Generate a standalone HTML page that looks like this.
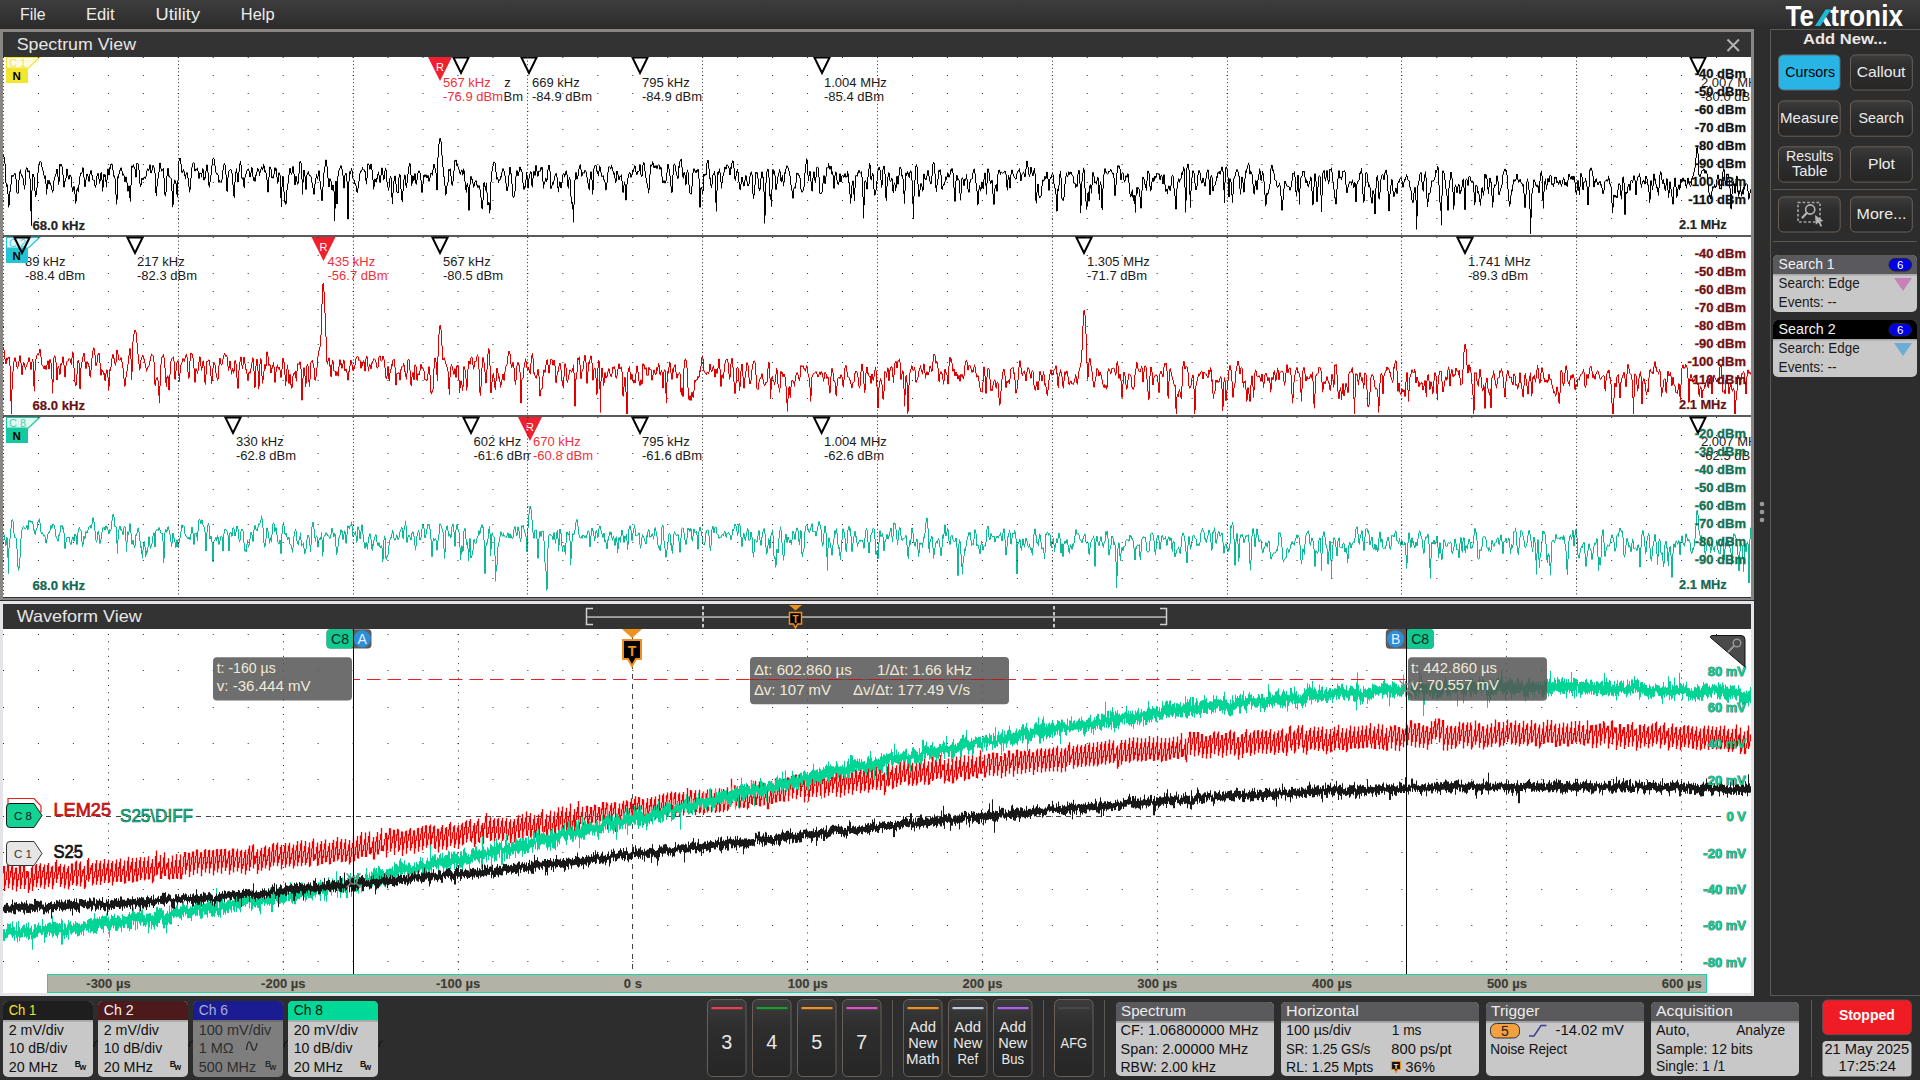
<!DOCTYPE html>
<html><head><meta charset="utf-8"><title>Tektronix</title>
<style>html,body{margin:0;padding:0;background:#2d2d2d;overflow:hidden;width:1920px;height:1080px}
svg{display:block;font-family:"Liberation Sans", sans-serif}</style></head>
<body><svg width="1920" height="1080" viewBox="0 0 1920 1080" font-family='"Liberation Sans", sans-serif'>
<rect x="0" y="0" width="1920" height="1080" fill="#2d2d2d"/>
<defs><linearGradient id="mg" x1="0" y1="0" x2="0" y2="1"><stop offset="0" stop-color="#3d3d3d"/><stop offset="1" stop-color="#2b2b2b"/></linearGradient></defs>
<rect x="0" y="0" width="1920" height="29" fill="url(#mg)"/>
<text x="20.0" y="19.5" font-size="16" fill="#ececec" textLength="25.5" lengthAdjust="spacingAndGlyphs">File</text>
<text x="86.0" y="19.5" font-size="16" fill="#ececec" textLength="28.5" lengthAdjust="spacingAndGlyphs">Edit</text>
<text x="155.5" y="19.5" font-size="16" fill="#ececec" textLength="44.5" lengthAdjust="spacingAndGlyphs">Utility</text>
<text x="240.8" y="19.5" font-size="16" fill="#ececec" textLength="33.7" lengthAdjust="spacingAndGlyphs">Help</text>
<text x="1785.5" y="25.8" font-size="30" fill="#ffffff" font-weight="bold" textLength="28.4" lengthAdjust="spacingAndGlyphs">Te</text>
<text x="1830.2" y="25.8" font-size="30" fill="#ffffff" font-weight="bold" textLength="72.8" lengthAdjust="spacingAndGlyphs">tronix</text>
<path d="M1821.5 18.2L1824.5 14.2L1831.4 25.9H1826Z" fill="#ffffff"/>
<path d="M1814.9 25.9H1820.4L1831 9.4H1825.6Z" fill="#20b8d8"/>
<rect x="0" y="29" width="1754" height="571" fill="#8a8684"/>
<rect x="3" y="32" width="1748" height="25" fill="#333333"/>
<text x="16.7" y="50.0" font-size="16.5" fill="#e6e6e6" textLength="119.3" lengthAdjust="spacingAndGlyphs">Spectrum View</text>
<path d="M1727.5 39.5L1739 51M1739 39.5L1727.5 51" stroke="#b4b4b4" stroke-width="2" fill="none"/>
<rect x="3" y="57" width="1748" height="540" fill="#ffffff"/>
<rect x="3" y="597" width="1748" height="1" fill="#333"/>
<clipPath id="cp1"><rect x="3" y="57" width="1748" height="178"/></clipPath>
<clipPath id="cp2"><rect x="3" y="237" width="1748" height="178"/></clipPath>
<clipPath id="cp3"><rect x="3" y="417" width="1748" height="180"/></clipPath>
<g clip-path="url(#cp1)">
<path d="M3.5 154.6V157.1M4.5 157.1V163.7M5.5 163.7V182.8M6.5 182.8V186.9M7.5 184.5V194.0M8.5 194.0V207.4M9.5 191.2V205.2M10.5 184.4V191.8M11.5 175.2V184.4M12.5 175.2V176.8M13.5 174.8V176.5M14.5 173.2V174.8M15.5 173.4V179.1M16.5 179.1V192.6M17.5 192.6V193.7M18.5 180.2V193.3M19.5 171.5V180.2M20.5 169.6V173.7M21.5 173.7V176.3M22.5 175.5V178.3M23.5 178.3V185.3M24.5 185.1V189.5M25.5 169.7V185.1M26.5 167.4V169.7M27.5 168.0V172.2M28.5 170.5V172.2M29.5 170.5V178.8M30.5 178.8V211.1M31.5 190.4V225.8M32.5 174.0V190.4M33.5 174.0V177.1M34.5 177.1V190.9M35.5 190.9V197.1M36.5 187.6V195.1M37.5 172.8V187.6M38.5 165.3V172.8M39.5 161.6V165.3M40.5 161.2V162.2M41.5 162.2V167.1M42.5 167.1V170.7M43.5 170.7V175.4M44.5 175.4V178.8M45.5 175.5V183.8M46.5 183.8V194.5M47.5 180.2V189.1M48.5 180.2V184.2M49.5 180.3V184.2M50.5 182.6V185.5M51.5 185.5V189.9M52.5 189.9V192.6M53.5 180.6V190.9M54.5 176.7V180.6M55.5 173.9V176.7M56.5 169.0V173.9M57.5 169.0V176.7M58.5 176.7V184.8M59.5 164.1V181.6M60.5 164.1V166.3M61.5 164.1V166.5M62.5 166.5V174.8M63.5 174.8V187.2M64.5 180.9V187.2M65.5 178.0V181.5M66.5 168.9V178.0M67.5 168.9V175.7M68.5 175.7V179.4M69.5 174.9V179.2M70.5 174.9V176.7M71.5 176.7V187.4M72.5 187.4V191.9M73.5 186.2V190.4M74.5 186.5V194.2M75.5 194.2V203.7M76.5 189.6V201.3M77.5 187.7V190.8M78.5 184.7V192.2M79.5 176.3V184.7M80.5 172.8V176.3M81.5 172.4V173.9M82.5 167.4V172.4M83.5 167.8V177.5M84.5 177.5V186.8M85.5 179.7V186.8M86.5 173.9V179.7M87.5 173.9V176.3M88.5 176.3V181.5M89.5 174.1V181.5M90.5 170.4V174.1M91.5 170.4V175.4M92.5 175.0V180.0M93.5 179.6V180.6M94.5 180.0V185.8M95.5 185.0V187.7M96.5 176.0V185.0M97.5 173.2V176.0M98.5 173.3V179.1M99.5 179.1V183.7M100.5 173.1V181.2M101.5 172.1V179.9M102.5 179.9V191.5M103.5 174.2V187.4M104.5 174.2V177.0M105.5 174.7V181.7M106.5 179.8V187.2M107.5 168.8V179.8M108.5 168.8V175.2M109.5 167.3V175.2M110.5 164.2V168.9M111.5 163.6V165.1M112.5 164.3V170.3M113.5 170.3V176.6M114.5 175.5V178.5M115.5 178.5V194.5M116.5 194.5V204.5M117.5 176.4V199.5M118.5 174.1V178.4M119.5 170.2V174.1M120.5 167.8V170.7M121.5 167.6V171.2M122.5 171.2V175.6M123.5 173.6V175.6M124.5 175.6V181.9M125.5 176.8V181.9M126.5 176.8V182.7M127.5 182.7V191.3M128.5 185.8V191.3M129.5 185.8V198.0M130.5 185.2V201.7M131.5 165.7V185.2M132.5 165.7V167.7M133.5 164.4V167.2M134.5 166.9V169.1M135.5 169.1V177.3M136.5 163.2V177.2M137.5 163.1V164.1M138.5 163.9V170.0M139.5 170.0V183.6M140.5 183.6V186.9M141.5 178.1V185.0M142.5 178.1V179.9M143.5 177.5V179.9M144.5 176.8V178.2M145.5 176.4V178.8M146.5 170.6V176.4M147.5 168.5V170.6M148.5 169.1V171.1M149.5 164.6V169.5M150.5 164.7V173.0M151.5 170.3V173.2M152.5 165.4V170.3M153.5 165.4V167.5M154.5 167.5V173.2M155.5 173.2V193.0M156.5 186.3V196.1M157.5 178.4V186.3M158.5 172.0V178.4M159.5 162.9V172.0M160.5 162.9V168.6M161.5 168.6V171.5M162.5 169.1V170.7M163.5 168.1V178.1M164.5 178.1V194.7M165.5 191.9V196.3M166.5 175.9V191.9M167.5 168.2V175.9M168.5 168.2V176.6M169.5 175.5V177.5M170.5 177.4V178.4M171.5 178.4V191.0M172.5 191.0V207.2M173.5 183.8V204.7M174.5 179.7V183.8M175.5 180.5V183.7M176.5 183.4V194.4M177.5 180.3V197.2M178.5 160.9V180.3M179.5 158.0V160.9M180.5 158.0V164.1M181.5 164.1V172.6M182.5 170.8V172.8M183.5 169.1V171.6M184.5 171.2V176.2M185.5 174.7V179.2M186.5 172.5V174.7M187.5 172.5V178.1M188.5 177.9V186.7M189.5 186.7V192.4M190.5 178.2V189.7M191.5 167.4V178.2M192.5 163.4V167.4M193.5 162.3V163.4M194.5 163.1V171.2M195.5 168.8V171.2M196.5 168.7V170.2M197.5 167.7V171.1M198.5 171.1V178.6M199.5 172.8V178.6M200.5 172.8V174.0M201.5 173.0V177.3M202.5 168.3V173.0M203.5 169.3V180.2M204.5 177.0V180.2M205.5 171.1V178.5M206.5 164.7V171.1M207.5 164.8V172.5M208.5 172.5V185.5M209.5 181.9V187.5M210.5 175.2V181.9M211.5 165.5V175.2M212.5 158.8V165.5M213.5 157.7V159.0M214.5 159.0V165.7M215.5 165.7V172.5M216.5 172.5V174.4M217.5 173.4V175.0M218.5 175.0V182.5M219.5 179.9V182.5M220.5 181.4V182.4M221.5 179.5V182.7M222.5 170.2V179.5M223.5 164.6V170.2M224.5 163.2V165.0M225.5 165.0V174.6M226.5 174.6V191.0M227.5 177.5V191.8M228.5 171.1V177.5M229.5 169.9V171.1M230.5 169.1V170.1M231.5 169.7V173.3M232.5 173.3V184.8M233.5 184.8V196.2M234.5 181.9V197.8M235.5 171.8V181.9M236.5 168.4V173.1M237.5 173.1V182.3M238.5 171.8V182.0M239.5 163.6V171.8M240.5 160.9V165.0M241.5 165.0V178.3M242.5 177.5V179.5M243.5 177.5V186.5M244.5 177.5V188.1M245.5 173.9V177.5M246.5 170.6V174.1M247.5 169.1V170.7M248.5 168.6V170.8M249.5 170.8V177.1M250.5 172.7V177.1M251.5 167.1V172.7M252.5 167.9V176.7M253.5 176.7V180.7M254.5 177.4V181.4M255.5 174.7V181.4M256.5 171.8V175.7M257.5 167.9V171.8M258.5 168.9V171.4M259.5 171.4V176.1M260.5 169.2V172.6M261.5 166.6V169.2M262.5 167.6V170.3M263.5 163.9V168.4M264.5 165.9V172.1M265.5 170.3V173.0M266.5 173.0V179.8M267.5 179.8V192.2M268.5 177.1V192.2M269.5 166.8V177.1M270.5 166.8V169.3M271.5 169.3V178.0M272.5 176.5V178.3M273.5 174.3V178.3M274.5 167.6V174.3M275.5 167.6V171.0M276.5 168.5V177.3M277.5 177.3V183.7M278.5 172.7V181.9M279.5 172.7V175.3M280.5 175.3V198.0M281.5 186.9V206.9M282.5 176.1V186.9M283.5 176.4V191.7M284.5 191.7V202.6M285.5 200.8V204.6M286.5 190.0V203.7M287.5 183.5V190.0M288.5 174.8V183.5M289.5 168.2V174.8M290.5 168.2V173.0M291.5 172.7V174.7M292.5 166.4V172.7M293.5 166.4V173.9M294.5 173.9V184.9M295.5 176.2V184.9M296.5 176.2V181.7M297.5 181.7V184.6M298.5 173.5V183.4M299.5 161.8V173.5M300.5 161.1V163.1M301.5 163.1V179.3M302.5 179.3V194.5M303.5 170.0V182.4M304.5 170.0V176.4M305.5 176.4V189.6M306.5 174.8V189.6M307.5 172.6V174.8M308.5 171.2V174.4M309.5 174.4V176.1M310.5 175.3V176.7M311.5 176.7V182.6M312.5 182.6V187.9M313.5 187.9V194.4M314.5 184.2V194.4M315.5 178.1V184.2M316.5 174.1V178.1M317.5 176.4V179.4M318.5 170.6V176.4M319.5 170.6V181.2M320.5 181.2V189.5M321.5 189.5V200.8M322.5 186.8V200.8M323.5 172.7V186.8M324.5 166.5V172.7M325.5 159.8V166.5M326.5 159.8V166.5M327.5 166.5V177.9M328.5 177.9V187.1M329.5 178.7V187.1M330.5 178.7V181.3M331.5 181.3V190.0M332.5 184.9V190.3M333.5 184.9V191.4M334.5 191.4V221.1M335.5 181.1V208.5M336.5 181.1V204.0M337.5 176.3V204.0M338.5 170.4V176.3M339.5 168.1V170.4M340.5 165.6V168.1M341.5 165.6V169.3M342.5 169.3V175.6M343.5 175.6V188.2M344.5 175.3V188.2M345.5 173.1V175.3M346.5 173.3V181.5M347.5 181.5V219.2M348.5 181.3V219.2M349.5 171.4V181.3M350.5 170.9V174.1M351.5 168.0V170.9M352.5 170.5V178.5M353.5 178.5V180.2M354.5 179.9V184.2M355.5 183.3V185.7M356.5 185.7V192.0M357.5 188.3V192.8M358.5 181.2V188.3M359.5 173.4V181.2M360.5 170.8V173.4M361.5 169.8V171.6M362.5 167.0V169.8M363.5 169.3V170.3M364.5 169.6V172.1M365.5 171.2V180.6M366.5 178.0V184.3M367.5 163.8V178.0M368.5 163.6V165.1M369.5 165.1V169.5M370.5 163.9V169.1M371.5 163.9V170.0M372.5 170.0V180.0M373.5 180.0V189.5M374.5 178.9V186.8M375.5 178.9V182.0M376.5 178.0V182.4M377.5 174.1V179.2M378.5 171.7V175.3M379.5 175.3V182.4M380.5 175.3V182.8M381.5 167.8V175.3M382.5 167.8V174.9M383.5 174.9V180.1M384.5 170.9V179.0M385.5 167.8V170.9M386.5 169.8V181.8M387.5 181.8V187.4M388.5 187.4V190.7M389.5 178.3V187.5M390.5 176.0V178.3M391.5 177.8V197.4M392.5 192.8V204.1M393.5 181.2V192.8M394.5 175.9V181.2M395.5 175.8V184.1M396.5 184.1V192.1M397.5 191.7V193.1M398.5 177.6V193.1M399.5 174.0V177.6M400.5 174.9V189.0M401.5 189.0V200.2M402.5 191.0V202.1M403.5 179.5V191.0M404.5 174.6V179.5M405.5 175.4V185.5M406.5 182.9V187.9M407.5 174.0V182.9M408.5 166.4V174.0M409.5 163.0V166.4M410.5 163.7V175.0M411.5 175.0V185.9M412.5 175.7V183.5M413.5 175.9V181.1M414.5 173.4V180.1M415.5 173.6V183.5M416.5 179.8V184.6M417.5 173.0V179.8M418.5 170.7V173.0M419.5 170.7V172.9M420.5 172.9V180.3M421.5 180.3V192.6M422.5 183.8V192.6M423.5 175.1V183.8M424.5 174.6V177.3M425.5 174.6V176.7M426.5 174.7V178.0M427.5 175.4V178.0M428.5 175.4V181.4M429.5 177.7V181.4M430.5 173.2V177.7M431.5 172.8V174.2M432.5 169.8V175.5M433.5 164.1V169.8M434.5 164.2V168.2M435.5 168.2V173.0M436.5 173.0V190.1M437.5 157.5V190.1M438.5 144.1V157.5M439.5 138.4V144.1M440.5 138.0V141.6M441.5 141.6V155.4M442.5 155.4V167.1M443.5 167.1V177.1M444.5 176.5V185.6M445.5 185.6V195.4M446.5 185.8V194.0M447.5 182.3V185.8M448.5 169.2V182.3M449.5 169.2V171.1M450.5 168.6V176.1M451.5 176.1V184.6M452.5 181.3V185.7M453.5 170.7V181.3M454.5 160.4V170.7M455.5 159.9V161.6M456.5 159.9V165.8M457.5 163.5V166.6M458.5 166.6V169.5M459.5 169.5V173.3M460.5 171.9V174.7M461.5 169.8V171.9M462.5 170.3V175.4M463.5 168.6V174.1M464.5 170.6V181.5M465.5 181.5V189.9M466.5 184.7V192.6M467.5 183.1V187.0M468.5 187.0V210.4M469.5 184.6V210.4M470.5 176.3V184.6M471.5 176.3V179.8M472.5 178.9V183.5M473.5 183.5V187.6M474.5 182.0V186.2M475.5 180.6V182.1M476.5 180.6V185.4M477.5 184.7V187.6M478.5 185.4V187.6M479.5 185.5V189.5M480.5 189.5V197.5M481.5 197.5V208.3M482.5 200.2V209.2M483.5 182.9V200.2M484.5 182.1V186.8M485.5 185.9V190.5M486.5 182.8V192.6M487.5 192.6V205.1M488.5 202.1V205.1M489.5 202.7V213.4M490.5 181.8V210.1M491.5 171.3V181.8M492.5 165.9V171.3M493.5 161.9V165.9M494.5 161.9V163.0M495.5 163.0V172.1M496.5 172.1V179.5M497.5 177.2V179.5M498.5 179.4V183.0M499.5 179.3V180.8M500.5 176.1V179.7M501.5 172.3V177.5M502.5 168.5V172.3M503.5 168.5V171.1M504.5 171.1V175.7M505.5 175.7V183.3M506.5 183.3V190.8M507.5 186.7V190.9M508.5 175.4V186.7M509.5 167.1V175.4M510.5 167.1V174.1M511.5 173.4V183.8M512.5 183.8V196.5M513.5 196.2V197.9M514.5 191.2V196.6M515.5 176.5V191.2M516.5 170.5V176.5M517.5 170.5V175.8M518.5 171.9V175.8M519.5 166.9V171.9M520.5 166.9V170.3M521.5 169.2V172.1M522.5 172.1V182.8M523.5 182.8V189.5M524.5 186.1V189.5M525.5 179.7V187.5M526.5 172.1V179.7M527.5 175.3V188.2M528.5 178.6V188.2M529.5 173.8V178.6M530.5 171.3V173.8M531.5 172.1V185.6M532.5 178.3V187.4M533.5 171.2V178.3M534.5 171.2V175.5M535.5 165.3V175.5M536.5 165.3V171.3M537.5 171.3V176.7M538.5 170.9V175.9M539.5 170.7V171.7M540.5 167.5V171.4M541.5 166.9V169.7M542.5 167.2V181.5M543.5 181.5V188.5M544.5 181.5V184.5M545.5 177.8V181.5M546.5 178.7V182.0M547.5 169.7V180.0M548.5 165.0V169.7M549.5 165.0V171.4M550.5 171.4V188.7M551.5 185.6V188.7M552.5 182.1V185.6M553.5 180.6V184.5M554.5 175.7V180.6M555.5 173.5V175.7M556.5 173.2V177.4M557.5 177.4V188.1M558.5 186.6V192.2M559.5 181.5V186.6M560.5 182.1V188.0M561.5 182.1V188.1M562.5 174.6V182.1M563.5 173.2V174.6M564.5 173.8V177.3M565.5 171.4V175.4M566.5 170.5V174.7M567.5 174.7V186.5M568.5 179.7V188.5M569.5 177.2V179.7M570.5 179.3V196.5M571.5 196.5V203.7M572.5 201.9V209.4M573.5 204.6V222.4M574.5 180.1V204.6M575.5 172.4V180.1M576.5 172.4V179.2M577.5 175.7V179.2M578.5 168.9V175.9M579.5 165.3V168.9M580.5 164.3V169.6M581.5 169.6V176.6M582.5 172.3V175.7M583.5 172.4V173.4M584.5 170.2V173.3M585.5 170.2V171.7M586.5 171.7V177.3M587.5 177.3V183.3M588.5 183.3V188.6M589.5 179.2V190.2M590.5 171.6V179.2M591.5 171.6V180.1M592.5 180.1V194.5M593.5 168.5V190.0M594.5 165.6V168.5M595.5 165.1V166.1M596.5 165.5V171.6M597.5 170.6V174.0M598.5 171.2V176.2M599.5 165.6V171.2M600.5 167.0V172.5M601.5 172.5V176.7M602.5 175.8V176.8M603.5 175.4V180.2M604.5 179.6V182.3M605.5 182.3V190.3M606.5 182.7V189.8M607.5 172.3V182.7M608.5 166.7V172.3M609.5 166.4V167.4M610.5 167.3V169.3M611.5 164.8V168.4M612.5 167.2V171.2M613.5 171.2V174.5M614.5 172.7V178.2M615.5 178.2V183.1M616.5 171.0V181.4M617.5 171.0V174.7M618.5 174.7V179.8M619.5 176.4V179.8M620.5 175.8V176.9M621.5 174.5V180.9M622.5 180.9V192.4M623.5 185.3V192.7M624.5 181.7V185.3M625.5 184.4V200.3M626.5 184.3V200.1M627.5 178.1V184.3M628.5 173.8V178.1M629.5 172.1V173.8M630.5 173.0V177.4M631.5 174.4V177.4M632.5 170.0V174.8M633.5 168.6V171.8M634.5 165.3V168.6M635.5 166.0V172.0M636.5 172.0V174.8M637.5 171.0V174.5M638.5 171.0V172.1M639.5 164.4V171.0M640.5 164.5V174.7M641.5 174.7V176.9M642.5 165.1V176.0M643.5 162.2V165.1M644.5 162.9V171.2M645.5 171.2V177.9M646.5 177.9V183.4M647.5 183.4V188.2M648.5 188.2V193.3M649.5 174.4V189.7M650.5 164.6V174.4M651.5 164.6V166.4M652.5 161.3V165.0M653.5 162.9V167.7M654.5 165.6V168.0M655.5 165.6V167.8M656.5 165.4V168.7M657.5 165.5V168.7M658.5 164.5V165.5M659.5 165.1V169.4M660.5 166.7V169.4M661.5 167.5V176.6M662.5 176.6V182.9M663.5 180.5V182.9M664.5 180.5V183.2M665.5 180.7V183.3M666.5 172.6V180.7M667.5 164.1V172.6M668.5 164.1V168.9M669.5 168.9V175.8M670.5 175.8V186.3M671.5 186.3V192.9M672.5 175.0V192.2M673.5 164.7V175.0M674.5 163.6V165.3M675.5 165.3V171.5M676.5 171.5V175.6M677.5 175.6V178.9M678.5 166.1V178.3M679.5 161.3V167.8M680.5 159.4V161.3M681.5 158.9V167.3M682.5 167.3V176.9M683.5 172.7V178.5M684.5 172.1V175.2M685.5 175.2V185.3M686.5 172.3V184.1M687.5 169.7V172.4M688.5 172.4V184.8M689.5 184.8V193.2M690.5 193.1V194.1M691.5 186.3V194.4M692.5 172.9V186.3M693.5 168.6V172.9M694.5 168.6V171.3M695.5 170.6V172.8M696.5 170.0V172.8M697.5 169.2V171.8M698.5 169.2V178.6M699.5 178.6V207.4M700.5 187.8V207.4M701.5 187.0V189.4M702.5 189.4V194.0M703.5 174.0V190.9M704.5 174.0V176.3M705.5 173.7V175.3M706.5 163.1V175.1M707.5 160.1V163.1M708.5 160.1V168.8M709.5 168.8V178.9M710.5 177.7V185.6M711.5 184.4V188.1M712.5 175.0V184.4M713.5 173.3V175.0M714.5 170.9V175.4M715.5 175.4V202.7M716.5 190.6V211.5M717.5 172.1V190.6M718.5 171.2V174.7M719.5 168.6V172.8M720.5 172.6V182.0M721.5 182.0V188.5M722.5 176.0V183.1M723.5 172.4V176.0M724.5 166.9V172.4M725.5 166.9V169.3M726.5 164.7V169.0M727.5 164.7V165.9M728.5 165.9V168.2M729.5 168.2V175.0M730.5 166.9V175.0M731.5 163.1V168.9M732.5 160.5V163.1M733.5 161.0V168.2M734.5 168.2V179.1M735.5 176.1V180.7M736.5 170.9V176.1M737.5 169.0V172.7M738.5 172.0V181.9M739.5 181.9V189.2M740.5 184.2V190.1M741.5 177.0V184.2M742.5 177.0V182.2M743.5 182.2V186.2M744.5 180.3V186.0M745.5 175.3V180.3M746.5 175.7V181.6M747.5 181.5V185.9M748.5 183.9V186.1M749.5 176.4V183.9M750.5 172.6V176.4M751.5 171.6V174.7M752.5 174.7V193.8M753.5 193.8V198.8M754.5 184.8V195.3M755.5 172.1V184.8M756.5 172.1V173.8M757.5 172.4V178.5M758.5 178.5V188.6M759.5 187.8V191.2M760.5 178.4V189.4M761.5 171.7V178.4M762.5 171.7V177.9M763.5 176.9V191.6M764.5 191.6V223.5M765.5 182.8V215.4M766.5 171.6V182.8M767.5 168.9V171.6M768.5 169.2V177.5M769.5 177.5V196.3M770.5 194.1V199.7M771.5 189.4V206.7M772.5 169.4V189.4M773.5 169.4V174.2M774.5 170.8V175.6M775.5 175.6V189.7M776.5 183.8V189.7M777.5 176.6V183.8M778.5 172.7V176.6M779.5 169.1V172.7M780.5 171.5V180.9M781.5 177.4V182.2M782.5 175.1V181.3M783.5 181.3V186.2M784.5 172.3V182.3M785.5 168.8V173.7M786.5 165.6V168.8M787.5 165.8V167.7M788.5 167.7V171.0M789.5 171.0V175.8M790.5 175.8V184.9M791.5 184.9V190.7M792.5 190.7V198.4M793.5 188.5V198.4M794.5 186.8V188.5M795.5 182.7V188.5M796.5 172.9V182.7M797.5 172.9V174.6M798.5 173.4V175.8M799.5 175.2V178.1M800.5 178.1V189.3M801.5 189.2V192.3M802.5 190.6V192.3M803.5 186.7V190.7M804.5 172.9V186.7M805.5 164.0V172.9M806.5 158.5V164.0M807.5 159.8V175.3M808.5 175.3V181.0M809.5 171.1V176.0M810.5 171.3V181.5M811.5 181.5V190.8M812.5 178.0V191.4M813.5 171.6V178.0M814.5 171.9V180.6M815.5 177.2V182.8M816.5 167.3V177.2M817.5 166.7V167.7M818.5 167.6V177.2M819.5 177.2V193.4M820.5 193.0V194.0M821.5 192.1V193.7M822.5 183.3V192.1M823.5 175.5V183.3M824.5 175.5V183.6M825.5 176.5V183.9M826.5 167.4V176.5M827.5 167.3V168.3M828.5 163.0V167.8M829.5 165.7V169.4M830.5 166.1V169.4M831.5 166.1V174.1M832.5 171.4V175.2M833.5 175.2V188.4M834.5 175.6V188.5M835.5 171.7V175.6M836.5 172.4V180.3M837.5 180.3V184.1M838.5 182.1V184.9M839.5 173.6V182.1M840.5 173.6V181.9M841.5 176.0V181.9M842.5 175.1V176.1M843.5 175.5V177.6M844.5 173.5V177.0M845.5 173.5V177.4M846.5 175.8V177.4M847.5 171.0V176.8M848.5 173.6V183.1M849.5 182.4V194.2M850.5 194.2V203.7M851.5 185.5V198.2M852.5 180.8V185.5M853.5 180.8V194.4M854.5 187.8V201.0M855.5 175.4V187.8M856.5 175.2V176.2M857.5 172.4V176.5M858.5 170.3V173.4M859.5 170.2V172.8M860.5 172.5V173.5M861.5 171.3V177.1M862.5 177.1V196.9M863.5 196.9V218.4M864.5 181.3V205.1M865.5 180.4V182.3M866.5 182.3V189.2M867.5 176.9V189.2M868.5 168.8V176.9M869.5 163.0V168.8M870.5 164.9V179.3M871.5 176.1V180.3M872.5 172.9V176.1M873.5 174.4V189.2M874.5 189.2V195.5M875.5 190.2V194.7M876.5 181.0V190.2M877.5 170.5V181.0M878.5 167.4V170.5M879.5 167.0V170.1M880.5 170.1V180.0M881.5 180.0V187.8M882.5 169.5V184.9M883.5 165.9V169.5M884.5 166.1V174.0M885.5 174.0V197.8M886.5 186.3V200.8M887.5 176.8V186.3M888.5 172.4V176.8M889.5 173.0V180.4M890.5 180.4V181.8M891.5 177.8V180.7M892.5 178.7V191.2M893.5 184.7V193.0M894.5 182.6V184.7M895.5 184.7V191.1M896.5 176.3V187.8M897.5 176.1V184.3M898.5 175.4V184.3M899.5 167.3V175.4M900.5 166.9V168.8M901.5 168.8V176.3M902.5 174.9V178.9M903.5 178.9V193.8M904.5 190.7V203.7M905.5 172.8V190.7M906.5 172.8V176.0M907.5 171.2V174.2M908.5 172.9V176.8M909.5 172.2V178.0M910.5 170.4V172.8M911.5 171.5V180.4M912.5 180.4V203.8M913.5 196.3V218.9M914.5 180.1V196.3M915.5 165.9V180.1M916.5 164.3V166.9M917.5 166.9V184.1M918.5 184.1V196.6M919.5 189.8V196.6M920.5 183.4V189.8M921.5 183.4V186.7M922.5 186.7V191.4M923.5 173.9V190.0M924.5 173.9V178.8M925.5 178.2V180.0M926.5 175.6V179.8M927.5 170.3V175.6M928.5 170.3V176.3M929.5 176.3V181.4M930.5 181.4V184.2M931.5 175.9V183.8M932.5 164.0V175.9M933.5 162.0V164.0M934.5 163.1V173.8M935.5 173.8V187.9M936.5 185.2V191.9M937.5 179.1V185.2M938.5 170.3V179.1M939.5 169.8V171.9M940.5 169.5V175.2M941.5 175.2V189.0M942.5 185.9V189.7M943.5 183.8V185.9M944.5 181.7V184.9M945.5 176.6V181.7M946.5 176.6V179.8M947.5 172.5V177.1M948.5 173.4V177.3M949.5 174.6V177.3M950.5 169.5V174.6M951.5 168.4V171.3M952.5 168.4V173.0M953.5 173.0V187.6M954.5 187.6V201.5M955.5 181.0V201.5M956.5 175.1V181.0M957.5 175.4V180.3M958.5 178.6V180.3M959.5 180.3V193.3M960.5 193.3V200.4M961.5 178.5V193.4M962.5 177.5V179.3M963.5 179.3V185.7M964.5 179.0V185.7M965.5 178.4V180.7M966.5 174.1V179.3M967.5 179.3V189.1M968.5 189.1V192.4M969.5 181.8V192.4M970.5 179.1V182.5M971.5 178.6V179.6M972.5 172.8V178.9M973.5 169.4V172.8M974.5 168.7V173.5M975.5 173.5V183.1M976.5 183.1V191.2M977.5 191.2V205.2M978.5 189.5V204.0M979.5 185.2V189.5M980.5 187.3V191.3M981.5 181.7V189.2M982.5 182.1V188.3M983.5 179.4V189.1M984.5 172.8V179.4M985.5 172.8V185.5M986.5 183.3V194.5M987.5 168.7V183.3M988.5 168.7V172.6M989.5 172.6V180.9M990.5 180.9V183.9M991.5 180.1V183.1M992.5 180.3V193.8M993.5 193.8V204.7M994.5 188.6V204.4M995.5 185.1V188.6M996.5 184.2V191.4M997.5 174.3V191.4M998.5 170.1V174.3M999.5 169.8V172.5M1000.5 171.8V174.9M1001.5 171.7V172.7M1002.5 172.6V173.6M1003.5 172.2V173.2M1004.5 170.8V172.4M1005.5 171.0V174.5M1006.5 174.5V187.3M1007.5 179.7V190.3M1008.5 175.1V179.7M1009.5 177.3V188.2M1010.5 174.5V188.2M1011.5 169.8V174.5M1012.5 169.8V173.8M1013.5 173.8V176.5M1014.5 176.5V178.1M1015.5 178.1V179.4M1016.5 173.6V179.0M1017.5 171.3V173.6M1018.5 169.9V171.5M1019.5 168.3V172.4M1020.5 172.4V181.0M1021.5 174.6V180.7M1022.5 173.4V174.6M1023.5 171.7V173.5M1024.5 173.4V177.1M1025.5 168.9V176.7M1026.5 160.9V168.9M1027.5 160.9V167.1M1028.5 167.1V174.7M1029.5 174.3V176.9M1030.5 167.1V174.3M1031.5 167.1V172.6M1032.5 172.6V176.0M1033.5 170.3V175.7M1034.5 168.0V173.5M1035.5 173.5V200.7M1036.5 192.4V203.4M1037.5 183.9V192.4M1038.5 184.0V195.7M1039.5 195.7V198.1M1040.5 195.8V197.5M1041.5 186.1V195.9M1042.5 179.7V186.1M1043.5 179.7V181.5M1044.5 176.2V180.5M1045.5 176.3V179.2M1046.5 171.9V178.3M1047.5 171.9V179.0M1048.5 179.0V190.5M1049.5 179.0V190.5M1050.5 177.0V179.0M1051.5 174.6V177.9M1052.5 173.0V174.7M1053.5 174.7V183.7M1054.5 183.7V188.4M1055.5 188.1V194.3M1056.5 194.3V211.5M1057.5 189.0V211.0M1058.5 185.4V191.2M1059.5 174.0V185.4M1060.5 170.8V177.8M1061.5 177.8V198.6M1062.5 198.4V200.4M1063.5 197.0V200.8M1064.5 184.0V197.0M1065.5 176.3V184.0M1066.5 172.7V176.3M1067.5 175.3V177.1M1068.5 171.5V175.3M1069.5 172.1V174.8M1070.5 171.8V173.9M1071.5 172.0V174.8M1072.5 174.8V176.3M1073.5 176.3V183.3M1074.5 182.5V183.8M1075.5 183.4V187.8M1076.5 184.2V186.9M1077.5 174.2V186.5M1078.5 170.1V174.2M1079.5 170.3V183.6M1080.5 183.6V213.1M1081.5 181.4V205.6M1082.5 172.8V181.4M1083.5 167.8V172.8M1084.5 169.8V188.3M1085.5 188.3V201.4M1086.5 201.4V209.7M1087.5 193.1V206.5M1088.5 191.7V201.3M1089.5 185.5V201.3M1090.5 184.3V188.5M1091.5 185.1V193.4M1092.5 172.3V185.1M1093.5 172.3V176.6M1094.5 176.4V183.2M1095.5 181.7V183.2M1096.5 180.8V184.4M1097.5 176.9V180.8M1098.5 177.7V193.8M1099.5 185.0V200.1M1100.5 181.5V185.0M1101.5 184.6V208.1M1102.5 188.5V210.0M1103.5 174.4V188.5M1104.5 168.5V174.4M1105.5 168.5V172.6M1106.5 171.6V173.5M1107.5 173.5V174.5M1108.5 171.0V173.6M1109.5 171.0V172.1M1110.5 169.1V171.1M1111.5 169.8V172.4M1112.5 172.4V174.3M1113.5 172.9V178.0M1114.5 178.0V195.7M1115.5 184.8V195.7M1116.5 173.0V184.8M1117.5 165.4V173.0M1118.5 165.4V167.5M1119.5 165.8V169.1M1120.5 169.1V179.9M1121.5 173.5V179.9M1122.5 172.3V173.5M1123.5 173.2V180.0M1124.5 180.0V182.4M1125.5 175.6V180.8M1126.5 175.6V177.4M1127.5 173.5V177.4M1128.5 174.1V182.8M1129.5 182.8V193.9M1130.5 193.9V197.2M1131.5 191.5V196.1M1132.5 189.5V197.4M1133.5 195.1V200.9M1134.5 195.1V204.1M1135.5 195.5V212.6M1136.5 187.3V195.5M1137.5 187.3V193.5M1138.5 187.3V189.1M1139.5 189.1V196.9M1140.5 196.9V208.3M1141.5 190.5V208.3M1142.5 177.1V190.5M1143.5 176.9V179.3M1144.5 179.2V184.5M1145.5 184.0V188.1M1146.5 180.7V190.7M1147.5 170.9V180.7M1148.5 170.9V173.4M1149.5 173.4V186.5M1150.5 186.1V191.3M1151.5 181.8V189.8M1152.5 177.8V181.8M1153.5 177.8V181.8M1154.5 176.0V180.7M1155.5 176.0V178.5M1156.5 173.1V177.4M1157.5 173.2V174.2M1158.5 173.4V174.9M1159.5 173.7V179.5M1160.5 175.8V180.1M1161.5 174.9V176.5M1162.5 176.5V184.1M1163.5 174.6V183.9M1164.5 174.6V184.7M1165.5 184.7V191.7M1166.5 189.0V191.3M1167.5 188.8V194.1M1168.5 185.7V188.8M1169.5 186.0V190.3M1170.5 185.6V190.8M1171.5 176.4V185.6M1172.5 174.9V176.4M1173.5 176.3V188.3M1174.5 188.3V195.8M1175.5 195.8V209.3M1176.5 188.6V209.3M1177.5 181.7V188.6M1178.5 178.4V181.7M1179.5 179.4V182.6M1180.5 178.5V180.3M1181.5 172.6V178.5M1182.5 171.2V174.9M1183.5 166.7V171.2M1184.5 168.6V187.4M1185.5 187.4V212.5M1186.5 167.8V200.5M1187.5 163.9V167.8M1188.5 163.9V169.8M1189.5 169.8V194.8M1190.5 190.8V207.7M1191.5 177.6V190.8M1192.5 170.6V177.6M1193.5 170.6V173.2M1194.5 173.2V183.3M1195.5 183.3V189.9M1196.5 186.1V189.9M1197.5 174.9V186.1M1198.5 170.4V174.9M1199.5 170.4V172.8M1200.5 172.8V180.5M1201.5 180.5V183.4M1202.5 177.9V183.0M1203.5 177.9V182.3M1204.5 182.3V186.3M1205.5 178.4V186.3M1206.5 172.3V178.4M1207.5 169.6V172.3M1208.5 169.9V179.4M1209.5 179.4V194.9M1210.5 176.5V194.9M1211.5 175.1V177.4M1212.5 177.4V191.1M1213.5 186.2V191.1M1214.5 185.1V186.2M1215.5 181.3V185.1M1216.5 176.2V181.3M1217.5 172.6V178.0M1218.5 171.7V173.5M1219.5 171.2V174.0M1220.5 170.7V174.5M1221.5 166.9V170.7M1222.5 166.9V171.8M1223.5 171.4V190.0M1224.5 182.5V203.0M1225.5 167.4V182.5M1226.5 166.6V168.8M1227.5 168.8V177.4M1228.5 177.4V197.0M1229.5 178.6V197.0M1230.5 178.6V182.1M1231.5 182.1V195.2M1232.5 194.1V202.8M1233.5 178.4V194.1M1234.5 176.2V178.6M1235.5 172.0V176.2M1236.5 169.3V172.0M1237.5 169.5V171.8M1238.5 171.8V176.4M1239.5 175.9V188.8M1240.5 188.7V194.5M1241.5 176.9V188.7M1242.5 176.9V182.6M1243.5 182.6V192.4M1244.5 178.5V192.1M1245.5 170.6V178.5M1246.5 168.7V172.9M1247.5 165.2V168.7M1248.5 162.8V165.2M1249.5 164.9V174.2M1250.5 170.7V174.2M1251.5 171.9V174.4M1252.5 174.4V184.2M1253.5 184.2V193.4M1254.5 186.1V194.4M1255.5 180.2V186.1M1256.5 180.9V189.8M1257.5 179.8V189.8M1258.5 174.2V180.0M1259.5 168.5V174.2M1260.5 170.7V180.2M1261.5 175.1V180.9M1262.5 171.0V175.1M1263.5 173.3V181.5M1264.5 181.5V194.8M1265.5 194.8V206.2M1266.5 192.9V204.4M1267.5 192.9V195.3M1268.5 189.4V193.7M1269.5 184.1V189.4M1270.5 168.6V184.1M1271.5 164.9V168.6M1272.5 165.2V171.0M1273.5 169.5V173.5M1274.5 173.5V180.0M1275.5 179.9V180.9M1276.5 180.7V186.2M1277.5 186.2V187.7M1278.5 185.1V186.9M1279.5 182.7V185.6M1280.5 185.6V195.9M1281.5 195.9V210.4M1282.5 199.8V210.4M1283.5 188.6V199.8M1284.5 181.0V188.6M1285.5 181.0V183.8M1286.5 183.6V186.2M1287.5 185.7V186.7M1288.5 185.9V187.0M1289.5 186.9V190.3M1290.5 187.2V190.3M1291.5 180.7V187.2M1292.5 173.1V180.7M1293.5 173.1V174.3M1294.5 171.4V176.9M1295.5 176.9V192.0M1296.5 190.5V196.4M1297.5 175.1V190.5M1298.5 175.1V192.4M1299.5 188.5V204.5M1300.5 177.6V188.5M1301.5 176.0V177.6M1302.5 171.0V176.0M1303.5 171.0V172.4M1304.5 171.1V177.4M1305.5 177.4V182.9M1306.5 179.5V182.9M1307.5 181.0V185.9M1308.5 184.2V187.3M1309.5 180.9V184.2M1310.5 176.6V180.9M1311.5 177.6V191.1M1312.5 191.1V205.3M1313.5 186.8V204.3M1314.5 173.6V186.8M1315.5 173.6V181.5M1316.5 181.5V201.8M1317.5 186.8V201.8M1318.5 176.5V186.8M1319.5 175.4V176.6M1320.5 176.6V195.2M1321.5 195.2V212.1M1322.5 172.8V195.4M1323.5 170.6V172.8M1324.5 170.2V178.6M1325.5 177.5V181.4M1326.5 170.4V177.5M1327.5 170.4V180.2M1328.5 180.2V184.2M1329.5 169.2V181.7M1330.5 169.0V170.3M1331.5 167.7V172.3M1332.5 172.3V181.7M1333.5 181.7V189.5M1334.5 189.5V198.2M1335.5 197.4V204.2M1336.5 189.1V204.2M1337.5 178.6V189.2M1338.5 170.5V178.6M1339.5 170.5V178.3M1340.5 176.8V178.3M1341.5 176.8V180.1M1342.5 171.1V177.3M1343.5 171.1V172.1M1344.5 170.3V172.0M1345.5 172.0V184.7M1346.5 184.7V192.8M1347.5 187.3V192.9M1348.5 183.7V187.3M1349.5 181.4V183.7M1350.5 181.5V182.7M1351.5 181.6V185.3M1352.5 179.6V183.1M1353.5 183.1V188.0M1354.5 181.9V187.0M1355.5 183.1V201.9M1356.5 184.2V201.9M1357.5 181.2V184.2M1358.5 180.0V181.5M1359.5 173.0V180.0M1360.5 171.2V174.2M1361.5 168.0V173.5M1362.5 173.5V194.1M1363.5 194.1V202.8M1364.5 186.6V201.1M1365.5 172.8V186.6M1366.5 172.1V173.6M1367.5 173.6V182.1M1368.5 182.1V187.2M1369.5 184.5V187.5M1370.5 187.5V197.4M1371.5 197.3V203.3M1372.5 190.5V203.3M1373.5 190.5V194.1M1374.5 194.1V214.0M1375.5 188.2V214.0M1376.5 176.9V188.2M1377.5 175.3V180.8M1378.5 180.8V198.3M1379.5 192.3V199.4M1380.5 179.3V192.3M1381.5 175.3V179.3M1382.5 174.2V175.3M1383.5 175.3V179.8M1384.5 172.7V179.8M1385.5 170.1V173.1M1386.5 169.8V174.8M1387.5 174.8V191.1M1388.5 191.1V211.1M1389.5 194.0V211.1M1390.5 185.3V194.0M1391.5 179.2V185.3M1392.5 179.8V191.1M1393.5 191.1V196.9M1394.5 192.2V196.5M1395.5 187.8V192.2M1396.5 188.2V193.7M1397.5 183.0V193.7M1398.5 180.9V183.0M1399.5 178.8V182.4M1400.5 177.4V178.8M1401.5 177.4V181.2M1402.5 181.2V187.3M1403.5 182.3V187.3M1404.5 179.0V182.3M1405.5 177.0V180.2M1406.5 174.2V177.0M1407.5 176.1V179.8M1408.5 179.8V180.9M1409.5 180.8V187.3M1410.5 186.9V190.6M1411.5 190.6V200.0M1412.5 200.0V202.9M1413.5 193.0V202.5M1414.5 187.3V193.0M1415.5 187.3V200.2M1416.5 200.2V229.5M1417.5 185.4V216.3M1418.5 180.9V185.4M1419.5 174.2V180.9M1420.5 172.4V174.2M1421.5 172.5V182.2M1422.5 182.2V190.1M1423.5 181.2V191.5M1424.5 174.4V181.2M1425.5 171.5V177.7M1426.5 177.7V198.6M1427.5 198.6V207.0M1428.5 193.1V201.9M1429.5 192.8V194.5M1430.5 187.2V192.8M1431.5 180.6V187.2M1432.5 180.5V181.5M1433.5 180.0V181.5M1434.5 177.2V180.0M1435.5 170.1V177.2M1436.5 170.1V172.9M1437.5 166.0V170.2M1438.5 167.4V185.2M1439.5 185.2V202.4M1440.5 202.4V210.8M1441.5 195.6V225.3M1442.5 170.7V195.6M1443.5 170.7V173.0M1444.5 173.0V179.9M1445.5 179.9V188.9M1446.5 188.9V195.7M1447.5 195.7V210.4M1448.5 188.1V210.4M1449.5 180.2V188.1M1450.5 172.1V180.2M1451.5 172.1V178.4M1452.5 178.4V192.0M1453.5 192.0V209.6M1454.5 187.0V205.6M1455.5 184.6V187.0M1456.5 186.6V192.8M1457.5 186.4V192.8M1458.5 183.9V186.4M1459.5 184.8V193.8M1460.5 190.2V193.8M1461.5 186.7V191.3M1462.5 179.9V186.7M1463.5 178.7V187.7M1464.5 187.7V209.8M1465.5 179.9V209.8M1466.5 178.6V179.9M1467.5 179.9V185.6M1468.5 176.8V185.6M1469.5 176.1V177.1M1470.5 176.8V181.1M1471.5 180.7V182.0M1472.5 180.7V182.6M1473.5 181.8V192.4M1474.5 192.4V205.2M1475.5 185.3V202.4M1476.5 184.9V186.4M1477.5 186.4V193.1M1478.5 191.1V194.4M1479.5 194.4V202.0M1480.5 198.8V205.7M1481.5 188.1V198.8M1482.5 187.2V192.5M1483.5 190.8V195.6M1484.5 174.1V190.8M1485.5 174.1V178.3M1486.5 174.7V178.9M1487.5 178.9V189.4M1488.5 187.2V193.9M1489.5 177.9V187.2M1490.5 177.9V182.7M1491.5 181.8V195.7M1492.5 195.7V207.5M1493.5 187.9V202.2M1494.5 184.5V187.9M1495.5 184.5V186.1M1496.5 175.7V184.5M1497.5 175.7V181.4M1498.5 181.4V194.7M1499.5 191.4V195.1M1500.5 188.2V191.4M1501.5 184.7V188.2M1502.5 174.7V184.7M1503.5 171.3V174.7M1504.5 168.9V171.3M1505.5 168.9V171.6M1506.5 170.0V175.1M1507.5 175.1V189.2M1508.5 189.2V201.2M1509.5 201.2V206.6M1510.5 195.5V204.2M1511.5 189.6V195.5M1512.5 184.5V191.3M1513.5 179.5V184.5M1514.5 179.6V181.6M1515.5 179.2V181.1M1516.5 174.0V179.4M1517.5 174.0V179.9M1518.5 179.6V182.7M1519.5 179.5V181.8M1520.5 179.1V182.3M1521.5 182.3V183.9M1522.5 183.5V186.3M1523.5 184.3V193.3M1524.5 193.3V207.6M1525.5 194.5V207.8M1526.5 181.5V194.5M1527.5 178.5V181.6M1528.5 181.6V189.8M1529.5 189.8V209.1M1530.5 209.1V234.0M1531.5 193.4V217.7M1532.5 187.9V193.4M1533.5 179.7V187.9M1534.5 179.7V182.0M1535.5 182.0V185.5M1536.5 184.7V186.8M1537.5 184.7V187.4M1538.5 185.8V192.8M1539.5 180.9V192.8M1540.5 172.7V180.9M1541.5 170.8V175.8M1542.5 175.8V200.5M1543.5 191.6V208.5M1544.5 181.3V191.6M1545.5 178.6V184.6M1546.5 184.6V189.6M1547.5 178.3V185.3M1548.5 178.3V182.1M1549.5 175.7V182.1M1550.5 175.0V176.0M1551.5 175.9V184.7M1552.5 183.4V185.2M1553.5 183.4V187.0M1554.5 176.9V183.9M1555.5 176.9V178.7M1556.5 177.0V182.9M1557.5 180.9V182.9M1558.5 182.2V184.8M1559.5 180.2V183.3M1560.5 180.4V184.5M1561.5 183.9V186.7M1562.5 179.9V183.9M1563.5 177.4V179.9M1564.5 179.0V185.2M1565.5 182.0V185.2M1566.5 182.2V185.9M1567.5 180.3V186.8M1568.5 174.1V180.3M1569.5 174.1V176.9M1570.5 176.9V179.3M1571.5 176.1V179.3M1572.5 176.1V179.9M1573.5 175.9V179.9M1574.5 176.3V182.5M1575.5 182.5V192.4M1576.5 190.4V195.1M1577.5 180.4V190.4M1578.5 180.4V190.8M1579.5 186.8V195.0M1580.5 173.3V186.8M1581.5 173.3V177.0M1582.5 177.0V189.7M1583.5 182.2V190.1M1584.5 181.3V182.7M1585.5 177.9V181.6M1586.5 180.7V186.5M1587.5 186.5V205.0M1588.5 186.8V205.0M1589.5 169.7V186.8M1590.5 167.8V170.6M1591.5 167.8V170.6M1592.5 170.6V176.2M1593.5 176.2V187.1M1594.5 180.9V187.1M1595.5 179.2V182.6M1596.5 178.4V182.0M1597.5 182.0V184.9M1598.5 182.5V184.8M1599.5 181.3V183.0M1600.5 181.3V185.5M1601.5 184.3V188.0M1602.5 188.0V193.7M1603.5 190.2V193.9M1604.5 181.4V190.2M1605.5 180.4V181.4M1606.5 179.4V181.2M1607.5 179.4V181.5M1608.5 175.8V180.2M1609.5 178.5V184.2M1610.5 183.6V186.7M1611.5 186.7V203.0M1612.5 203.0V213.1M1613.5 194.9V207.3M1614.5 194.9V197.3M1615.5 195.2V197.4M1616.5 195.8V197.9M1617.5 189.8V197.9M1618.5 183.7V189.8M1619.5 183.4V185.0M1620.5 185.0V195.6M1621.5 190.6V199.3M1622.5 177.4V190.6M1623.5 176.6V182.9M1624.5 182.9V214.7M1625.5 191.9V214.7M1626.5 191.9V194.1M1627.5 186.7V193.0M1628.5 184.1V186.7M1629.5 184.2V190.4M1630.5 180.8V190.4M1631.5 180.0V181.0M1632.5 180.5V183.0M1633.5 175.6V180.5M1634.5 175.6V180.3M1635.5 180.3V194.9M1636.5 180.7V194.9M1637.5 176.8V180.7M1638.5 175.6V177.1M1639.5 173.3V177.0M1640.5 177.0V184.4M1641.5 183.8V187.8M1642.5 181.2V183.8M1643.5 179.8V182.0M1644.5 180.8V184.2M1645.5 176.0V184.0M1646.5 176.0V178.9M1647.5 178.9V185.2M1648.5 184.6V192.1M1649.5 192.1V202.9M1650.5 180.5V199.4M1651.5 180.5V185.7M1652.5 185.7V189.9M1653.5 173.8V185.9M1654.5 173.8V180.6M1655.5 178.7V184.3M1656.5 184.3V188.2M1657.5 186.9V192.2M1658.5 187.8V195.6M1659.5 174.9V187.8M1660.5 171.3V174.9M1661.5 172.5V179.9M1662.5 179.9V183.8M1663.5 179.2V183.8M1664.5 183.0V189.4M1665.5 185.4V191.1M1666.5 178.4V185.4M1667.5 178.8V190.2M1668.5 190.2V197.9M1669.5 181.7V193.2M1670.5 181.7V189.1M1671.5 189.1V196.7M1672.5 196.7V204.3M1673.5 186.9V204.3M1674.5 178.0V186.9M1675.5 177.7V187.0M1676.5 187.0V197.8M1677.5 188.8V196.2M1678.5 184.7V188.8M1679.5 184.7V190.1M1680.5 179.1V188.1M1681.5 179.1V182.9M1682.5 177.8V181.7M1683.5 177.8V181.3M1684.5 179.6V181.7M1685.5 179.9V186.1M1686.5 184.4V188.4M1687.5 177.9V184.4M1688.5 177.9V183.3M1689.5 183.0V185.3M1690.5 185.3V186.8M1691.5 178.3V185.3M1692.5 176.1V179.3M1693.5 172.2V176.1M1694.5 167.6V172.2M1695.5 157.9V167.6M1696.5 147.7V157.9M1697.5 147.0V153.6M1698.5 153.6V175.2M1699.5 174.6V176.8M1700.5 173.7V176.8M1701.5 170.7V173.7M1702.5 170.1V171.1M1703.5 168.7V170.7M1704.5 169.2V173.3M1705.5 170.2V173.3M1706.5 170.6V173.7M1707.5 173.7V184.1M1708.5 184.1V192.6M1709.5 192.6V196.9M1710.5 195.3V199.1M1711.5 191.3V199.1M1712.5 186.4V191.3M1713.5 186.4V188.4M1714.5 184.3V187.5M1715.5 185.8V188.0M1716.5 179.4V186.9M1717.5 174.8V179.4M1718.5 174.8V179.1M1719.5 179.1V189.1M1720.5 187.7V189.1M1721.5 180.1V189.4M1722.5 171.7V180.1M1723.5 168.3V171.7M1724.5 169.3V180.6M1725.5 180.6V185.5M1726.5 173.8V185.5M1727.5 173.8V175.5M1728.5 173.9V179.5M1729.5 179.5V188.4M1730.5 188.4V208.5M1731.5 194.0V209.2M1732.5 185.6V194.0M1733.5 181.1V185.6M1734.5 183.7V193.2M1735.5 183.1V193.5M1736.5 175.8V183.1M1737.5 176.3V192.2M1738.5 190.5V196.6M1739.5 190.5V194.3M1740.5 186.2V191.8M1741.5 191.4V196.4M1742.5 189.3V194.4M1743.5 186.8V194.4M1744.5 186.1V189.5M1745.5 183.6V186.1M1746.5 183.4V184.4M1747.5 184.3V191.1M1748.5 191.1V199.6M1749.5 193.1V198.4M1750.5 189.3V193.1" fill="none" stroke="#000000" stroke-width="1"/>
</g><g clip-path="url(#cp2)">
<path d="M3.5 347.1V350.0M4.5 350.0V359.1M5.5 359.0V363.9M6.5 357.8V363.9M7.5 357.8V360.4M8.5 356.9V358.7M9.5 356.9V365.8M10.5 365.8V401.1M11.5 389.5V414.0M12.5 371.5V389.5M13.5 361.5V371.5M14.5 357.6V361.5M15.5 357.6V361.9M16.5 361.6V367.0M17.5 366.5V368.8M18.5 361.3V366.6M19.5 355.5V361.3M20.5 355.5V363.2M21.5 363.2V374.8M22.5 365.5V374.8M23.5 362.0V365.5M24.5 363.1V367.3M25.5 367.0V369.8M26.5 364.5V367.0M27.5 362.1V364.5M28.5 357.6V362.1M29.5 357.6V361.8M30.5 361.8V369.7M31.5 361.8V369.7M32.5 359.0V361.8M33.5 361.5V386.2M34.5 370.7V391.3M35.5 359.1V370.7M36.5 355.2V359.1M37.5 353.5V355.2M38.5 353.1V355.4M39.5 348.9V353.1M40.5 349.2V356.9M41.5 356.9V364.9M42.5 364.9V366.3M43.5 366.3V368.8M44.5 365.6V369.1M45.5 365.6V369.6M46.5 365.0V369.6M47.5 360.7V365.0M48.5 360.7V369.1M49.5 359.4V369.1M50.5 359.4V362.9M51.5 362.9V379.2M52.5 379.2V393.4M53.5 357.7V382.3M54.5 355.4V357.7M55.5 356.5V362.4M56.5 362.4V380.0M57.5 367.5V380.0M58.5 366.1V368.4M59.5 368.4V374.8M60.5 363.5V374.0M61.5 363.0V365.5M62.5 356.7V363.0M63.5 356.7V365.2M64.5 365.2V376.9M65.5 365.7V377.4M66.5 361.5V365.7M67.5 360.7V361.7M68.5 358.6V361.1M69.5 358.5V359.5M70.5 359.2V363.1M71.5 357.8V364.9M72.5 351.6V357.8M73.5 352.8V367.9M74.5 367.9V382.3M75.5 382.3V386.1M76.5 374.2V385.3M77.5 360.8V374.2M78.5 360.0V363.0M79.5 363.0V388.7M80.5 367.9V389.2M81.5 362.0V367.9M82.5 356.7V362.0M83.5 353.1V356.7M84.5 353.2V361.5M85.5 361.5V368.7M86.5 361.5V368.7M87.5 361.5V364.0M88.5 363.0V366.8M89.5 366.0V376.0M90.5 370.1V377.5M91.5 358.1V370.1M92.5 350.6V358.1M93.5 347.5V350.6M94.5 348.3V355.2M95.5 355.2V365.7M96.5 362.3V365.7M97.5 354.6V362.3M98.5 353.1V355.1M99.5 353.1V363.1M100.5 363.1V375.4M101.5 369.2V375.4M102.5 370.1V372.0M103.5 371.3V374.7M104.5 373.0V380.4M105.5 373.7V381.0M106.5 369.6V373.7M107.5 370.0V377.4M108.5 377.4V390.8M109.5 369.4V386.5M110.5 366.8V371.0M111.5 358.3V366.8M112.5 354.2V358.3M113.5 354.4V358.9M114.5 358.2V363.6M115.5 362.3V365.7M116.5 349.9V362.3M117.5 349.9V354.4M118.5 354.4V359.9M119.5 359.5V360.5M120.5 357.5V360.1M121.5 357.5V362.1M122.5 362.0V368.2M123.5 368.2V378.7M124.5 378.7V386.6M125.5 377.1V385.7M126.5 371.2V377.1M127.5 364.3V371.2M128.5 355.5V364.3M129.5 348.4V355.5M130.5 348.4V359.1M131.5 359.1V379.9M132.5 341.6V371.7M133.5 334.1V341.6M134.5 330.2V334.1M135.5 330.0V332.3M136.5 332.3V342.8M137.5 342.8V354.2M138.5 354.2V363.9M139.5 363.9V370.3M140.5 360.0V368.6M141.5 357.1V360.0M142.5 354.8V357.1M143.5 355.6V359.4M144.5 358.6V363.2M145.5 363.2V368.1M146.5 368.1V371.7M147.5 366.8V369.7M148.5 365.5V367.4M149.5 360.7V365.5M150.5 356.2V361.2M151.5 353.7V356.2M152.5 354.8V355.8M153.5 355.7V362.1M154.5 362.1V384.6M155.5 379.8V386.0M156.5 377.6V379.8M157.5 377.2V380.6M158.5 380.6V395.6M159.5 385.9V403.1M160.5 364.4V385.9M161.5 357.1V364.4M162.5 355.5V357.5M163.5 354.0V357.6M164.5 357.6V368.1M165.5 368.1V382.8M166.5 377.1V386.8M167.5 375.5V378.6M168.5 376.6V390.1M169.5 374.4V390.4M170.5 361.2V374.4M171.5 358.4V361.2M172.5 357.6V358.6M173.5 356.5V361.3M174.5 361.3V379.2M175.5 370.8V379.6M176.5 362.5V370.8M177.5 360.5V362.5M178.5 361.1V376.0M179.5 373.3V381.7M180.5 364.9V373.3M181.5 362.5V364.9M182.5 358.4V362.5M183.5 358.4V360.8M184.5 358.4V361.8M185.5 355.2V358.4M186.5 353.8V357.2M187.5 357.2V371.9M188.5 371.9V378.8M189.5 361.1V377.4M190.5 352.9V361.1M191.5 352.9V354.6M192.5 353.8V358.1M193.5 358.1V368.3M194.5 368.3V382.4M195.5 368.6V382.4M196.5 368.6V371.4M197.5 370.7V373.8M198.5 362.0V370.7M199.5 356.5V362.0M200.5 357.0V366.2M201.5 366.2V370.7M202.5 361.5V368.2M203.5 360.7V366.0M204.5 366.0V382.4M205.5 374.6V384.7M206.5 361.2V374.6M207.5 361.0V362.0M208.5 359.6V361.1M209.5 360.0V365.7M210.5 365.7V376.0M211.5 376.0V383.8M212.5 368.3V381.1M213.5 362.6V368.3M214.5 362.6V365.0M215.5 365.0V373.1M216.5 373.1V377.7M217.5 377.7V380.6M218.5 365.6V379.0M219.5 358.1V365.6M220.5 358.2V363.9M221.5 363.9V365.4M222.5 359.2V364.4M223.5 355.2V359.2M224.5 353.0V355.2M225.5 354.3V356.7M226.5 355.1V356.8M227.5 356.8V366.3M228.5 366.3V370.8M229.5 361.0V368.0M230.5 361.0V369.6M231.5 369.6V374.5M232.5 368.0V371.4M233.5 369.6V373.4M234.5 360.7V371.3M235.5 360.3V363.8M236.5 363.8V377.7M237.5 377.7V388.5M238.5 370.3V388.5M239.5 361.7V370.3M240.5 356.8V361.7M241.5 356.9V365.6M242.5 365.1V368.9M243.5 357.1V365.1M244.5 357.1V363.6M245.5 363.6V369.8M246.5 368.9V373.7M247.5 373.7V380.5M248.5 372.4V379.8M249.5 371.5V373.4M250.5 368.5V373.4M251.5 362.5V368.5M252.5 357.5V362.5M253.5 358.4V371.1M254.5 371.1V387.9M255.5 365.9V387.0M256.5 359.1V365.9M257.5 359.2V370.8M258.5 370.8V389.3M259.5 364.1V386.3M260.5 358.2V364.1M261.5 359.5V375.9M262.5 375.9V383.6M263.5 371.3V379.9M264.5 364.3V371.3M265.5 364.3V369.0M266.5 351.7V366.0M267.5 351.7V356.4M268.5 356.4V365.6M269.5 363.9V365.6M270.5 364.8V373.0M271.5 367.8V373.0M272.5 364.9V368.6M273.5 362.2V366.8M274.5 366.8V382.5M275.5 371.9V382.5M276.5 366.6V371.9M277.5 364.5V367.9M278.5 367.0V369.3M279.5 367.0V370.3M280.5 370.3V377.5M281.5 369.1V377.6M282.5 358.2V369.1M283.5 358.2V362.2M284.5 362.2V374.8M285.5 374.8V386.0M286.5 369.3V381.7M287.5 364.7V369.6M288.5 369.6V383.6M289.5 374.3V383.6M290.5 374.3V385.2M291.5 384.1V388.6M292.5 376.2V387.5M293.5 373.3V376.3M294.5 372.1V374.5M295.5 370.8V378.2M296.5 371.1V381.4M297.5 363.5V371.1M298.5 363.5V364.6M299.5 361.7V364.9M300.5 361.7V369.0M301.5 369.0V400.3M302.5 378.1V400.3M303.5 367.6V378.1M304.5 367.6V375.9M305.5 375.9V387.1M306.5 365.6V383.5M307.5 363.9V366.0M308.5 366.0V382.0M309.5 379.4V386.7M310.5 362.3V379.4M311.5 360.8V362.3M312.5 360.0V363.4M313.5 363.4V367.9M314.5 367.9V379.9M315.5 376.7V380.6M316.5 367.5V376.7M317.5 356.4V367.5M318.5 350.6V356.4M319.5 346.8V350.8M320.5 334.9V346.8M321.5 304.2V334.9M322.5 284.1V304.2M323.5 283.0V291.7M324.5 291.7V312.9M325.5 312.9V336.8M326.5 336.8V362.2M327.5 361.0V364.4M328.5 357.8V361.0M329.5 357.8V366.5M330.5 365.1V376.5M331.5 364.3V377.0M332.5 359.9V364.3M333.5 361.4V370.9M334.5 370.5V371.5M335.5 371.0V375.8M336.5 371.5V375.8M337.5 371.5V375.6M338.5 366.6V376.4M339.5 359.6V366.6M340.5 359.6V365.1M341.5 363.2V368.4M342.5 363.8V368.4M343.5 359.7V363.8M344.5 360.5V370.9M345.5 369.0V370.9M346.5 368.8V372.6M347.5 372.6V380.3M348.5 371.2V380.3M349.5 365.8V372.2M350.5 359.9V365.8M351.5 360.3V364.5M352.5 364.5V370.4M353.5 367.3V370.4M354.5 365.2V369.0M355.5 358.5V365.2M356.5 356.7V358.6M357.5 356.1V357.1M358.5 356.8V360.7M359.5 359.5V360.7M360.5 360.4V368.3M361.5 361.8V368.3M362.5 361.8V366.3M363.5 360.3V363.4M364.5 361.9V371.2M365.5 358.8V371.2M366.5 355.8V358.8M367.5 356.7V366.7M368.5 366.7V371.3M369.5 364.1V366.8M370.5 364.9V368.9M371.5 362.5V368.9M372.5 361.0V363.6M373.5 358.6V361.0M374.5 358.6V359.6M375.5 359.6V362.3M376.5 362.3V367.6M377.5 367.0V368.5M378.5 357.3V367.0M379.5 355.8V357.3M380.5 355.9V360.7M381.5 360.4V361.5M382.5 356.0V360.4M383.5 356.0V359.5M384.5 359.5V367.7M385.5 367.7V377.8M386.5 376.3V379.1M387.5 366.4V376.3M388.5 366.4V379.2M389.5 373.0V381.1M390.5 369.0V373.0M391.5 363.9V369.3M392.5 360.3V366.2M393.5 359.4V360.5M394.5 359.1V367.3M395.5 367.3V385.2M396.5 373.4V385.2M397.5 373.0V374.0M398.5 372.3V373.7M399.5 372.8V380.2M400.5 369.3V380.2M401.5 366.5V370.3M402.5 366.3V367.3M403.5 363.0V366.5M404.5 364.8V372.0M405.5 371.4V376.8M406.5 373.4V379.5M407.5 360.2V373.4M408.5 359.0V360.2M409.5 359.8V370.4M410.5 370.4V384.8M411.5 376.9V386.1M412.5 372.3V376.9M413.5 372.3V379.8M414.5 365.2V379.8M415.5 364.6V366.5M416.5 366.5V379.8M417.5 373.6V380.8M418.5 373.4V375.2M419.5 370.7V375.2M420.5 364.2V370.7M421.5 364.2V368.7M422.5 366.9V368.7M423.5 368.3V371.1M424.5 371.1V379.8M425.5 379.2V380.2M426.5 379.4V381.0M427.5 373.8V380.4M428.5 366.6V373.8M429.5 366.6V375.1M430.5 375.1V392.7M431.5 391.4V394.3M432.5 389.4V392.5M433.5 368.5V389.4M434.5 357.9V368.5M435.5 357.9V361.9M436.5 361.9V374.9M437.5 356.5V381.0M438.5 334.4V356.5M439.5 325.5V334.4M440.5 325.0V329.8M441.5 329.8V345.7M442.5 345.7V360.0M443.5 358.2V360.0M444.5 357.5V360.5M445.5 360.5V364.2M446.5 364.2V367.0M447.5 367.0V371.4M448.5 371.4V389.0M449.5 377.1V394.8M450.5 366.4V377.1M451.5 364.1V366.4M452.5 366.2V370.7M453.5 370.7V374.5M454.5 368.4V374.2M455.5 368.7V377.5M456.5 365.7V377.5M457.5 365.0V367.4M458.5 365.5V380.1M459.5 380.1V393.0M460.5 380.7V388.1M461.5 380.7V385.1M462.5 385.1V390.9M463.5 366.5V386.7M464.5 366.5V369.8M465.5 369.8V378.5M466.5 378.5V390.7M467.5 369.3V387.4M468.5 360.9V369.3M469.5 360.9V364.3M470.5 357.9V364.3M471.5 356.6V357.9M472.5 357.5V365.0M473.5 365.0V369.5M474.5 361.2V367.3M475.5 361.0V362.0M476.5 356.4V361.3M477.5 354.5V356.5M478.5 356.5V369.2M479.5 369.2V392.7M480.5 386.5V395.8M481.5 367.7V386.5M482.5 357.4V367.7M483.5 357.4V362.5M484.5 362.5V371.9M485.5 371.9V383.2M486.5 369.5V383.2M487.5 353.8V369.5M488.5 348.2V353.8M489.5 349.5V365.6M490.5 365.6V392.9M491.5 382.0V392.9M492.5 374.6V382.0M493.5 373.0V378.0M494.5 378.0V387.7M495.5 381.0V389.9M496.5 368.1V381.0M497.5 368.1V373.2M498.5 373.2V378.6M499.5 376.4V381.9M500.5 381.9V387.6M501.5 379.6V384.9M502.5 374.0V379.6M503.5 374.0V380.3M504.5 371.7V380.7M505.5 366.3V371.7M506.5 364.4V366.3M507.5 355.9V364.4M508.5 351.1V355.9M509.5 351.1V354.0M510.5 354.0V364.1M511.5 364.1V367.9M512.5 362.3V366.6M513.5 362.3V368.0M514.5 368.0V381.4M515.5 380.0V384.9M516.5 365.7V380.0M517.5 362.3V365.7M518.5 362.3V365.5M519.5 364.7V372.3M520.5 372.3V403.2M521.5 379.4V403.2M522.5 378.0V379.4M523.5 367.5V378.0M524.5 362.2V367.5M525.5 358.6V362.3M526.5 361.1V367.8M527.5 367.8V370.2M528.5 367.0V370.2M529.5 369.4V373.1M530.5 363.4V374.3M531.5 355.2V363.4M532.5 353.1V358.4M533.5 358.4V373.7M534.5 372.2V375.6M535.5 375.6V377.9M536.5 375.1V378.6M537.5 369.3V375.1M538.5 369.3V376.4M539.5 376.4V396.2M540.5 389.8V396.2M541.5 388.2V389.8M542.5 376.3V388.7M543.5 369.7V376.3M544.5 369.7V372.5M545.5 364.9V372.5M546.5 360.0V364.9M547.5 359.3V364.9M548.5 364.9V373.2M549.5 364.5V373.2M550.5 359.2V364.5M551.5 358.9V359.9M552.5 359.8V365.3M553.5 360.3V365.3M554.5 360.0V365.8M555.5 365.8V382.5M556.5 375.4V383.1M557.5 371.2V375.4M558.5 366.3V371.9M559.5 363.0V366.3M560.5 363.3V369.7M561.5 369.7V381.2M562.5 381.0V386.2M563.5 376.6V388.4M564.5 363.6V376.6M565.5 363.5V367.6M566.5 367.6V380.8M567.5 379.8V382.7M568.5 374.6V379.8M569.5 369.8V374.6M570.5 369.8V371.3M571.5 370.8V372.6M572.5 368.1V371.3M573.5 364.7V373.0M574.5 373.0V406.3M575.5 378.7V406.3M576.5 372.2V379.5M577.5 357.8V372.2M578.5 357.8V360.2M579.5 356.5V364.8M580.5 364.8V378.7M581.5 371.4V378.8M582.5 369.2V371.4M583.5 360.9V369.2M584.5 355.2V360.9M585.5 355.2V362.6M586.5 362.6V383.3M587.5 371.6V383.6M588.5 361.9V371.6M589.5 359.6V364.2M590.5 355.7V359.6M591.5 355.9V363.0M592.5 363.0V380.3M593.5 369.3V380.3M594.5 367.8V369.3M595.5 368.4V378.1M596.5 378.1V395.0M597.5 367.8V393.5M598.5 360.0V367.8M599.5 361.2V389.1M600.5 381.2V412.7M601.5 367.9V381.2M602.5 367.9V377.5M603.5 377.5V385.9M604.5 372.5V382.9M605.5 372.5V378.2M606.5 375.6V378.2M607.5 371.6V376.7M608.5 368.4V371.6M609.5 368.8V373.7M610.5 373.7V376.4M611.5 373.6V377.0M612.5 366.9V373.6M613.5 366.9V368.8M614.5 366.3V369.3M615.5 369.3V377.5M616.5 375.6V378.6M617.5 369.1V375.6M618.5 363.7V369.1M619.5 363.7V369.0M620.5 367.3V369.0M621.5 366.7V371.8M622.5 371.8V395.6M623.5 386.7V396.5M624.5 377.1V386.7M625.5 377.4V391.9M626.5 391.9V414.0M627.5 372.1V414.0M628.5 367.9V372.1M629.5 366.2V371.8M630.5 371.8V379.7M631.5 373.9V379.6M632.5 374.3V381.4M633.5 379.9V383.3M634.5 379.9V383.1M635.5 373.5V383.1M636.5 365.8V373.5M637.5 365.8V372.0M638.5 372.0V381.2M639.5 381.2V385.6M640.5 379.7V385.6M641.5 379.7V384.5M642.5 363.6V383.8M643.5 363.6V366.2M644.5 364.7V369.4M645.5 367.5V369.4M646.5 367.5V375.4M647.5 374.6V375.7M648.5 367.3V375.5M649.5 367.3V370.0M650.5 369.1V370.1M651.5 369.9V380.3M652.5 375.1V380.3M653.5 369.8V375.1M654.5 369.8V373.2M655.5 372.9V375.0M656.5 367.3V374.2M657.5 367.1V370.8M658.5 363.1V367.1M659.5 365.1V374.3M660.5 371.7V375.4M661.5 369.9V372.2M662.5 372.2V388.2M663.5 371.6V388.2M664.5 369.4V371.6M665.5 370.5V393.5M666.5 382.3V403.2M667.5 371.1V382.3M668.5 367.4V373.6M669.5 361.7V367.4M670.5 362.8V372.7M671.5 372.7V379.5M672.5 368.6V379.5M673.5 367.3V372.6M674.5 364.8V367.3M675.5 364.4V372.2M676.5 372.2V378.2M677.5 374.0V378.2M678.5 373.6V375.3M679.5 372.2V373.8M680.5 373.8V392.3M681.5 387.7V395.1M682.5 387.7V396.6M683.5 368.4V396.6M684.5 359.7V368.4M685.5 358.6V360.9M686.5 360.2V367.7M687.5 367.7V387.7M688.5 387.7V399.5M689.5 395.6V400.3M690.5 395.6V400.5M691.5 392.2V400.5M692.5 392.2V397.0M693.5 390.6V397.8M694.5 380.0V390.6M695.5 380.0V382.4M696.5 379.2V380.6M697.5 376.3V379.9M698.5 376.3V378.3M699.5 370.4V377.0M700.5 366.1V372.0M701.5 357.2V366.1M702.5 355.6V358.8M703.5 358.8V371.2M704.5 370.6V372.5M705.5 372.5V373.9M706.5 372.6V375.0M707.5 371.8V373.0M708.5 371.8V374.0M709.5 363.9V371.8M710.5 363.9V369.9M711.5 369.9V372.0M712.5 367.2V371.1M713.5 365.6V368.7M714.5 368.7V377.3M715.5 369.2V377.1M716.5 369.2V373.5M717.5 368.0V373.5M718.5 358.8V368.0M719.5 358.8V369.3M720.5 369.3V386.6M721.5 375.1V386.6M722.5 374.5V377.8M723.5 372.2V378.7M724.5 363.5V372.2M725.5 360.2V363.5M726.5 359.0V360.2M727.5 359.0V362.3M728.5 362.3V373.8M729.5 373.8V379.6M730.5 363.9V377.3M731.5 358.2V363.9M732.5 358.2V367.5M733.5 367.3V381.7M734.5 381.7V393.7M735.5 383.2V393.6M736.5 368.0V383.2M737.5 366.8V368.3M738.5 368.3V381.6M739.5 381.6V390.9M740.5 371.1V386.8M741.5 364.0V371.1M742.5 364.0V376.5M743.5 376.5V388.3M744.5 377.7V388.3M745.5 371.2V377.7M746.5 362.5V371.2M747.5 362.5V365.3M748.5 365.3V377.5M749.5 377.5V384.0M750.5 380.3V384.0M751.5 369.7V380.3M752.5 363.9V369.7M753.5 360.9V363.9M754.5 360.7V362.5M755.5 362.5V374.9M756.5 374.9V388.5M757.5 388.5V389.6M758.5 382.3V389.6M759.5 378.7V382.3M760.5 377.2V379.1M761.5 373.6V377.5M762.5 373.6V379.5M763.5 379.3V384.2M764.5 384.2V386.0M765.5 382.1V385.1M766.5 381.9V383.3M767.5 368.5V381.9M768.5 361.9V368.5M769.5 362.5V378.4M770.5 378.4V398.8M771.5 377.3V389.7M772.5 375.8V379.6M773.5 379.6V381.9M774.5 381.9V385.1M775.5 374.2V382.3M776.5 367.9V374.2M777.5 369.9V384.2M778.5 384.2V388.1M779.5 388.1V392.5M780.5 371.3V388.2M781.5 371.3V374.0M782.5 372.2V376.8M783.5 374.0V376.8M784.5 374.0V377.0M785.5 377.0V386.4M786.5 386.4V403.2M787.5 398.7V411.5M788.5 387.6V398.7M789.5 386.1V395.3M790.5 387.1V397.8M791.5 380.4V387.1M792.5 379.9V381.5M793.5 381.0V383.5M794.5 381.4V386.6M795.5 375.3V381.4M796.5 372.7V375.3M797.5 372.3V374.8M798.5 374.8V379.3M799.5 377.3V381.1M800.5 365.4V377.3M801.5 365.4V366.9M802.5 365.6V366.9M803.5 365.6V368.8M804.5 368.2V370.3M805.5 368.4V371.5M806.5 365.3V368.4M807.5 366.4V373.6M808.5 373.6V377.5M809.5 377.5V387.5M810.5 387.5V401.6M811.5 377.0V395.8M812.5 374.6V377.0M813.5 373.2V374.6M814.5 372.7V373.7M815.5 371.5V372.7M816.5 371.5V374.1M817.5 374.1V377.0M818.5 374.5V377.0M819.5 371.8V374.5M820.5 371.8V375.0M821.5 371.3V373.6M822.5 372.8V377.5M823.5 377.5V381.6M824.5 372.3V378.9M825.5 372.3V374.0M826.5 374.0V378.7M827.5 376.3V378.6M828.5 377.1V385.3M829.5 385.3V393.3M830.5 376.5V392.6M831.5 368.3V376.5M832.5 368.3V372.7M833.5 372.7V381.0M834.5 380.3V382.4M835.5 382.4V394.7M836.5 385.9V396.2M837.5 378.3V385.9M838.5 377.1V378.3M839.5 377.0V378.7M840.5 374.6V378.7M841.5 374.6V377.0M842.5 377.0V385.7M843.5 379.7V387.4M844.5 367.9V379.7M845.5 365.4V367.9M846.5 365.5V371.7M847.5 371.7V377.1M848.5 376.6V377.6M849.5 377.6V380.5M850.5 380.0V384.0M851.5 384.0V388.2M852.5 382.6V387.7M853.5 381.8V382.9M854.5 373.1V381.8M855.5 371.0V373.7M856.5 371.0V372.4M857.5 372.4V377.2M858.5 377.2V386.4M859.5 385.9V388.3M860.5 371.7V385.9M861.5 363.9V371.7M862.5 363.9V371.0M863.5 371.0V383.7M864.5 383.7V392.9M865.5 373.1V390.0M866.5 366.9V373.1M867.5 367.0V374.1M868.5 372.8V375.8M869.5 375.8V377.2M870.5 376.0V383.5M871.5 373.9V383.5M872.5 373.9V379.6M873.5 376.6V380.7M874.5 370.1V376.6M875.5 366.8V370.5M876.5 370.5V386.6M877.5 386.6V408.1M878.5 387.4V408.1M879.5 380.9V387.7M880.5 378.2V381.4M881.5 380.1V384.6M882.5 384.6V398.8M883.5 391.2V399.7M884.5 371.4V391.2M885.5 371.4V372.9M886.5 372.4V377.6M887.5 367.6V372.4M888.5 368.4V380.8M889.5 370.1V380.8M890.5 367.1V370.7M891.5 366.3V367.9M892.5 367.4V377.2M893.5 375.0V383.0M894.5 363.1V375.0M895.5 361.2V363.1M896.5 361.4V368.1M897.5 361.3V368.1M898.5 360.1V361.6M899.5 358.7V362.4M900.5 362.4V379.6M901.5 374.1V379.6M902.5 370.6V374.1M903.5 371.3V388.8M904.5 388.8V406.4M905.5 376.3V395.2M906.5 375.0V382.5M907.5 382.5V413.8M908.5 385.1V411.5M909.5 372.7V385.1M910.5 369.1V372.7M911.5 365.3V369.1M912.5 366.2V370.2M913.5 369.4V370.8M914.5 367.0V370.3M915.5 370.3V382.1M916.5 380.0V382.7M917.5 377.3V380.0M918.5 370.9V377.3M919.5 367.8V370.9M920.5 365.2V368.7M921.5 368.7V372.4M922.5 370.2V374.4M923.5 363.6V370.2M924.5 364.2V373.1M925.5 373.1V378.5M926.5 371.6V375.2M927.5 371.6V375.1M928.5 372.1V375.1M929.5 366.3V372.1M930.5 365.8V368.4M931.5 368.4V371.8M932.5 361.6V371.2M933.5 354.2V361.6M934.5 354.0V355.5M935.5 355.5V363.4M936.5 360.9V363.4M937.5 362.2V368.2M938.5 368.2V381.0M939.5 374.0V382.1M940.5 371.5V374.0M941.5 371.6V374.4M942.5 373.6V379.7M943.5 379.7V384.5M944.5 369.2V380.8M945.5 369.2V373.0M946.5 372.4V374.9M947.5 374.9V384.2M948.5 366.2V384.2M949.5 357.2V366.2M950.5 357.2V361.7M951.5 358.6V363.3M952.5 363.3V371.4M953.5 368.6V371.4M954.5 369.1V375.9M955.5 372.0V375.9M956.5 372.0V376.0M957.5 374.1V379.1M958.5 375.3V379.2M959.5 375.3V381.4M960.5 374.3V381.4M961.5 374.3V376.7M962.5 374.3V377.7M963.5 375.7V379.2M964.5 365.4V375.7M965.5 361.1V365.4M966.5 359.8V362.0M967.5 362.0V370.2M968.5 365.5V370.2M969.5 365.1V366.1M970.5 365.6V368.5M971.5 368.5V372.4M972.5 370.1V372.5M973.5 367.2V372.1M974.5 364.5V367.2M975.5 366.7V373.3M976.5 373.3V377.4M977.5 375.3V377.1M978.5 375.7V381.3M979.5 381.3V387.8M980.5 387.8V391.8M981.5 391.1V392.1M982.5 382.2V392.4M983.5 366.8V382.2M984.5 366.8V376.0M985.5 376.0V393.5M986.5 377.1V393.5M987.5 368.5V377.1M988.5 368.0V369.3M989.5 369.3V379.3M990.5 379.3V390.8M991.5 388.8V390.8M992.5 385.3V390.9M993.5 381.3V385.3M994.5 379.6V381.3M995.5 380.5V387.3M996.5 383.0V388.5M997.5 381.7V383.4M998.5 383.4V397.8M999.5 397.8V405.5M1000.5 391.1V403.9M1001.5 379.3V391.1M1002.5 371.8V379.3M1003.5 368.9V371.8M1004.5 369.3V375.5M1005.5 375.5V387.7M1006.5 381.1V387.7M1007.5 381.1V383.0M1008.5 380.1V382.5M1009.5 378.8V384.1M1010.5 369.0V378.8M1011.5 368.0V369.0M1012.5 367.3V368.3M1013.5 367.4V373.9M1014.5 372.4V380.2M1015.5 380.2V393.3M1016.5 389.2V393.3M1017.5 379.8V389.2M1018.5 367.3V379.8M1019.5 360.5V367.3M1020.5 360.7V367.6M1021.5 367.6V374.2M1022.5 372.9V376.0M1023.5 371.4V372.9M1024.5 370.6V374.1M1025.5 374.1V381.0M1026.5 371.9V381.0M1027.5 367.5V371.9M1028.5 367.5V369.3M1029.5 369.3V373.6M1030.5 373.6V378.3M1031.5 371.5V378.3M1032.5 370.3V371.7M1033.5 371.7V385.2M1034.5 385.2V389.6M1035.5 386.4V390.6M1036.5 381.5V386.4M1037.5 381.6V390.0M1038.5 381.1V390.0M1039.5 371.3V381.1M1040.5 371.3V375.1M1041.5 375.1V381.1M1042.5 375.1V381.1M1043.5 371.3V375.1M1044.5 374.5V385.3M1045.5 383.2V387.0M1046.5 386.9V394.1M1047.5 389.9V395.9M1048.5 380.1V389.9M1049.5 374.0V380.1M1050.5 369.7V374.0M1051.5 369.7V375.3M1052.5 373.1V375.3M1053.5 370.3V375.0M1054.5 368.8V370.3M1055.5 365.7V368.8M1056.5 365.7V374.4M1057.5 373.2V385.8M1058.5 376.4V388.0M1059.5 372.5V376.4M1060.5 369.3V373.0M1061.5 371.7V376.7M1062.5 376.7V386.5M1063.5 380.7V388.5M1064.5 371.7V380.7M1065.5 371.7V375.2M1066.5 370.8V373.5M1067.5 371.3V376.6M1068.5 376.6V384.2M1069.5 382.1V385.1M1070.5 380.7V382.7M1071.5 381.0V384.1M1072.5 383.3V384.3M1073.5 382.4V384.8M1074.5 378.5V382.4M1075.5 374.2V378.5M1076.5 376.4V383.1M1077.5 378.7V384.6M1078.5 371.2V378.7M1079.5 367.5V371.2M1080.5 362.7V367.5M1081.5 350.0V362.7M1082.5 325.9V350.0M1083.5 310.6V325.9M1084.5 310.0V315.2M1085.5 315.2V333.9M1086.5 333.9V363.5M1087.5 363.5V379.6M1088.5 362.6V377.1M1089.5 358.0V362.6M1090.5 358.6V365.7M1091.5 365.7V371.6M1092.5 371.6V381.1M1093.5 381.1V387.1M1094.5 381.5V387.5M1095.5 376.6V381.5M1096.5 368.4V376.6M1097.5 368.4V370.0M1098.5 370.0V376.1M1099.5 371.9V376.1M1100.5 371.9V375.2M1101.5 374.6V379.5M1102.5 379.5V384.5M1103.5 384.5V387.4M1104.5 384.3V387.8M1105.5 385.3V387.8M1106.5 385.3V389.4M1107.5 371.1V387.4M1108.5 368.3V371.1M1109.5 369.3V371.4M1110.5 371.4V374.2M1111.5 368.4V373.1M1112.5 368.0V369.0M1113.5 367.7V368.7M1114.5 368.4V372.3M1115.5 372.3V375.6M1116.5 362.9V373.6M1117.5 361.2V365.7M1118.5 365.7V378.5M1119.5 374.0V378.5M1120.5 374.1V380.8M1121.5 380.8V397.6M1122.5 383.7V397.6M1123.5 372.1V383.7M1124.5 372.1V375.7M1125.5 375.7V384.7M1126.5 384.7V389.7M1127.5 379.9V388.3M1128.5 373.7V379.9M1129.5 373.7V374.7M1130.5 374.6V376.6M1131.5 376.6V387.4M1132.5 386.8V389.3M1133.5 387.3V389.7M1134.5 374.9V387.3M1135.5 368.6V374.9M1136.5 361.8V368.6M1137.5 362.8V368.5M1138.5 368.5V371.2M1139.5 371.1V372.1M1140.5 368.6V372.1M1141.5 365.8V368.6M1142.5 367.8V382.2M1143.5 371.7V382.2M1144.5 365.9V371.7M1145.5 365.6V367.3M1146.5 367.3V379.3M1147.5 379.3V391.6M1148.5 391.4V400.1M1149.5 375.8V398.7M1150.5 366.9V375.8M1151.5 366.9V372.1M1152.5 372.1V385.0M1153.5 377.7V385.0M1154.5 375.6V377.7M1155.5 374.6V375.8M1156.5 374.6V376.2M1157.5 375.7V382.4M1158.5 382.4V392.7M1159.5 373.7V392.7M1160.5 371.2V373.8M1161.5 371.0V373.9M1162.5 373.9V377.1M1163.5 367.2V376.7M1164.5 363.2V367.2M1165.5 363.2V365.1M1166.5 362.9V371.0M1167.5 371.0V396.1M1168.5 381.3V398.7M1169.5 369.4V381.3M1170.5 368.2V371.8M1171.5 371.8V376.5M1172.5 376.5V380.0M1173.5 380.0V384.4M1174.5 384.4V386.5M1175.5 385.1V408.6M1176.5 396.8V414.0M1177.5 394.0V396.8M1178.5 391.3V397.1M1179.5 389.2V391.8M1180.5 391.8V397.5M1181.5 386.2V399.1M1182.5 366.1V386.2M1183.5 361.1V366.1M1184.5 361.4V369.1M1185.5 366.2V369.1M1186.5 366.2V367.3M1187.5 366.9V372.3M1188.5 372.3V386.0M1189.5 386.0V388.5M1190.5 385.5V387.8M1191.5 378.1V385.5M1192.5 374.7V378.1M1193.5 375.2V389.0M1194.5 389.0V414.0M1195.5 385.7V410.0M1196.5 381.3V385.7M1197.5 376.9V381.3M1198.5 373.6V376.9M1199.5 373.6V376.0M1200.5 371.9V374.3M1201.5 370.8V371.9M1202.5 371.6V379.0M1203.5 372.0V379.0M1204.5 372.0V373.4M1205.5 373.4V374.5M1206.5 373.8V376.1M1207.5 376.1V377.9M1208.5 369.9V377.7M1209.5 369.9V374.4M1210.5 367.3V372.0M1211.5 369.5V381.6M1212.5 379.4V393.5M1213.5 393.5V398.8M1214.5 391.2V394.0M1215.5 380.0V391.2M1216.5 380.0V382.6M1217.5 379.9V382.4M1218.5 381.1V382.6M1219.5 378.4V381.8M1220.5 376.3V378.4M1221.5 377.5V388.9M1222.5 388.9V411.0M1223.5 381.8V406.6M1224.5 377.3V381.8M1225.5 380.7V400.7M1226.5 390.2V400.7M1227.5 380.4V390.2M1228.5 370.3V380.6M1229.5 365.4V370.3M1230.5 365.4V370.4M1231.5 369.9V381.4M1232.5 381.4V397.4M1233.5 387.8V397.4M1234.5 383.3V387.8M1235.5 371.1V383.3M1236.5 366.0V371.1M1237.5 361.0V366.0M1238.5 361.0V365.6M1239.5 365.6V374.1M1240.5 368.1V374.1M1241.5 367.2V368.4M1242.5 368.4V383.1M1243.5 381.7V387.6M1244.5 381.1V383.0M1245.5 380.6V389.4M1246.5 389.4V401.7M1247.5 387.5V399.8M1248.5 387.5V393.9M1249.5 393.9V401.6M1250.5 385.1V401.6M1251.5 375.7V385.1M1252.5 375.7V386.6M1253.5 386.6V397.6M1254.5 372.6V390.2M1255.5 369.7V372.6M1256.5 370.9V376.2M1257.5 376.2V377.3M1258.5 375.6V377.0M1259.5 375.6V377.6M1260.5 377.6V381.5M1261.5 374.0V381.3M1262.5 374.0V382.0M1263.5 382.0V387.8M1264.5 374.8V383.6M1265.5 373.0V374.8M1266.5 373.2V376.6M1267.5 376.6V380.9M1268.5 377.5V380.9M1269.5 377.5V383.1M1270.5 383.1V392.4M1271.5 377.3V389.5M1272.5 377.3V379.9M1273.5 371.9V379.7M1274.5 370.3V375.1M1275.5 375.1V381.4M1276.5 372.6V379.9M1277.5 367.7V372.6M1278.5 370.1V379.8M1279.5 372.5V379.8M1280.5 371.6V372.7M1281.5 370.7V371.7M1282.5 370.9V372.5M1283.5 372.5V381.5M1284.5 381.5V385.5M1285.5 372.8V382.6M1286.5 364.6V372.8M1287.5 364.6V372.7M1288.5 368.9V372.7M1289.5 367.7V368.9M1290.5 367.8V375.1M1291.5 375.1V394.3M1292.5 394.3V403.3M1293.5 382.3V398.0M1294.5 374.7V382.3M1295.5 370.2V374.7M1296.5 367.3V370.2M1297.5 367.4V373.2M1298.5 371.5V373.2M1299.5 373.2V377.1M1300.5 377.1V392.6M1301.5 388.7V401.5M1302.5 370.6V388.7M1303.5 367.3V370.6M1304.5 367.4V373.6M1305.5 373.6V381.1M1306.5 376.4V381.1M1307.5 376.4V379.4M1308.5 378.2V379.2M1309.5 376.5V378.8M1310.5 374.2V377.3M1311.5 374.2V378.3M1312.5 371.8V381.2M1313.5 381.2V403.8M1314.5 393.8V408.4M1315.5 375.5V393.8M1316.5 373.8V375.9M1317.5 373.3V374.3M1318.5 367.3V373.4M1319.5 367.2V368.2M1320.5 367.6V370.7M1321.5 370.7V382.3M1322.5 382.3V392.3M1323.5 381.7V389.6M1324.5 381.7V383.8M1325.5 380.9V383.8M1326.5 376.5V380.9M1327.5 376.5V380.6M1328.5 380.6V383.5M1329.5 382.7V389.6M1330.5 385.0V390.7M1331.5 374.2V385.0M1332.5 374.2V379.4M1333.5 379.4V387.4M1334.5 364.7V384.7M1335.5 364.5V366.2M1336.5 364.2V374.6M1337.5 374.6V391.6M1338.5 391.6V398.8M1339.5 390.0V398.8M1340.5 387.4V391.2M1341.5 391.2V400.1M1342.5 383.4V393.9M1343.5 383.4V395.8M1344.5 389.8V395.9M1345.5 383.3V389.8M1346.5 383.3V387.0M1347.5 387.0V392.8M1348.5 373.6V392.6M1349.5 371.6V373.6M1350.5 371.4V372.5M1351.5 368.6V372.1M1352.5 367.2V373.4M1353.5 373.4V399.1M1354.5 397.5V414.0M1355.5 373.5V397.5M1356.5 373.5V375.4M1357.5 374.3V381.5M1358.5 379.8V385.1M1359.5 372.5V379.8M1360.5 372.5V376.9M1361.5 376.9V381.2M1362.5 377.5V382.8M1363.5 382.8V388.8M1364.5 372.9V385.2M1365.5 372.9V374.7M1366.5 374.7V389.6M1367.5 389.6V406.5M1368.5 404.8V407.2M1369.5 392.2V404.8M1370.5 377.5V392.2M1371.5 374.7V377.5M1372.5 374.2V375.9M1373.5 375.9V380.1M1374.5 380.1V387.2M1375.5 387.2V389.3M1376.5 387.8V389.3M1377.5 389.2V396.9M1378.5 396.9V412.7M1379.5 383.2V406.0M1380.5 374.2V383.2M1381.5 373.0V375.1M1382.5 375.1V393.9M1383.5 375.9V393.9M1384.5 372.7V375.9M1385.5 370.5V372.8M1386.5 367.0V371.0M1387.5 367.0V369.7M1388.5 367.7V369.7M1389.5 369.4V373.0M1390.5 371.9V377.3M1391.5 377.3V380.2M1392.5 380.2V382.8M1393.5 366.8V380.4M1394.5 363.3V368.6M1395.5 360.4V363.3M1396.5 360.9V370.8M1397.5 370.8V391.4M1398.5 382.9V391.4M1399.5 382.9V392.5M1400.5 392.5V394.7M1401.5 388.8V394.4M1402.5 388.8V392.2M1403.5 389.7V392.2M1404.5 389.9V396.6M1405.5 381.8V396.6M1406.5 372.4V381.8M1407.5 372.4V390.0M1408.5 390.0V401.7M1409.5 377.1V391.0M1410.5 373.9V377.1M1411.5 369.7V373.9M1412.5 369.7V372.4M1413.5 372.0V373.0M1414.5 368.9V372.7M1415.5 370.8V383.0M1416.5 377.0V383.0M1417.5 377.0V380.8M1418.5 380.8V386.9M1419.5 382.3V386.6M1420.5 383.2V384.7M1421.5 381.9V383.9M1422.5 382.9V390.2M1423.5 386.0V390.2M1424.5 380.5V386.0M1425.5 380.5V393.0M1426.5 380.7V397.0M1427.5 375.0V380.7M1428.5 374.2V380.6M1429.5 380.6V389.9M1430.5 381.7V389.2M1431.5 381.7V386.3M1432.5 386.3V394.2M1433.5 380.7V392.7M1434.5 372.5V380.7M1435.5 372.5V376.0M1436.5 376.0V393.7M1437.5 384.3V400.3M1438.5 375.1V384.3M1439.5 370.9V375.1M1440.5 370.9V371.9M1441.5 371.2V381.5M1442.5 381.5V392.0M1443.5 386.5V392.0M1444.5 380.3V386.5M1445.5 376.6V380.3M1446.5 377.2V380.5M1447.5 369.8V379.5M1448.5 366.7V369.8M1449.5 369.3V386.1M1450.5 373.7V386.1M1451.5 369.2V373.7M1452.5 369.7V376.5M1453.5 374.3V377.0M1454.5 374.3V376.2M1455.5 368.1V375.1M1456.5 368.1V371.3M1457.5 370.6V371.7M1458.5 370.6V375.3M1459.5 369.9V378.1M1460.5 378.1V385.4M1461.5 383.8V384.8M1462.5 369.4V383.9M1463.5 352.2V369.4M1464.5 344.4V352.2M1465.5 344.0V349.0M1466.5 349.0V365.2M1467.5 365.2V373.3M1468.5 364.6V372.9M1469.5 364.6V370.5M1470.5 367.0V372.5M1471.5 372.5V383.8M1472.5 383.8V395.1M1473.5 395.1V414.0M1474.5 372.4V410.3M1475.5 372.4V373.8M1476.5 372.5V381.1M1477.5 381.1V384.8M1478.5 378.7V386.5M1479.5 369.2V378.7M1480.5 369.2V376.9M1481.5 376.9V388.1M1482.5 388.1V391.3M1483.5 384.6V390.0M1484.5 386.6V408.5M1485.5 382.6V408.5M1486.5 377.8V382.6M1487.5 378.1V388.6M1488.5 388.6V392.9M1489.5 392.3V395.4M1490.5 388.8V407.9M1491.5 377.7V407.9M1492.5 375.3V378.0M1493.5 370.4V375.6M1494.5 373.6V380.3M1495.5 380.3V385.7M1496.5 384.2V388.4M1497.5 377.9V384.2M1498.5 377.3V378.3M1499.5 370.5V377.7M1500.5 370.5V372.8M1501.5 368.3V371.2M1502.5 370.9V376.6M1503.5 376.6V388.1M1504.5 388.1V397.3M1505.5 381.6V397.3M1506.5 374.1V381.6M1507.5 369.9V374.1M1508.5 370.8V375.9M1509.5 375.9V378.2M1510.5 376.8V377.8M1511.5 376.9V382.5M1512.5 381.8V384.9M1513.5 373.9V384.9M1514.5 373.7V375.9M1515.5 375.9V385.7M1516.5 384.0V385.7M1517.5 385.3V389.5M1518.5 382.9V387.6M1519.5 372.6V382.9M1520.5 372.6V383.2M1521.5 382.5V388.8M1522.5 388.8V396.6M1523.5 385.6V397.3M1524.5 374.9V385.6M1525.5 373.1V378.9M1526.5 378.9V386.0M1527.5 386.0V394.2M1528.5 381.4V394.2M1529.5 375.7V381.4M1530.5 372.5V381.5M1531.5 381.5V396.3M1532.5 377.2V393.7M1533.5 376.0V378.9M1534.5 374.8V379.7M1535.5 378.5V382.4M1536.5 369.7V378.5M1537.5 364.9V369.7M1538.5 368.1V378.9M1539.5 378.9V383.5M1540.5 373.0V382.7M1541.5 367.5V373.0M1542.5 367.5V372.3M1543.5 372.3V378.7M1544.5 377.9V382.2M1545.5 379.8V382.2M1546.5 379.8V382.4M1547.5 379.7V382.8M1548.5 374.2V381.5M1549.5 374.2V379.4M1550.5 378.6V380.1M1551.5 379.4V384.8M1552.5 384.8V388.8M1553.5 388.7V393.2M1554.5 391.3V393.7M1555.5 393.7V396.5M1556.5 386.8V394.7M1557.5 386.8V391.6M1558.5 391.6V402.6M1559.5 392.8V403.9M1560.5 370.7V392.8M1561.5 370.0V372.2M1562.5 372.2V383.6M1563.5 382.6V386.1M1564.5 373.0V383.7M1565.5 366.1V373.0M1566.5 365.4V370.2M1567.5 370.2V381.7M1568.5 381.7V384.0M1569.5 380.1V386.3M1570.5 375.5V380.1M1571.5 375.1V378.3M1572.5 374.3V378.3M1573.5 374.3V377.8M1574.5 377.8V389.3M1575.5 384.3V390.2M1576.5 384.3V386.8M1577.5 378.9V386.8M1578.5 378.6V379.6M1579.5 376.6V380.4M1580.5 374.3V376.6M1581.5 373.6V374.6M1582.5 371.5V373.8M1583.5 368.9V372.4M1584.5 372.4V386.3M1585.5 385.5V387.9M1586.5 374.4V385.5M1587.5 374.4V378.6M1588.5 374.0V378.5M1589.5 367.7V374.0M1590.5 366.0V367.7M1591.5 366.4V371.3M1592.5 371.3V377.8M1593.5 374.1V377.8M1594.5 375.7V379.3M1595.5 374.0V379.3M1596.5 371.8V374.0M1597.5 370.4V371.8M1598.5 371.3V374.6M1599.5 374.6V378.5M1600.5 378.4V379.9M1601.5 376.9V378.9M1602.5 375.9V376.9M1603.5 375.1V376.1M1604.5 376.0V389.0M1605.5 380.5V391.3M1606.5 373.5V380.5M1607.5 370.8V373.5M1608.5 369.8V373.2M1609.5 370.2V378.4M1610.5 377.2V384.2M1611.5 384.2V403.3M1612.5 403.3V414.0M1613.5 398.2V414.0M1614.5 383.1V398.2M1615.5 383.1V387.0M1616.5 376.7V387.0M1617.5 375.0V376.7M1618.5 374.2V383.2M1619.5 383.2V398.0M1620.5 382.1V398.0M1621.5 378.1V382.5M1622.5 375.1V378.1M1623.5 372.2V375.6M1624.5 372.2V378.6M1625.5 378.6V386.8M1626.5 374.1V386.8M1627.5 364.3V374.1M1628.5 364.3V368.7M1629.5 368.7V373.5M1630.5 373.5V374.5M1631.5 374.4V379.7M1632.5 379.7V398.0M1633.5 396.8V414.0M1634.5 373.8V396.8M1635.5 373.8V375.6M1636.5 375.6V384.7M1637.5 384.7V391.4M1638.5 378.5V388.7M1639.5 373.5V378.5M1640.5 371.3V376.4M1641.5 376.4V404.1M1642.5 381.3V404.1M1643.5 378.4V381.3M1644.5 378.9V383.8M1645.5 382.5V391.5M1646.5 391.5V395.3M1647.5 388.6V392.1M1648.5 377.7V392.1M1649.5 370.0V377.7M1650.5 368.9V371.8M1651.5 371.6V372.9M1652.5 371.6V374.0M1653.5 366.5V373.9M1654.5 361.6V366.5M1655.5 361.6V368.1M1656.5 366.7V371.7M1657.5 370.8V372.0M1658.5 371.9V374.4M1659.5 369.1V372.0M1660.5 371.4V387.1M1661.5 387.1V396.7M1662.5 387.5V392.9M1663.5 379.7V387.5M1664.5 378.6V379.7M1665.5 378.8V391.7M1666.5 381.9V393.3M1667.5 371.1V381.9M1668.5 371.1V375.9M1669.5 373.8V375.9M1670.5 372.1V376.3M1671.5 376.3V386.0M1672.5 377.2V385.4M1673.5 377.2V384.5M1674.5 384.5V386.3M1675.5 386.3V392.6M1676.5 392.1V393.1M1677.5 389.8V393.9M1678.5 383.3V389.8M1679.5 384.0V396.6M1680.5 384.8V400.2M1681.5 368.1V384.8M1682.5 364.8V368.1M1683.5 364.8V368.6M1684.5 367.0V368.6M1685.5 364.0V367.5M1686.5 365.0V367.5M1687.5 367.5V378.2M1688.5 378.2V402.7M1689.5 378.6V402.1M1690.5 374.3V378.6M1691.5 374.3V378.1M1692.5 378.1V382.2M1693.5 379.8V382.2M1694.5 378.6V381.5M1695.5 376.1V378.6M1696.5 376.5V383.3M1697.5 383.1V384.9M1698.5 383.1V394.6M1699.5 388.8V396.8M1700.5 386.3V388.8M1701.5 387.7V398.0M1702.5 390.0V398.0M1703.5 388.9V390.7M1704.5 384.7V388.9M1705.5 382.7V386.9M1706.5 380.0V382.7M1707.5 382.4V386.8M1708.5 383.5V388.0M1709.5 378.0V383.5M1710.5 376.8V381.6M1711.5 381.6V394.0M1712.5 382.2V394.0M1713.5 375.1V382.2M1714.5 375.1V377.8M1715.5 377.8V379.8M1716.5 379.8V381.9M1717.5 378.5V381.9M1718.5 380.3V384.1M1719.5 367.1V380.3M1720.5 365.2V367.1M1721.5 365.8V378.1M1722.5 378.1V392.3M1723.5 391.4V392.4M1724.5 389.8V393.8M1725.5 379.9V393.8M1726.5 377.6V380.1M1727.5 375.4V382.8M1728.5 382.8V393.8M1729.5 386.9V393.8M1730.5 383.8V386.9M1731.5 384.4V389.8M1732.5 389.1V391.5M1733.5 387.8V390.2M1734.5 390.2V414.0M1735.5 400.0V414.0M1736.5 390.7V400.3M1737.5 375.1V390.7M1738.5 375.1V378.9M1739.5 378.9V385.2M1740.5 379.6V385.2M1741.5 373.4V379.6M1742.5 372.8V374.5M1743.5 371.2V372.8M1744.5 372.7V381.7M1745.5 381.7V394.0M1746.5 376.5V394.0M1747.5 369.8V376.5M1748.5 369.8V373.6M1749.5 371.7V373.6M1750.5 372.3V374.5" fill="none" stroke="#e00000" stroke-width="1"/>
</g><g clip-path="url(#cp3)">
<path d="M3.5 532.9V534.8M4.5 534.8V540.2M5.5 540.2V546.0M6.5 537.2V544.9M7.5 537.6V557.7M8.5 547.9V573.8M9.5 538.6V547.9M10.5 528.4V538.6M11.5 520.1V528.4M12.5 519.3V521.3M13.5 521.3V533.3M14.5 533.3V537.8M15.5 536.8V538.1M16.5 538.1V548.9M17.5 548.9V567.2M18.5 566.4V570.6M19.5 557.6V568.3M20.5 538.7V557.6M21.5 529.9V538.7M22.5 527.2V529.9M23.5 526.1V527.3M24.5 527.3V528.8M25.5 528.1V529.3M26.5 525.3V528.1M27.5 525.3V530.0M28.5 520.3V529.3M29.5 520.3V522.0M30.5 520.7V522.5M31.5 520.9V522.5M32.5 521.1V524.3M33.5 524.3V530.6M34.5 529.6V533.8M35.5 530.5V534.9M36.5 527.9V530.5M37.5 521.7V527.9M38.5 519.7V521.9M39.5 518.5V523.1M40.5 523.1V532.1M41.5 532.1V534.3M42.5 532.4V534.3M43.5 534.3V536.4M44.5 534.8V536.6M45.5 536.6V543.2M46.5 539.1V543.4M47.5 533.9V539.1M48.5 531.9V533.9M49.5 530.4V532.8M50.5 525.4V530.4M51.5 525.4V528.8M52.5 523.8V527.5M53.5 523.8V525.2M54.5 525.2V529.1M55.5 529.1V536.7M56.5 536.4V538.7M57.5 538.7V541.3M58.5 534.7V541.3M59.5 532.5V535.8M60.5 525.4V532.5M61.5 525.4V527.0M62.5 525.4V529.4M63.5 527.3V533.0M64.5 533.0V548.6M65.5 542.1V548.6M66.5 537.6V542.1M67.5 536.9V537.9M68.5 536.9V538.1M69.5 536.9V542.4M70.5 542.4V544.7M71.5 539.6V544.5M72.5 536.8V539.6M73.5 537.0V541.2M74.5 534.0V541.2M75.5 534.0V536.3M76.5 535.6V544.6M77.5 532.4V544.6M78.5 528.4V532.4M79.5 527.0V529.3M80.5 529.2V530.7M81.5 530.7V541.8M82.5 541.8V546.9M83.5 536.1V544.5M84.5 536.3V539.3M85.5 531.4V538.3M86.5 531.4V533.3M87.5 530.0V533.1M88.5 526.8V530.0M89.5 525.7V527.1M90.5 525.4V528.3M91.5 524.2V528.3M92.5 517.6V524.2M93.5 517.6V522.0M94.5 522.0V530.8M95.5 530.8V540.4M96.5 540.3V542.5M97.5 531.9V540.3M98.5 530.7V534.8M99.5 534.8V543.6M100.5 539.2V543.6M101.5 532.3V539.2M102.5 527.5V532.3M103.5 527.5V528.7M104.5 527.1V530.3M105.5 525.7V530.3M106.5 525.7V528.4M107.5 526.7V530.2M108.5 530.2V534.2M109.5 529.4V533.8M110.5 529.4V531.4M111.5 520.6V529.4M112.5 514.4V520.6M113.5 513.9V517.2M114.5 517.2V526.7M115.5 526.0V527.0M116.5 526.7V543.5M117.5 539.6V553.7M118.5 529.3V539.6M119.5 526.1V529.3M120.5 526.2V530.3M121.5 529.0V531.0M122.5 531.0V534.6M123.5 527.4V534.6M124.5 526.0V527.4M125.5 526.9V541.4M126.5 541.4V551.6M127.5 531.6V542.2M128.5 531.6V535.1M129.5 523.5V531.8M130.5 523.5V533.3M131.5 533.3V544.3M132.5 540.2V544.3M133.5 540.2V545.2M134.5 545.2V548.0M135.5 534.7V545.8M136.5 533.1V535.8M137.5 528.4V533.1M138.5 527.6V531.8M139.5 531.8V541.0M140.5 541.0V547.9M141.5 546.3V554.2M142.5 550.2V558.6M143.5 542.0V550.2M144.5 541.2V547.0M145.5 547.0V557.2M146.5 550.6V555.1M147.5 547.3V552.6M148.5 536.7V547.3M149.5 536.7V545.4M150.5 545.4V548.7M151.5 543.5V546.6M152.5 536.2V543.5M153.5 532.5V536.2M154.5 533.0V547.0M155.5 530.7V547.0M156.5 529.6V531.0M157.5 529.1V530.4M158.5 527.5V530.7M159.5 527.5V530.4M160.5 530.0V533.2M161.5 533.1V534.1M162.5 532.9V541.4M163.5 541.4V562.9M164.5 532.5V558.4M165.5 529.2V532.5M166.5 529.7V532.6M167.5 527.1V531.3M168.5 526.3V529.9M169.5 529.9V534.6M170.5 534.6V541.9M171.5 541.9V546.9M172.5 533.1V543.3M173.5 533.1V538.4M174.5 537.6V542.3M175.5 542.3V547.9M176.5 539.7V547.1M177.5 539.7V547.1M178.5 542.2V547.1M179.5 538.0V542.6M180.5 531.5V538.0M181.5 524.8V531.5M182.5 524.8V528.1M183.5 525.3V526.4M184.5 526.4V533.8M185.5 533.8V536.2M186.5 535.6V537.4M187.5 537.4V539.1M188.5 537.0V539.1M189.5 537.0V539.8M190.5 533.9V539.8M191.5 527.1V533.9M192.5 527.1V533.4M193.5 533.4V544.6M194.5 533.4V544.6M195.5 533.1V534.1M196.5 532.7V536.9M197.5 531.3V541.1M198.5 520.0V531.3M199.5 518.8V520.3M200.5 520.3V523.9M201.5 519.5V523.5M202.5 520.1V525.0M203.5 525.0V526.8M204.5 526.8V531.9M205.5 531.9V551.1M206.5 532.5V551.1M207.5 524.8V532.5M208.5 523.1V525.7M209.5 525.7V539.1M210.5 536.1V539.1M211.5 536.1V542.1M212.5 542.1V561.8M213.5 541.5V561.8M214.5 539.8V541.5M215.5 537.3V539.8M216.5 537.3V541.1M217.5 535.2V539.1M218.5 537.3V544.5M219.5 540.6V544.5M220.5 536.3V540.6M221.5 535.8V536.8M222.5 536.8V551.2M223.5 533.6V551.2M224.5 529.1V533.6M225.5 528.9V529.9M226.5 529.7V531.4M227.5 531.4V535.3M228.5 535.3V551.0M229.5 532.9V551.0M230.5 532.0V533.7M231.5 532.6V536.7M232.5 527.9V536.0M233.5 527.3V528.9M234.5 528.9V536.0M235.5 531.9V536.0M236.5 526.0V531.9M237.5 526.0V529.1M238.5 529.1V539.4M239.5 539.4V542.1M240.5 531.4V540.4M241.5 529.0V531.4M242.5 529.0V530.9M243.5 530.9V542.8M244.5 542.8V551.4M245.5 549.3V551.6M246.5 544.3V552.1M247.5 539.7V544.7M248.5 544.5V547.3M249.5 538.8V545.2M250.5 532.3V538.8M251.5 532.0V534.9M252.5 534.9V541.6M253.5 529.8V541.6M254.5 525.3V530.0M255.5 525.3V529.4M256.5 528.9V530.8M257.5 527.3V531.2M258.5 523.6V527.3M259.5 523.1V524.9M260.5 519.7V523.1M261.5 515.6V519.7M262.5 518.5V527.8M263.5 527.8V543.0M264.5 543.0V547.5M265.5 538.6V546.1M266.5 527.8V538.6M267.5 527.8V531.7M268.5 531.4V538.3M269.5 538.3V543.6M270.5 537.3V540.8M271.5 534.6V542.3M272.5 523.9V534.6M273.5 522.4V523.9M274.5 523.8V531.8M275.5 527.4V531.4M276.5 527.6V534.9M277.5 534.9V542.4M278.5 542.4V544.4M279.5 539.8V543.8M280.5 540.1V553.7M281.5 533.7V553.7M282.5 525.3V533.7M283.5 522.0V525.7M284.5 525.7V534.1M285.5 533.1V535.3M286.5 533.1V537.1M287.5 537.1V540.1M288.5 537.0V539.3M289.5 537.5V543.9M290.5 543.9V545.4M291.5 545.3V549.3M292.5 547.7V552.7M293.5 536.4V547.7M294.5 531.1V536.4M295.5 528.8V531.1M296.5 530.9V541.0M297.5 541.0V544.0M298.5 540.3V545.5M299.5 536.4V540.3M300.5 532.5V539.9M301.5 539.9V546.5M302.5 543.9V545.1M303.5 542.5V548.1M304.5 548.1V554.3M305.5 548.9V553.0M306.5 539.5V548.9M307.5 535.1V539.5M308.5 535.1V537.5M309.5 537.5V545.7M310.5 544.8V552.0M311.5 526.9V544.8M312.5 522.1V526.9M313.5 522.1V528.8M314.5 528.8V538.2M315.5 537.2V541.6M316.5 535.6V537.2M317.5 536.8V547.2M318.5 540.1V547.2M319.5 538.1V540.1M320.5 536.8V539.8M321.5 532.4V539.7M322.5 539.7V556.5M323.5 536.6V551.9M324.5 535.1V536.6M325.5 532.6V535.7M326.5 532.6V534.6M327.5 533.9V536.0M328.5 535.5V536.7M329.5 536.7V538.5M330.5 534.5V538.5M331.5 528.2V534.5M332.5 528.2V532.6M333.5 532.6V537.1M334.5 533.1V536.5M335.5 534.1V546.6M336.5 546.6V554.9M337.5 546.5V552.8M338.5 537.8V546.5M339.5 535.3V538.3M340.5 529.6V535.3M341.5 529.6V532.6M342.5 531.0V539.4M343.5 534.3V539.8M344.5 530.5V534.3M345.5 531.7V543.1M346.5 534.6V543.7M347.5 525.7V534.6M348.5 525.7V528.2M349.5 526.2V529.3M350.5 524.8V526.4M351.5 521.6V526.0M352.5 526.0V536.5M353.5 534.8V536.5M354.5 532.9V534.8M355.5 531.1V535.6M356.5 535.6V542.7M357.5 526.7V540.9M358.5 526.7V529.9M359.5 529.9V538.5M360.5 531.4V539.0M361.5 524.5V531.4M362.5 524.8V534.3M363.5 534.3V542.2M364.5 542.2V548.4M365.5 542.8V548.4M366.5 542.1V546.8M367.5 543.3V549.5M368.5 536.7V543.3M369.5 533.5V536.7M370.5 533.7V539.2M371.5 539.2V549.1M372.5 543.9V550.7M373.5 540.3V546.0M374.5 536.6V540.3M375.5 534.4V536.6M376.5 534.9V542.0M377.5 542.0V545.5M378.5 542.6V546.1M379.5 542.6V546.9M380.5 546.0V548.2M381.5 545.4V548.1M382.5 548.1V562.1M383.5 539.9V559.4M384.5 535.7V539.9M385.5 538.0V558.2M386.5 556.2V559.7M387.5 554.6V557.0M388.5 545.4V554.6M389.5 539.7V545.4M390.5 537.1V539.7M391.5 533.6V538.2M392.5 529.9V533.6M393.5 531.7V538.2M394.5 538.2V540.5M395.5 537.8V540.0M396.5 534.5V537.8M397.5 535.5V539.7M398.5 537.5V539.7M399.5 531.8V537.5M400.5 529.5V531.8M401.5 526.9V529.5M402.5 528.0V537.9M403.5 530.2V539.2M404.5 525.5V530.2M405.5 520.6V525.6M406.5 525.6V542.6M407.5 537.3V542.6M408.5 535.0V537.3M409.5 535.2V537.1M410.5 537.1V540.2M411.5 533.0V539.9M412.5 531.7V533.7M413.5 531.7V536.6M414.5 536.4V545.4M415.5 545.4V550.2M416.5 536.2V546.2M417.5 532.3V536.2M418.5 529.8V532.3M419.5 532.2V540.2M420.5 537.4V540.2M421.5 528.9V537.4M422.5 524.0V528.9M423.5 524.0V528.4M424.5 528.4V537.9M425.5 534.5V537.9M426.5 528.9V534.5M427.5 524.1V528.9M428.5 524.1V525.8M429.5 524.3V529.4M430.5 529.1V539.3M431.5 539.3V556.7M432.5 541.4V556.7M433.5 537.8V541.4M434.5 539.0V540.8M435.5 538.4V540.2M436.5 540.2V550.3M437.5 540.7V550.3M438.5 534.3V540.7M439.5 523.7V534.3M440.5 523.7V525.5M441.5 525.5V528.6M442.5 528.6V532.3M443.5 532.3V548.6M444.5 548.6V558.7M445.5 530.0V552.0M446.5 526.1V530.0M447.5 525.5V530.6M448.5 530.6V536.5M449.5 533.6V535.7M450.5 534.4V538.1M451.5 526.7V537.1M452.5 523.8V526.7M453.5 524.1V532.0M454.5 532.0V546.4M455.5 529.8V546.4M456.5 524.5V529.8M457.5 524.5V529.4M458.5 529.1V532.3M459.5 532.3V547.6M460.5 547.6V560.2M461.5 545.5V554.7M462.5 546.1V552.2M463.5 531.0V550.8M464.5 528.3V531.1M465.5 528.4V539.0M466.5 539.0V545.0M467.5 541.9V548.7M468.5 548.7V561.3M469.5 538.3V552.1M470.5 538.6V558.0M471.5 555.4V558.0M472.5 550.1V555.4M473.5 539.4V550.1M474.5 539.4V542.6M475.5 542.6V543.8M476.5 538.2V543.3M477.5 535.8V538.2M478.5 530.6V535.8M479.5 530.6V534.7M480.5 527.4V533.4M481.5 524.6V527.8M482.5 524.6V527.9M483.5 526.8V540.1M484.5 540.1V573.7M485.5 546.0V573.7M486.5 542.6V546.0M487.5 538.7V543.6M488.5 528.9V538.7M489.5 526.3V533.5M490.5 533.5V556.1M491.5 533.8V549.3M492.5 532.5V535.5M493.5 535.5V536.8M494.5 536.8V555.6M495.5 555.6V581.4M496.5 564.7V571.5M497.5 546.9V564.9M498.5 542.3V546.9M499.5 536.6V542.3M500.5 531.6V536.6M501.5 531.6V535.2M502.5 534.7V536.4M503.5 532.7V536.4M504.5 535.2V536.7M505.5 536.6V537.6M506.5 535.6V537.7M507.5 532.7V535.6M508.5 532.9V538.0M509.5 533.8V538.0M510.5 533.8V538.3M511.5 535.4V538.3M512.5 537.4V539.0M513.5 529.5V537.4M514.5 526.5V529.5M515.5 526.5V532.6M516.5 532.6V536.0M517.5 526.9V535.1M518.5 526.9V531.0M519.5 531.0V538.4M520.5 538.4V542.1M521.5 525.5V538.9M522.5 525.5V527.3M523.5 525.1V529.3M524.5 529.3V532.8M525.5 532.8V536.7M526.5 536.7V551.9M527.5 527.7V551.9M528.5 514.2V527.7M529.5 506.5V514.2M530.5 506.0V509.4M531.5 509.4V519.8M532.5 519.8V532.4M533.5 532.4V538.4M534.5 530.4V538.4M535.5 529.8V530.9M536.5 529.7V538.9M537.5 538.9V558.4M538.5 538.4V558.4M539.5 531.3V538.4M540.5 531.3V536.5M541.5 531.3V536.5M542.5 530.7V531.8M543.5 530.9V541.0M544.5 541.0V562.4M545.5 562.4V571.2M546.5 571.2V590.6M547.5 548.3V588.9M548.5 535.3V548.3M549.5 533.9V535.3M550.5 534.0V535.6M551.5 535.2V536.2M552.5 536.0V539.8M553.5 532.5V539.5M554.5 532.5V539.8M555.5 539.2V543.6M556.5 532.1V539.2M557.5 530.1V538.5M558.5 538.5V551.2M559.5 529.0V545.2M560.5 529.0V533.8M561.5 533.2V546.1M562.5 546.1V551.9M563.5 545.0V547.0M564.5 545.4V551.8M565.5 542.8V554.6M566.5 531.8V542.8M567.5 531.8V534.6M568.5 533.3V535.3M569.5 531.1V540.8M570.5 540.8V565.3M571.5 541.7V558.7M572.5 533.4V541.7M573.5 533.4V535.0M574.5 530.0V534.4M575.5 522.3V530.0M576.5 519.4V522.3M577.5 519.4V526.4M578.5 526.4V534.7M579.5 534.7V537.7M580.5 537.4V538.4M581.5 535.8V538.2M582.5 534.9V538.5M583.5 534.9V536.3M584.5 535.6V537.8M585.5 535.6V537.8M586.5 534.7V538.3M587.5 531.1V534.7M588.5 530.6V532.4M589.5 532.4V546.9M590.5 535.7V546.9M591.5 527.9V535.7M592.5 527.9V531.1M593.5 530.4V536.3M594.5 536.3V541.3M595.5 531.5V538.6M596.5 530.1V533.2M597.5 533.2V537.8M598.5 528.5V537.0M599.5 525.7V528.5M600.5 526.0V530.5M601.5 530.5V534.1M602.5 534.1V537.6M603.5 533.1V537.6M604.5 533.1V542.1M605.5 539.7V542.6M606.5 542.6V548.9M607.5 539.5V548.9M608.5 535.9V540.7M609.5 531.7V535.9M610.5 531.7V534.9M611.5 532.3V538.1M612.5 537.5V540.5M613.5 535.7V538.6M614.5 538.6V545.6M615.5 537.7V545.5M616.5 536.5V542.3M617.5 542.3V553.1M618.5 537.5V549.0M619.5 537.5V540.7M620.5 536.3V542.7M621.5 530.0V536.3M622.5 530.0V535.4M623.5 535.4V542.6M624.5 535.9V542.6M625.5 535.9V538.7M626.5 533.9V540.9M627.5 540.9V549.8M628.5 529.0V544.7M629.5 525.7V529.0M630.5 525.7V530.4M631.5 530.4V540.5M632.5 533.1V540.8M633.5 528.2V533.1M634.5 524.6V528.5M635.5 528.5V536.1M636.5 535.2V536.2M637.5 534.7V535.7M638.5 532.7V535.1M639.5 532.8V544.7M640.5 544.7V548.5M641.5 537.5V545.5M642.5 534.3V537.5M643.5 536.1V538.1M644.5 538.1V541.4M645.5 541.4V544.1M646.5 535.3V543.9M647.5 531.6V537.5M648.5 529.2V531.6M649.5 530.4V537.3M650.5 535.9V537.3M651.5 534.0V536.7M652.5 533.3V536.2M653.5 535.8V539.5M654.5 528.4V535.8M655.5 527.3V531.3M656.5 531.3V536.6M657.5 536.6V545.2M658.5 545.2V548.2M659.5 546.3V550.2M660.5 544.7V551.1M661.5 527.1V544.7M662.5 524.6V527.1M663.5 525.9V540.7M664.5 540.7V548.4M665.5 548.4V557.3M666.5 550.1V557.3M667.5 542.0V550.2M668.5 534.1V542.0M669.5 532.9V534.4M670.5 534.4V545.3M671.5 543.2V550.7M672.5 545.2V553.7M673.5 533.7V545.2M674.5 531.3V533.7M675.5 532.9V534.8M676.5 534.8V536.1M677.5 534.2V535.7M678.5 534.4V541.4M679.5 541.4V552.4M680.5 537.9V552.4M681.5 528.5V537.9M682.5 527.5V528.5M683.5 528.0V532.8M684.5 532.8V540.0M685.5 540.0V544.6M686.5 538.4V544.6M687.5 528.1V538.4M688.5 528.1V530.2M689.5 529.0V531.7M690.5 528.1V531.3M691.5 529.1V539.5M692.5 536.3V541.5M693.5 528.9V536.3M694.5 528.9V532.6M695.5 531.9V532.9M696.5 531.0V534.9M697.5 534.9V549.4M698.5 531.3V549.4M699.5 527.1V531.3M700.5 527.1V531.1M701.5 531.1V536.0M702.5 536.0V544.0M703.5 543.9V544.9M704.5 541.9V545.3M705.5 532.4V541.9M706.5 530.0V533.3M707.5 529.5V530.5M708.5 529.9V535.7M709.5 535.7V547.6M710.5 545.7V551.0M711.5 529.5V545.7M712.5 526.1V529.5M713.5 526.3V532.9M714.5 527.7V532.9M715.5 526.6V527.7M716.5 527.1V533.8M717.5 533.7V534.7M718.5 534.7V538.4M719.5 536.8V538.4M720.5 536.7V537.7M721.5 535.1V537.6M722.5 534.0V535.3M723.5 533.4V536.2M724.5 531.1V533.4M725.5 531.7V536.5M726.5 533.6V537.7M727.5 533.0V534.0M728.5 531.9V533.5M729.5 533.5V535.1M730.5 535.1V539.7M731.5 535.4V539.7M732.5 529.1V535.4M733.5 528.7V531.0M734.5 524.0V528.7M735.5 524.0V526.0M736.5 526.0V531.5M737.5 531.5V535.9M738.5 524.4V533.4M739.5 523.3V525.7M740.5 525.7V537.0M741.5 537.0V546.7M742.5 537.4V546.4M743.5 532.9V537.4M744.5 533.8V539.4M745.5 536.7V541.0M746.5 531.5V536.7M747.5 528.0V531.5M748.5 529.6V540.4M749.5 539.6V540.8M750.5 532.0V539.6M751.5 532.0V537.4M752.5 537.4V553.0M753.5 551.9V557.5M754.5 539.4V551.9M755.5 539.4V540.8M756.5 540.8V542.6M757.5 535.5V541.8M758.5 530.4V535.5M759.5 530.5V540.0M760.5 540.0V545.5M761.5 536.9V545.5M762.5 531.7V537.5M763.5 528.7V531.7M764.5 528.3V533.7M765.5 533.7V547.5M766.5 547.5V554.6M767.5 545.2V552.8M768.5 538.4V545.2M769.5 539.8V548.7M770.5 535.5V548.1M771.5 532.4V535.5M772.5 529.6V535.5M773.5 535.5V556.0M774.5 556.0V559.2M775.5 557.7V567.6M776.5 549.1V565.3M777.5 549.1V552.9M778.5 538.4V552.9M779.5 530.4V538.4M780.5 526.5V530.4M781.5 530.2V542.7M782.5 542.7V555.0M783.5 555.0V560.6M784.5 539.7V555.8M785.5 534.0V539.7M786.5 534.3V542.6M787.5 537.0V542.6M788.5 537.0V539.9M789.5 539.9V543.0M790.5 539.7V543.0M791.5 539.7V544.9M792.5 531.2V539.7M793.5 531.2V533.8M794.5 533.8V539.5M795.5 531.6V539.5M796.5 527.8V531.6M797.5 527.8V530.5M798.5 530.5V541.6M799.5 538.7V545.1M800.5 530.2V538.7M801.5 531.0V554.1M802.5 551.9V557.2M803.5 548.5V551.9M804.5 531.6V548.5M805.5 526.0V531.6M806.5 524.6V526.0M807.5 525.3V530.0M808.5 528.7V531.9M809.5 530.7V533.1M810.5 527.4V530.7M811.5 523.6V527.4M812.5 523.6V531.8M813.5 530.9V531.9M814.5 531.1V532.1M815.5 531.3V536.2M816.5 531.2V536.2M817.5 526.3V531.2M818.5 521.4V526.3M819.5 521.4V525.0M820.5 524.7V529.4M821.5 529.4V542.2M822.5 542.2V546.6M823.5 533.4V544.7M824.5 525.9V533.4M825.5 525.9V532.7M826.5 532.7V557.0M827.5 548.0V570.7M828.5 537.8V548.0M829.5 537.8V542.5M830.5 542.5V548.1M831.5 548.1V555.3M832.5 544.8V555.3M833.5 538.6V544.8M834.5 530.4V538.6M835.5 530.4V534.6M836.5 528.4V533.3M837.5 533.2V544.6M838.5 544.6V548.9M839.5 547.0V555.9M840.5 551.8V559.9M841.5 539.7V551.8M842.5 528.7V539.7M843.5 528.7V532.1M844.5 531.6V538.3M845.5 538.3V550.4M846.5 543.5V552.1M847.5 529.9V543.5M848.5 526.3V529.9M849.5 526.3V531.5M850.5 528.4V536.3M851.5 536.3V551.4M852.5 543.3V551.8M853.5 536.4V543.3M854.5 531.2V536.4M855.5 531.3V537.5M856.5 536.2V542.8M857.5 542.8V546.8M858.5 541.7V543.9M859.5 539.8V541.7M860.5 539.8V541.6M861.5 540.0V541.2M862.5 540.0V542.4M863.5 542.4V548.5M864.5 537.8V548.2M865.5 530.1V537.8M866.5 528.1V530.4M867.5 530.4V542.3M868.5 542.3V553.1M869.5 542.0V553.1M870.5 534.9V542.0M871.5 532.4V534.9M872.5 528.7V533.0M873.5 527.8V529.0M874.5 529.0V539.1M875.5 539.1V554.6M876.5 551.0V554.6M877.5 550.1V558.7M878.5 542.4V558.7M879.5 530.6V542.4M880.5 530.6V536.7M881.5 534.5V536.7M882.5 533.1V536.9M883.5 536.9V550.9M884.5 541.3V550.9M885.5 539.2V541.9M886.5 534.3V539.2M887.5 534.3V539.2M888.5 535.6V539.2M889.5 531.7V536.4M890.5 527.9V531.7M891.5 528.1V537.1M892.5 536.3V542.3M893.5 522.7V536.3M894.5 522.7V524.7M895.5 523.6V529.3M896.5 529.3V539.5M897.5 539.5V544.9M898.5 530.4V540.3M899.5 527.1V530.4M900.5 528.0V535.7M901.5 535.7V540.0M902.5 538.6V540.9M903.5 538.1V539.1M904.5 537.6V538.6M905.5 535.1V537.6M906.5 535.5V545.3M907.5 545.3V556.4M908.5 547.0V558.9M909.5 540.4V547.0M910.5 539.0V544.8M911.5 527.8V539.0M912.5 527.8V533.2M913.5 533.2V542.9M914.5 542.2V545.8M915.5 541.9V546.7M916.5 538.8V541.9M917.5 539.3V549.7M918.5 549.7V556.9M919.5 542.6V553.0M920.5 542.6V544.6M921.5 542.8V544.6M922.5 542.7V547.8M923.5 536.7V542.7M924.5 533.0V538.3M925.5 522.5V533.0M926.5 517.6V522.5M927.5 518.1V528.5M928.5 528.5V548.9M929.5 541.5V552.8M930.5 538.9V542.1M931.5 535.9V538.9M932.5 536.6V547.9M933.5 547.9V558.6M934.5 547.6V554.8M935.5 542.5V547.6M936.5 540.9V543.2M937.5 539.9V543.6M938.5 538.1V540.3M939.5 540.3V547.3M940.5 547.3V555.7M941.5 547.2V555.7M942.5 534.9V547.2M943.5 533.7V538.7M944.5 524.7V533.7M945.5 524.7V535.9M946.5 531.7V535.9M947.5 527.9V531.7M948.5 529.7V540.8M949.5 540.8V544.6M950.5 536.5V544.6M951.5 535.2V536.6M952.5 535.3V539.4M953.5 539.4V541.3M954.5 541.0V542.0M955.5 537.9V541.3M956.5 538.0V547.6M957.5 547.6V575.7M958.5 543.7V575.7M959.5 539.4V543.7M960.5 541.4V554.4M961.5 554.1V566.9M962.5 563.2V574.4M963.5 556.1V563.2M964.5 548.5V556.1M965.5 546.4V551.1M966.5 539.8V546.4M967.5 536.3V539.8M968.5 532.3V536.5M969.5 532.3V535.2M970.5 532.3V540.4M971.5 540.4V545.9M972.5 543.4V544.7M973.5 538.9V545.2M974.5 529.6V538.9M975.5 529.6V533.6M976.5 533.6V546.0M977.5 544.2V546.0M978.5 545.2V548.9M979.5 548.9V553.8M980.5 544.8V553.8M981.5 540.7V544.8M982.5 543.9V550.3M983.5 546.1V550.2M984.5 545.3V546.3M985.5 542.0V546.4M986.5 529.2V542.0M987.5 525.9V529.2M988.5 526.3V537.3M989.5 537.3V539.9M990.5 533.4V539.6M991.5 533.4V536.0M992.5 536.0V537.2M993.5 535.9V537.2M994.5 536.1V542.1M995.5 538.2V542.1M996.5 536.1V538.2M997.5 535.8V537.7M998.5 535.9V538.2M999.5 534.5V536.0M1000.5 532.4V535.7M1001.5 535.7V541.1M1002.5 533.1V541.0M1003.5 528.6V533.1M1004.5 528.7V539.6M1005.5 539.6V555.1M1006.5 546.6V555.1M1007.5 536.3V546.6M1008.5 532.9V537.4M1009.5 529.8V532.9M1010.5 532.5V543.9M1011.5 538.2V544.5M1012.5 533.1V538.2M1013.5 533.0V534.0M1014.5 530.2V533.9M1015.5 531.7V538.7M1016.5 538.7V574.0M1017.5 543.6V574.0M1018.5 542.0V544.0M1019.5 538.9V542.0M1020.5 539.7V548.0M1021.5 545.9V550.5M1022.5 538.8V545.9M1023.5 538.8V545.3M1024.5 543.7V547.4M1025.5 538.1V543.7M1026.5 538.1V541.2M1027.5 541.2V546.0M1028.5 545.9V547.8M1029.5 543.7V547.1M1030.5 547.1V550.1M1031.5 548.1V552.9M1032.5 547.8V555.4M1033.5 534.3V547.8M1034.5 528.7V534.3M1035.5 528.7V535.7M1036.5 535.2V543.0M1037.5 542.1V544.3M1038.5 539.0V546.0M1039.5 533.7V539.0M1040.5 534.8V542.1M1041.5 542.1V549.2M1042.5 547.6V549.2M1043.5 547.6V553.1M1044.5 552.7V559.1M1045.5 533.9V552.7M1046.5 532.8V535.2M1047.5 531.8V533.2M1048.5 533.2V535.7M1049.5 533.2V535.1M1050.5 534.9V546.2M1051.5 541.3V548.0M1052.5 541.1V542.7M1053.5 537.7V544.7M1054.5 544.7V551.9M1055.5 543.0V547.6M1056.5 538.2V543.0M1057.5 538.7V542.9M1058.5 533.1V538.7M1059.5 533.1V538.3M1060.5 538.3V553.1M1061.5 543.5V553.1M1062.5 543.5V556.6M1063.5 544.1V556.6M1064.5 540.9V544.1M1065.5 541.1V543.4M1066.5 539.5V543.4M1067.5 539.5V545.0M1068.5 545.0V551.9M1069.5 547.7V553.7M1070.5 544.3V547.7M1071.5 545.8V549.3M1072.5 543.8V549.4M1073.5 543.0V546.5M1074.5 535.9V543.0M1075.5 529.6V535.9M1076.5 529.6V534.2M1077.5 533.3V534.3M1078.5 533.3V535.1M1079.5 535.1V539.3M1080.5 539.3V540.8M1081.5 540.5V542.8M1082.5 538.6V542.8M1083.5 536.0V539.1M1084.5 533.7V536.0M1085.5 534.4V542.1M1086.5 542.1V543.6M1087.5 541.4V542.7M1088.5 542.7V553.7M1089.5 548.1V555.0M1090.5 541.9V548.1M1091.5 539.6V541.9M1092.5 538.2V539.6M1093.5 535.7V538.3M1094.5 538.3V566.4M1095.5 541.6V566.4M1096.5 535.9V541.6M1097.5 536.2V542.3M1098.5 542.3V545.6M1099.5 540.9V545.8M1100.5 536.5V540.9M1101.5 536.6V542.0M1102.5 542.0V546.0M1103.5 543.4V547.8M1104.5 541.1V543.4M1105.5 531.4V541.2M1106.5 531.4V535.2M1107.5 530.7V538.6M1108.5 538.6V555.2M1109.5 549.2V555.1M1110.5 545.2V549.2M1111.5 536.0V545.2M1112.5 536.0V538.2M1113.5 538.2V545.1M1114.5 541.8V545.1M1115.5 544.8V561.9M1116.5 561.9V588.0M1117.5 548.4V575.9M1118.5 542.5V548.4M1119.5 543.2V556.1M1120.5 553.4V560.9M1121.5 547.5V553.4M1122.5 547.2V550.7M1123.5 546.4V550.7M1124.5 545.9V547.1M1125.5 540.6V545.9M1126.5 539.4V540.6M1127.5 539.4V540.4M1128.5 539.5V541.4M1129.5 535.1V541.1M1130.5 535.1V537.5M1131.5 536.0V539.1M1132.5 538.1V540.6M1133.5 540.6V548.3M1134.5 548.3V560.0M1135.5 547.3V560.0M1136.5 545.8V549.0M1137.5 544.5V545.8M1138.5 544.9V546.0M1139.5 544.3V556.7M1140.5 551.7V560.0M1141.5 539.0V551.7M1142.5 537.2V539.1M1143.5 536.3V537.9M1144.5 536.9V537.9M1145.5 536.9V542.1M1146.5 542.1V551.0M1147.5 551.0V552.3M1148.5 551.2V552.4M1149.5 540.8V551.2M1150.5 533.7V540.8M1151.5 532.7V533.7M1152.5 532.7V534.8M1153.5 534.8V540.6M1154.5 540.6V551.8M1155.5 549.2V555.3M1156.5 537.8V549.2M1157.5 535.2V537.8M1158.5 535.2V540.4M1159.5 540.4V549.4M1160.5 542.3V549.4M1161.5 535.8V542.3M1162.5 535.1V537.6M1163.5 537.6V539.8M1164.5 538.0V539.1M1165.5 536.1V539.6M1166.5 539.6V545.9M1167.5 538.9V545.1M1168.5 536.5V538.9M1169.5 537.1V540.7M1170.5 537.7V540.7M1171.5 538.0V549.0M1172.5 542.7V551.6M1173.5 540.9V543.2M1174.5 541.8V556.8M1175.5 552.9V556.8M1176.5 549.9V553.7M1177.5 548.6V549.9M1178.5 546.8V548.8M1179.5 548.8V553.2M1180.5 546.9V554.0M1181.5 536.4V546.9M1182.5 532.8V536.4M1183.5 532.8V535.5M1184.5 535.5V541.4M1185.5 541.4V551.5M1186.5 551.5V562.9M1187.5 545.6V562.9M1188.5 536.4V545.6M1189.5 536.4V544.6M1190.5 544.6V549.6M1191.5 541.2V546.9M1192.5 535.8V541.2M1193.5 534.9V535.9M1194.5 535.4V537.9M1195.5 537.9V539.0M1196.5 539.0V545.6M1197.5 543.6V545.8M1198.5 543.6V545.9M1199.5 542.4V545.6M1200.5 532.7V542.4M1201.5 529.8V532.7M1202.5 528.0V530.5M1203.5 530.2V532.4M1204.5 532.4V539.4M1205.5 537.9V541.6M1206.5 539.2V543.0M1207.5 535.3V539.2M1208.5 529.9V535.3M1209.5 529.9V533.2M1210.5 533.2V542.4M1211.5 542.4V550.9M1212.5 531.8V549.3M1213.5 530.4V533.6M1214.5 527.4V531.5M1215.5 531.5V543.1M1216.5 539.2V543.7M1217.5 533.4V539.2M1218.5 531.1V533.4M1219.5 531.8V535.8M1220.5 534.9V536.5M1221.5 532.8V534.9M1222.5 533.0V542.3M1223.5 542.3V553.3M1224.5 545.7V553.3M1225.5 543.7V545.7M1226.5 543.7V548.6M1227.5 548.6V551.7M1228.5 548.1V551.7M1229.5 543.7V549.7M1230.5 525.6V543.7M1231.5 525.0V528.4M1232.5 521.9V525.1M1233.5 525.1V539.0M1234.5 539.0V565.4M1235.5 541.6V565.4M1236.5 533.4V541.6M1237.5 533.4V543.7M1238.5 543.7V561.7M1239.5 538.3V558.1M1240.5 534.6V538.3M1241.5 534.6V536.3M1242.5 534.1V537.2M1243.5 537.2V542.7M1244.5 539.0V542.7M1245.5 535.6V539.0M1246.5 535.2V536.8M1247.5 535.2V536.4M1248.5 534.4V542.2M1249.5 542.2V563.6M1250.5 560.3V570.4M1251.5 536.3V560.3M1252.5 528.5V536.3M1253.5 528.3V533.7M1254.5 533.7V546.6M1255.5 537.5V547.0M1256.5 528.8V537.5M1257.5 528.8V534.9M1258.5 534.9V541.5M1259.5 540.2V542.2M1260.5 539.4V540.6M1261.5 540.6V549.4M1262.5 549.4V553.2M1263.5 547.9V552.5M1264.5 546.4V548.8M1265.5 542.1V546.4M1266.5 542.7V546.4M1267.5 542.9V547.4M1268.5 540.6V542.9M1269.5 541.2V552.0M1270.5 552.0V558.9M1271.5 556.4V559.3M1272.5 554.1V556.4M1273.5 552.7V554.1M1274.5 552.5V553.5M1275.5 551.5V553.3M1276.5 549.1V551.6M1277.5 545.8V551.1M1278.5 532.5V545.8M1279.5 532.5V534.1M1280.5 532.7V537.0M1281.5 537.0V547.2M1282.5 547.2V559.8M1283.5 559.8V562.3M1284.5 558.7V560.4M1285.5 557.4V558.7M1286.5 548.9V557.9M1287.5 547.7V549.5M1288.5 549.5V552.9M1289.5 548.8V551.9M1290.5 544.3V548.9M1291.5 541.7V545.1M1292.5 541.4V544.0M1293.5 542.9V544.6M1294.5 541.2V545.7M1295.5 538.0V541.2M1296.5 534.7V538.2M1297.5 534.7V538.6M1298.5 535.2V537.2M1299.5 537.2V545.1M1300.5 545.1V560.2M1301.5 560.0V564.2M1302.5 548.8V560.0M1303.5 548.8V552.2M1304.5 544.3V554.7M1305.5 535.4V544.3M1306.5 533.1V535.4M1307.5 531.3V533.3M1308.5 530.5V534.1M1309.5 534.1V543.7M1310.5 542.2V545.7M1311.5 537.7V542.2M1312.5 538.1V540.9M1313.5 540.9V549.1M1314.5 549.1V566.5M1315.5 550.6V566.5M1316.5 550.6V552.7M1317.5 551.7V553.8M1318.5 540.2V551.7M1319.5 537.6V540.2M1320.5 537.9V552.9M1321.5 552.9V570.9M1322.5 535.7V553.5M1323.5 531.6V535.7M1324.5 531.6V537.2M1325.5 537.2V545.0M1326.5 544.5V548.5M1327.5 548.5V563.9M1328.5 551.5V564.4M1329.5 541.0V551.5M1330.5 541.2V560.4M1331.5 559.3V578.3M1332.5 544.7V559.3M1333.5 537.8V544.7M1334.5 537.6V539.8M1335.5 539.8V547.1M1336.5 547.1V555.9M1337.5 540.9V555.9M1338.5 537.8V541.1M1339.5 537.8V547.1M1340.5 546.9V547.9M1341.5 546.8V547.8M1342.5 544.0V548.3M1343.5 542.5V544.0M1344.5 543.7V552.0M1345.5 548.1V552.0M1346.5 547.7V553.7M1347.5 553.7V563.3M1348.5 545.1V559.0M1349.5 542.0V545.1M1350.5 542.9V548.1M1351.5 544.3V548.1M1352.5 542.6V544.8M1353.5 541.2V542.6M1354.5 538.1V542.7M1355.5 528.9V538.1M1356.5 526.7V528.9M1357.5 526.8V534.0M1358.5 534.0V543.1M1359.5 538.4V544.6M1360.5 534.4V538.4M1361.5 530.4V534.4M1362.5 530.8V541.3M1363.5 541.3V550.7M1364.5 536.7V550.6M1365.5 528.8V536.7M1366.5 528.2V529.2M1367.5 528.7V532.3M1368.5 530.2V534.3M1369.5 534.3V544.8M1370.5 540.7V544.8M1371.5 537.0V540.7M1372.5 537.0V547.9M1373.5 547.9V549.7M1374.5 544.0V549.1M1375.5 544.3V550.5M1376.5 544.9V550.1M1377.5 547.3V552.1M1378.5 538.3V550.5M1379.5 531.8V538.3M1380.5 531.8V542.3M1381.5 538.4V542.3M1382.5 539.4V547.8M1383.5 547.8V548.8M1384.5 547.6V548.6M1385.5 545.5V548.9M1386.5 540.9V546.1M1387.5 537.3V540.9M1388.5 537.0V541.4M1389.5 541.4V548.5M1390.5 546.3V549.8M1391.5 535.2V546.3M1392.5 535.2V536.3M1393.5 535.3V537.1M1394.5 533.2V537.1M1395.5 530.5V533.2M1396.5 531.7V540.7M1397.5 540.1V541.7M1398.5 541.5V543.9M1399.5 537.9V541.9M1400.5 541.8V545.9M1401.5 540.7V545.1M1402.5 540.7V545.2M1403.5 544.3V545.3M1404.5 542.0V545.1M1405.5 543.0V555.1M1406.5 555.1V568.4M1407.5 542.7V563.3M1408.5 532.7V542.7M1409.5 532.7V539.5M1410.5 539.5V547.8M1411.5 537.7V546.9M1412.5 537.7V543.0M1413.5 541.0V545.2M1414.5 545.2V548.1M1415.5 542.0V547.4M1416.5 542.0V545.9M1417.5 538.7V545.9M1418.5 532.9V538.7M1419.5 530.6V532.9M1420.5 531.8V535.9M1421.5 535.9V539.2M1422.5 539.2V548.5M1423.5 548.5V553.8M1424.5 540.3V552.8M1425.5 536.6V540.3M1426.5 536.6V538.2M1427.5 533.7V537.5M1428.5 534.4V543.9M1429.5 543.9V567.8M1430.5 558.4V578.6M1431.5 542.1V558.4M1432.5 542.1V544.1M1433.5 540.1V544.1M1434.5 540.1V544.3M1435.5 541.6V544.3M1436.5 536.0V541.6M1437.5 536.0V547.4M1438.5 547.4V558.2M1439.5 542.6V553.8M1440.5 542.6V553.5M1441.5 553.5V560.2M1442.5 548.8V559.3M1443.5 539.7V548.8M1444.5 539.7V542.1M1445.5 542.1V546.2M1446.5 545.9V546.9M1447.5 543.3V546.5M1448.5 542.2V543.3M1449.5 542.8V544.1M1450.5 541.3V543.0M1451.5 543.0V552.5M1452.5 551.1V554.1M1453.5 546.8V551.1M1454.5 538.8V546.8M1455.5 538.8V543.6M1456.5 543.6V550.0M1457.5 549.1V550.1M1458.5 549.7V557.8M1459.5 543.4V557.8M1460.5 537.3V543.4M1461.5 537.6V550.7M1462.5 541.2V552.5M1463.5 537.3V541.2M1464.5 537.8V550.7M1465.5 545.6V553.0M1466.5 545.6V548.2M1467.5 544.3V549.3M1468.5 539.3V544.3M1469.5 538.6V542.0M1470.5 542.0V548.6M1471.5 546.8V548.6M1472.5 544.6V548.1M1473.5 535.4V544.6M1474.5 528.3V535.4M1475.5 528.3V532.8M1476.5 532.0V540.6M1477.5 540.6V558.3M1478.5 558.3V559.5M1479.5 549.5V558.9M1480.5 549.4V550.8M1481.5 546.5V550.8M1482.5 537.6V546.5M1483.5 536.2V537.6M1484.5 536.4V537.4M1485.5 536.7V539.5M1486.5 539.5V547.5M1487.5 547.5V548.9M1488.5 547.5V551.4M1489.5 547.5V550.2M1490.5 550.0V552.2M1491.5 540.3V550.0M1492.5 540.3V544.3M1493.5 544.3V546.4M1494.5 543.0V546.4M1495.5 542.2V543.2M1496.5 539.2V542.5M1497.5 537.6V539.2M1498.5 537.9V544.2M1499.5 540.2V544.8M1500.5 534.8V540.2M1501.5 534.8V541.5M1502.5 541.5V553.7M1503.5 541.8V553.7M1504.5 541.0V542.0M1505.5 538.0V541.6M1506.5 538.3V541.6M1507.5 540.6V541.7M1508.5 537.7V540.6M1509.5 538.8V547.7M1510.5 547.7V553.9M1511.5 544.1V549.4M1512.5 544.9V548.2M1513.5 531.4V544.9M1514.5 531.3V532.4M1515.5 527.7V531.8M1516.5 531.8V545.7M1517.5 545.7V552.9M1518.5 547.8V555.1M1519.5 537.4V547.8M1520.5 530.5V537.4M1521.5 530.2V531.5M1522.5 531.5V535.7M1523.5 535.7V540.5M1524.5 540.5V546.9M1525.5 546.3V548.2M1526.5 543.2V546.3M1527.5 535.4V543.2M1528.5 530.4V535.4M1529.5 530.1V534.2M1530.5 534.2V540.6M1531.5 540.6V547.6M1532.5 547.6V552.2M1533.5 537.1V547.6M1534.5 537.1V542.3M1535.5 542.3V560.4M1536.5 553.5V574.6M1537.5 539.6V553.5M1538.5 539.6V559.5M1539.5 557.9V567.8M1540.5 552.4V557.9M1541.5 541.2V552.4M1542.5 531.0V541.2M1543.5 531.0V533.8M1544.5 531.6V534.2M1545.5 534.2V544.1M1546.5 544.1V560.2M1547.5 554.8V563.0M1548.5 553.2V556.6M1549.5 555.0V565.8M1550.5 562.6V575.3M1551.5 541.7V562.6M1552.5 540.1V541.7M1553.5 539.8V541.4M1554.5 540.5V543.0M1555.5 534.3V540.5M1556.5 534.3V538.5M1557.5 537.8V538.8M1558.5 537.5V538.5M1559.5 537.6V539.4M1560.5 536.8V539.4M1561.5 536.7V538.0M1562.5 536.7V539.9M1563.5 535.1V539.9M1564.5 536.5V543.8M1565.5 543.8V551.2M1566.5 551.2V569.4M1567.5 559.2V575.0M1568.5 541.0V559.2M1569.5 535.8V541.0M1570.5 534.6V537.3M1571.5 536.9V539.5M1572.5 530.1V536.9M1573.5 530.6V546.2M1574.5 535.0V546.2M1575.5 529.3V535.0M1576.5 529.6V537.8M1577.5 537.8V554.7M1578.5 554.7V558.3M1579.5 552.8V558.3M1580.5 547.9V552.8M1581.5 545.9V547.9M1582.5 544.4V547.9M1583.5 542.2V544.4M1584.5 542.3V553.4M1585.5 553.4V566.5M1586.5 556.6V566.5M1587.5 550.3V556.6M1588.5 543.7V550.3M1589.5 543.7V548.3M1590.5 548.3V550.7M1591.5 550.7V559.6M1592.5 553.3V559.6M1593.5 546.2V553.3M1594.5 542.7V546.2M1595.5 542.7V544.7M1596.5 538.4V543.3M1597.5 538.9V556.5M1598.5 556.5V571.0M1599.5 557.2V564.9M1600.5 557.4V565.4M1601.5 535.5V557.4M1602.5 529.6V535.5M1603.5 529.6V542.7M1604.5 542.7V556.5M1605.5 550.6V556.5M1606.5 546.9V550.7M1607.5 544.6V546.9M1608.5 545.4V546.5M1609.5 543.6V546.5M1610.5 538.5V543.6M1611.5 534.7V538.5M1612.5 534.7V538.0M1613.5 537.6V542.3M1614.5 542.3V551.3M1615.5 547.8V551.3M1616.5 535.6V547.8M1617.5 534.2V535.6M1618.5 532.4V536.8M1619.5 528.0V532.4M1620.5 528.0V530.6M1621.5 530.4V532.6M1622.5 530.7V537.4M1623.5 537.4V555.2M1624.5 554.5V557.5M1625.5 545.1V554.5M1626.5 538.3V545.1M1627.5 538.3V541.8M1628.5 541.8V547.4M1629.5 545.2V547.4M1630.5 546.7V551.8M1631.5 543.2V551.8M1632.5 538.8V543.2M1633.5 540.7V548.8M1634.5 548.2V549.3M1635.5 547.4V548.4M1636.5 548.4V550.8M1637.5 544.9V550.5M1638.5 544.5V547.8M1639.5 547.8V567.2M1640.5 547.3V567.2M1641.5 534.6V547.3M1642.5 530.2V534.6M1643.5 530.8V536.4M1644.5 536.4V546.6M1645.5 546.6V554.1M1646.5 540.6V551.9M1647.5 535.8V540.6M1648.5 533.0V535.8M1649.5 535.0V548.3M1650.5 548.3V559.2M1651.5 556.2V561.4M1652.5 546.0V556.2M1653.5 541.1V546.1M1654.5 534.4V541.1M1655.5 534.4V542.0M1656.5 542.0V554.1M1657.5 554.1V564.7M1658.5 540.9V556.7M1659.5 538.8V540.9M1660.5 540.5V552.7M1661.5 552.4V554.8M1662.5 552.4V560.9M1663.5 560.9V567.1M1664.5 544.7V563.5M1665.5 541.0V544.7M1666.5 541.2V548.5M1667.5 547.5V561.4M1668.5 552.3V566.1M1669.5 547.0V552.3M1670.5 546.2V555.5M1671.5 555.5V577.5M1672.5 553.4V577.5M1673.5 543.8V553.4M1674.5 543.8V547.4M1675.5 541.4V547.6M1676.5 540.7V542.3M1677.5 542.3V544.6M1678.5 540.2V543.4M1679.5 541.4V554.6M1680.5 541.5V555.0M1681.5 535.7V541.5M1682.5 535.7V542.8M1683.5 542.8V545.0M1684.5 542.9V546.5M1685.5 533.8V542.9M1686.5 533.8V537.6M1687.5 537.6V541.0M1688.5 539.0V541.1M1689.5 540.1V542.5M1690.5 542.5V551.4M1691.5 551.4V553.9M1692.5 548.2V552.8M1693.5 546.7V549.9M1694.5 538.6V546.7M1695.5 525.7V538.6M1696.5 510.7V525.7M1697.5 510.0V515.0M1698.5 515.0V530.3M1699.5 530.3V535.5M1700.5 535.5V537.4M1701.5 535.3V540.0M1702.5 538.7V542.1M1703.5 537.0V538.7M1704.5 538.4V552.7M1705.5 551.1V554.9M1706.5 544.7V551.1M1707.5 541.9V544.7M1708.5 539.9V541.9M1709.5 540.7V547.2M1710.5 547.2V553.1M1711.5 543.6V550.6M1712.5 543.3V547.3M1713.5 547.3V550.3M1714.5 546.5V552.0M1715.5 545.7V546.8M1716.5 539.7V545.7M1717.5 542.2V550.0M1718.5 550.0V553.3M1719.5 552.6V554.0M1720.5 545.8V554.0M1721.5 541.3V546.6M1722.5 539.2V542.1M1723.5 542.1V560.2M1724.5 548.8V560.2M1725.5 542.7V548.8M1726.5 540.1V542.7M1727.5 540.1V541.1M1728.5 540.3V544.8M1729.5 544.0V547.9M1730.5 547.9V552.8M1731.5 552.8V565.4M1732.5 544.3V562.7M1733.5 533.6V544.3M1734.5 533.6V535.7M1735.5 534.9V538.2M1736.5 538.2V544.6M1737.5 544.6V555.0M1738.5 555.0V570.9M1739.5 551.4V570.9M1740.5 543.4V551.4M1741.5 543.4V545.1M1742.5 545.1V559.3M1743.5 558.5V571.8M1744.5 544.2V558.5M1745.5 544.2V551.8M1746.5 543.1V551.8M1747.5 541.6V544.5M1748.5 544.1V583.0M1749.5 539.3V583.0M1750.5 527.6V539.3" fill="none" stroke="#10b896" stroke-width="1"/>
</g>
<rect x="3" y="235" width="1748" height="2" fill="#5a5a5a"/>
<rect x="3" y="415" width="1748" height="2" fill="#5a5a5a"/>
<clipPath id="cpall"><rect x="3" y="57" width="1748" height="540"/></clipPath><g clip-path="url(#cpall)">
<text x="463.0" y="86.5" font-size="13" fill="#1a1a1a">608 kHz</text>
<text x="463.0" y="100.5" font-size="13" fill="#1a1a1a">-84.9 dBm</text>
<rect x="441" y="75.5" width="63" height="28" fill="#ffffff"/>
<text x="443.0" y="86.5" font-size="13" fill="#f0303a">567 kHz</text>
<text x="443.0" y="100.5" font-size="13" fill="#f0303a">-76.9 dBm</text>
<rect x="527" y="73" width="70" height="30" fill="#fff"/>
<text x="532.0" y="86.5" font-size="13" fill="#1a1a1a">669 kHz</text>
<text x="532.0" y="100.5" font-size="13" fill="#1a1a1a">-84.9 dBm</text>
<text x="642.0" y="86.5" font-size="13" fill="#1a1a1a">795 kHz</text>
<text x="642.0" y="100.5" font-size="13" fill="#1a1a1a">-84.9 dBm</text>
<text x="824.0" y="86.5" font-size="13" fill="#1a1a1a">1.004 MHz</text>
<text x="824.0" y="100.5" font-size="13" fill="#1a1a1a">-85.4 dBm</text>
<text x="1701.0" y="86.5" font-size="13" fill="#1a1a1a">2.007 MHz</text>
<text x="1701.0" y="100.5" font-size="13" fill="#1a1a1a">-80.0 dBm</text>
<path d="M453.4 57.5H468.6L461 73Z" fill="none" stroke="#000" stroke-width="2" stroke-linejoin="miter"/>
<path d="M521.4 57.5H536.6L529 73Z" fill="none" stroke="#000" stroke-width="2" stroke-linejoin="miter"/>
<path d="M632.4 57.5H647.6L640 73Z" fill="none" stroke="#000" stroke-width="2" stroke-linejoin="miter"/>
<path d="M814.4 57.5H829.6L822 73Z" fill="none" stroke="#000" stroke-width="2" stroke-linejoin="miter"/>
<path d="M1690.4 57.5H1705.6L1698 73Z" fill="none" stroke="#000" stroke-width="2" stroke-linejoin="miter"/>
<path d="M428 57H452L440 81Z" fill="#f0202c"/>
<text x="440.0" y="70.5" font-size="11" fill="#ffffff" text-anchor="middle">R</text>
<text x="25.0" y="266.0" font-size="13" fill="#1a1a1a">89 kHz</text>
<text x="25.0" y="280.0" font-size="13" fill="#1a1a1a">-88.4 dBm</text>
<text x="137.0" y="266.0" font-size="13" fill="#1a1a1a">217 kHz</text>
<text x="137.0" y="280.0" font-size="13" fill="#1a1a1a">-82.3 dBm</text>
<text x="327.5" y="266.0" font-size="13" fill="#f0303a">435 kHz</text>
<text x="327.5" y="280.0" font-size="13" fill="#f0303a">-56.7 dBm</text>
<text x="443.0" y="266.0" font-size="13" fill="#1a1a1a">567 kHz</text>
<text x="443.0" y="280.0" font-size="13" fill="#1a1a1a">-80.5 dBm</text>
<text x="1087.0" y="266.0" font-size="13" fill="#1a1a1a">1.305 MHz</text>
<text x="1087.0" y="280.0" font-size="13" fill="#1a1a1a">-71.7 dBm</text>
<text x="1468.0" y="266.0" font-size="13" fill="#1a1a1a">1.741 MHz</text>
<text x="1468.0" y="280.0" font-size="13" fill="#1a1a1a">-89.3 dBm</text>
<path d="M311.5 237H335.5L323.5 261Z" fill="#f0202c"/>
<text x="323.5" y="250.5" font-size="11" fill="#ffffff" text-anchor="middle">R</text>
<path d="M127.4 237.5H142.6L135 253Z" fill="none" stroke="#000" stroke-width="2" stroke-linejoin="miter"/>
<path d="M432.4 237.5H447.6L440 253Z" fill="none" stroke="#000" stroke-width="2" stroke-linejoin="miter"/>
<path d="M1076.4 237.5H1091.6L1084 253Z" fill="none" stroke="#000" stroke-width="2" stroke-linejoin="miter"/>
<path d="M1457.4 237.5H1472.6L1465 253Z" fill="none" stroke="#000" stroke-width="2" stroke-linejoin="miter"/>
<text x="236.0" y="446.0" font-size="13" fill="#1a1a1a">330 kHz</text>
<text x="236.0" y="460.0" font-size="13" fill="#1a1a1a">-62.8 dBm</text>
<text x="473.5" y="446.0" font-size="13" fill="#1a1a1a">602 kHz</text>
<text x="473.5" y="460.0" font-size="13" fill="#1a1a1a">-61.6 dBm</text>
<rect x="531" y="435" width="64" height="28" fill="#ffffff"/>
<text x="533.0" y="446.0" font-size="13" fill="#f0303a">670 kHz</text>
<text x="533.0" y="460.0" font-size="13" fill="#f0303a">-60.8 dBm</text>
<text x="642.0" y="446.0" font-size="13" fill="#1a1a1a">795 kHz</text>
<text x="642.0" y="460.0" font-size="13" fill="#1a1a1a">-61.6 dBm</text>
<text x="824.0" y="446.0" font-size="13" fill="#1a1a1a">1.004 MHz</text>
<text x="824.0" y="460.0" font-size="13" fill="#1a1a1a">-62.6 dBm</text>
<text x="1701.0" y="446.0" font-size="13" fill="#1a1a1a">2.007 MHz</text>
<text x="1701.0" y="460.0" font-size="13" fill="#1a1a1a">-62.5 dBm</text>
<path d="M225.4 417.5H240.6L233 433Z" fill="none" stroke="#000" stroke-width="2" stroke-linejoin="miter"/>
<path d="M463.4 417.5H478.6L471 433Z" fill="none" stroke="#000" stroke-width="2" stroke-linejoin="miter"/>
<path d="M632.4 417.5H647.6L640 433Z" fill="none" stroke="#000" stroke-width="2" stroke-linejoin="miter"/>
<path d="M814.0 417.5H829.2L821.6 433Z" fill="none" stroke="#000" stroke-width="2" stroke-linejoin="miter"/>
<path d="M1690.4 417.5H1705.6L1698 433Z" fill="none" stroke="#000" stroke-width="2" stroke-linejoin="miter"/>
<path d="M518 417H542L530 441Z" fill="#f0202c"/>
<text x="530.0" y="430.5" font-size="11" fill="#ffffff" text-anchor="middle">R</text>
</g>
<path d="M6.5 57.5H39.5L28.5 68H6.5Z" fill="#fffbe0" stroke="#f4e62c" stroke-width="1.2"/>
<text x="9.0" y="67.0" font-size="11" fill="#efe060" textLength="17.0" lengthAdjust="spacingAndGlyphs">C 1</text>
<rect x="6" y="68" width="22" height="15" fill="#f4e62c"/>
<text x="12.5" y="80.0" font-size="11.5" fill="#000" font-weight="bold">N</text>
<path d="M6.5 237.5H39.5L28.5 248H6.5Z" fill="#e0f8fa" stroke="#22c4d6" stroke-width="1.2"/>
<text x="9.0" y="247.0" font-size="11" fill="#50cde0" textLength="17.0" lengthAdjust="spacingAndGlyphs">C 2</text>
<rect x="6" y="248" width="22" height="15" fill="#22c4d6"/>
<text x="12.5" y="260.0" font-size="11.5" fill="#000" font-weight="bold">N</text>
<path d="M14.4 237.5H29.6L22 253Z" fill="none" stroke="#000" stroke-width="2" stroke-linejoin="miter"/>
<path d="M6.5 417.5H39.5L28.5 428H6.5Z" fill="#e0faf2" stroke="#14c8a0" stroke-width="1.2"/>
<text x="9.0" y="427.0" font-size="11" fill="#40d0b0" textLength="17.0" lengthAdjust="spacingAndGlyphs">C 8</text>
<rect x="6" y="428" width="22" height="15" fill="#14c8a0"/>
<text x="12.5" y="440.0" font-size="11.5" fill="#000" font-weight="bold">N</text>
<line x1="3" y1="57.5" x2="1751" y2="57.5" stroke="#2a2a2a" stroke-width="1" stroke-dasharray="1 33.96"/>
<line x1="3" y1="75.5" x2="1751" y2="75.5" stroke="#2a2a2a" stroke-width="1" stroke-dasharray="1 33.96"/>
<line x1="3" y1="93.5" x2="1751" y2="93.5" stroke="#2a2a2a" stroke-width="1" stroke-dasharray="1 33.96"/>
<line x1="3" y1="111.5" x2="1751" y2="111.5" stroke="#2a2a2a" stroke-width="1" stroke-dasharray="1 33.96"/>
<line x1="3" y1="129.5" x2="1751" y2="129.5" stroke="#2a2a2a" stroke-width="1" stroke-dasharray="1 33.96"/>
<line x1="3" y1="146.5" x2="1751" y2="146.5" stroke="#2a2a2a" stroke-width="1" stroke-dasharray="1 33.96"/>
<line x1="3" y1="164.5" x2="1751" y2="164.5" stroke="#2a2a2a" stroke-width="1" stroke-dasharray="1 33.96"/>
<line x1="3" y1="182.5" x2="1751" y2="182.5" stroke="#2a2a2a" stroke-width="1" stroke-dasharray="1 33.96"/>
<line x1="3" y1="200.5" x2="1751" y2="200.5" stroke="#2a2a2a" stroke-width="1" stroke-dasharray="1 33.96"/>
<line x1="3" y1="218.5" x2="1751" y2="218.5" stroke="#2a2a2a" stroke-width="1" stroke-dasharray="1 33.96"/>
<line x1="3.5" y1="57" x2="3.5" y2="235" stroke="#2a2a2a" stroke-width="1" stroke-dasharray="1 2.6"/>
<line x1="178.5" y1="57" x2="178.5" y2="235" stroke="#2a2a2a" stroke-width="1" stroke-dasharray="1 2.6"/>
<line x1="353.5" y1="57" x2="353.5" y2="235" stroke="#2a2a2a" stroke-width="1" stroke-dasharray="1 2.6"/>
<line x1="527.5" y1="57" x2="527.5" y2="235" stroke="#2a2a2a" stroke-width="1" stroke-dasharray="1 2.6"/>
<line x1="702.5" y1="57" x2="702.5" y2="235" stroke="#2a2a2a" stroke-width="1" stroke-dasharray="1 2.6"/>
<line x1="877.5" y1="57" x2="877.5" y2="235" stroke="#2a2a2a" stroke-width="1" stroke-dasharray="1 2.6"/>
<line x1="1052.5" y1="57" x2="1052.5" y2="235" stroke="#2a2a2a" stroke-width="1" stroke-dasharray="1 2.6"/>
<line x1="1227.5" y1="57" x2="1227.5" y2="235" stroke="#2a2a2a" stroke-width="1" stroke-dasharray="1 2.6"/>
<line x1="1401.5" y1="57" x2="1401.5" y2="235" stroke="#2a2a2a" stroke-width="1" stroke-dasharray="1 2.6"/>
<line x1="1576.5" y1="57" x2="1576.5" y2="235" stroke="#2a2a2a" stroke-width="1" stroke-dasharray="1 2.6"/>
<line x1="3" y1="237.5" x2="1751" y2="237.5" stroke="#2a2a2a" stroke-width="1" stroke-dasharray="1 33.96"/>
<line x1="3" y1="255.5" x2="1751" y2="255.5" stroke="#2a2a2a" stroke-width="1" stroke-dasharray="1 33.96"/>
<line x1="3" y1="273.5" x2="1751" y2="273.5" stroke="#2a2a2a" stroke-width="1" stroke-dasharray="1 33.96"/>
<line x1="3" y1="291.5" x2="1751" y2="291.5" stroke="#2a2a2a" stroke-width="1" stroke-dasharray="1 33.96"/>
<line x1="3" y1="309.5" x2="1751" y2="309.5" stroke="#2a2a2a" stroke-width="1" stroke-dasharray="1 33.96"/>
<line x1="3" y1="326.5" x2="1751" y2="326.5" stroke="#2a2a2a" stroke-width="1" stroke-dasharray="1 33.96"/>
<line x1="3" y1="344.5" x2="1751" y2="344.5" stroke="#2a2a2a" stroke-width="1" stroke-dasharray="1 33.96"/>
<line x1="3" y1="362.5" x2="1751" y2="362.5" stroke="#2a2a2a" stroke-width="1" stroke-dasharray="1 33.96"/>
<line x1="3" y1="380.5" x2="1751" y2="380.5" stroke="#2a2a2a" stroke-width="1" stroke-dasharray="1 33.96"/>
<line x1="3" y1="398.5" x2="1751" y2="398.5" stroke="#2a2a2a" stroke-width="1" stroke-dasharray="1 33.96"/>
<line x1="3.5" y1="237" x2="3.5" y2="415" stroke="#2a2a2a" stroke-width="1" stroke-dasharray="1 2.6"/>
<line x1="178.5" y1="237" x2="178.5" y2="415" stroke="#2a2a2a" stroke-width="1" stroke-dasharray="1 2.6"/>
<line x1="353.5" y1="237" x2="353.5" y2="415" stroke="#2a2a2a" stroke-width="1" stroke-dasharray="1 2.6"/>
<line x1="527.5" y1="237" x2="527.5" y2="415" stroke="#2a2a2a" stroke-width="1" stroke-dasharray="1 2.6"/>
<line x1="702.5" y1="237" x2="702.5" y2="415" stroke="#2a2a2a" stroke-width="1" stroke-dasharray="1 2.6"/>
<line x1="877.5" y1="237" x2="877.5" y2="415" stroke="#2a2a2a" stroke-width="1" stroke-dasharray="1 2.6"/>
<line x1="1052.5" y1="237" x2="1052.5" y2="415" stroke="#2a2a2a" stroke-width="1" stroke-dasharray="1 2.6"/>
<line x1="1227.5" y1="237" x2="1227.5" y2="415" stroke="#2a2a2a" stroke-width="1" stroke-dasharray="1 2.6"/>
<line x1="1401.5" y1="237" x2="1401.5" y2="415" stroke="#2a2a2a" stroke-width="1" stroke-dasharray="1 2.6"/>
<line x1="1576.5" y1="237" x2="1576.5" y2="415" stroke="#2a2a2a" stroke-width="1" stroke-dasharray="1 2.6"/>
<line x1="3" y1="417.5" x2="1751" y2="417.5" stroke="#2a2a2a" stroke-width="1" stroke-dasharray="1 33.96"/>
<line x1="3" y1="435.5" x2="1751" y2="435.5" stroke="#2a2a2a" stroke-width="1" stroke-dasharray="1 33.96"/>
<line x1="3" y1="453.5" x2="1751" y2="453.5" stroke="#2a2a2a" stroke-width="1" stroke-dasharray="1 33.96"/>
<line x1="3" y1="471.5" x2="1751" y2="471.5" stroke="#2a2a2a" stroke-width="1" stroke-dasharray="1 33.96"/>
<line x1="3" y1="489.5" x2="1751" y2="489.5" stroke="#2a2a2a" stroke-width="1" stroke-dasharray="1 33.96"/>
<line x1="3" y1="506.5" x2="1751" y2="506.5" stroke="#2a2a2a" stroke-width="1" stroke-dasharray="1 33.96"/>
<line x1="3" y1="524.5" x2="1751" y2="524.5" stroke="#2a2a2a" stroke-width="1" stroke-dasharray="1 33.96"/>
<line x1="3" y1="542.5" x2="1751" y2="542.5" stroke="#2a2a2a" stroke-width="1" stroke-dasharray="1 33.96"/>
<line x1="3" y1="560.5" x2="1751" y2="560.5" stroke="#2a2a2a" stroke-width="1" stroke-dasharray="1 33.96"/>
<line x1="3" y1="578.5" x2="1751" y2="578.5" stroke="#2a2a2a" stroke-width="1" stroke-dasharray="1 33.96"/>
<line x1="3.5" y1="417" x2="3.5" y2="595" stroke="#2a2a2a" stroke-width="1" stroke-dasharray="1 2.6"/>
<line x1="178.5" y1="417" x2="178.5" y2="595" stroke="#2a2a2a" stroke-width="1" stroke-dasharray="1 2.6"/>
<line x1="353.5" y1="417" x2="353.5" y2="595" stroke="#2a2a2a" stroke-width="1" stroke-dasharray="1 2.6"/>
<line x1="527.5" y1="417" x2="527.5" y2="595" stroke="#2a2a2a" stroke-width="1" stroke-dasharray="1 2.6"/>
<line x1="702.5" y1="417" x2="702.5" y2="595" stroke="#2a2a2a" stroke-width="1" stroke-dasharray="1 2.6"/>
<line x1="877.5" y1="417" x2="877.5" y2="595" stroke="#2a2a2a" stroke-width="1" stroke-dasharray="1 2.6"/>
<line x1="1052.5" y1="417" x2="1052.5" y2="595" stroke="#2a2a2a" stroke-width="1" stroke-dasharray="1 2.6"/>
<line x1="1227.5" y1="417" x2="1227.5" y2="595" stroke="#2a2a2a" stroke-width="1" stroke-dasharray="1 2.6"/>
<line x1="1401.5" y1="417" x2="1401.5" y2="595" stroke="#2a2a2a" stroke-width="1" stroke-dasharray="1 2.6"/>
<line x1="1576.5" y1="417" x2="1576.5" y2="595" stroke="#2a2a2a" stroke-width="1" stroke-dasharray="1 2.6"/>
<text x="1746.0" y="78.3" font-size="13" fill="#111111" font-weight="bold" text-anchor="end" stroke="#000" stroke-opacity="0.35" stroke-width="0.8" paint-order="stroke">-40 dBm</text>
<text x="1746.0" y="96.3" font-size="13" fill="#111111" font-weight="bold" text-anchor="end" stroke="#000" stroke-opacity="0.35" stroke-width="0.8" paint-order="stroke">-50 dBm</text>
<text x="1746.0" y="114.3" font-size="13" fill="#111111" font-weight="bold" text-anchor="end" stroke="#000" stroke-opacity="0.35" stroke-width="0.8" paint-order="stroke">-60 dBm</text>
<text x="1746.0" y="132.3" font-size="13" fill="#111111" font-weight="bold" text-anchor="end" stroke="#000" stroke-opacity="0.35" stroke-width="0.8" paint-order="stroke">-70 dBm</text>
<text x="1746.0" y="150.3" font-size="13" fill="#111111" font-weight="bold" text-anchor="end" stroke="#000" stroke-opacity="0.35" stroke-width="0.8" paint-order="stroke">-80 dBm</text>
<text x="1746.0" y="168.3" font-size="13" fill="#111111" font-weight="bold" text-anchor="end" stroke="#000" stroke-opacity="0.35" stroke-width="0.8" paint-order="stroke">-90 dBm</text>
<text x="1746.0" y="186.3" font-size="13" fill="#111111" font-weight="bold" text-anchor="end" stroke="#000" stroke-opacity="0.35" stroke-width="0.8" paint-order="stroke">-100 dBm</text>
<text x="1746.0" y="204.3" font-size="13" fill="#111111" font-weight="bold" text-anchor="end" stroke="#000" stroke-opacity="0.35" stroke-width="0.8" paint-order="stroke">-110 dBm</text>
<text x="1746.0" y="258.3" font-size="13" fill="#7a0c0c" font-weight="bold" text-anchor="end" stroke="#000" stroke-opacity="0.35" stroke-width="0.8" paint-order="stroke">-40 dBm</text>
<text x="1746.0" y="276.3" font-size="13" fill="#7a0c0c" font-weight="bold" text-anchor="end" stroke="#000" stroke-opacity="0.35" stroke-width="0.8" paint-order="stroke">-50 dBm</text>
<text x="1746.0" y="294.3" font-size="13" fill="#7a0c0c" font-weight="bold" text-anchor="end" stroke="#000" stroke-opacity="0.35" stroke-width="0.8" paint-order="stroke">-60 dBm</text>
<text x="1746.0" y="312.3" font-size="13" fill="#7a0c0c" font-weight="bold" text-anchor="end" stroke="#000" stroke-opacity="0.35" stroke-width="0.8" paint-order="stroke">-70 dBm</text>
<text x="1746.0" y="330.3" font-size="13" fill="#7a0c0c" font-weight="bold" text-anchor="end" stroke="#000" stroke-opacity="0.35" stroke-width="0.8" paint-order="stroke">-80 dBm</text>
<text x="1746.0" y="348.3" font-size="13" fill="#7a0c0c" font-weight="bold" text-anchor="end" stroke="#000" stroke-opacity="0.35" stroke-width="0.8" paint-order="stroke">-90 dBm</text>
<text x="1746.0" y="366.3" font-size="13" fill="#7a0c0c" font-weight="bold" text-anchor="end" stroke="#000" stroke-opacity="0.35" stroke-width="0.8" paint-order="stroke">-100 dBm</text>
<text x="1746.0" y="384.3" font-size="13" fill="#7a0c0c" font-weight="bold" text-anchor="end" stroke="#000" stroke-opacity="0.35" stroke-width="0.8" paint-order="stroke">-110 dBm</text>
<text x="1746.0" y="438.3" font-size="13" fill="#0c7456" font-weight="bold" text-anchor="end" stroke="#000" stroke-opacity="0.35" stroke-width="0.8" paint-order="stroke">-20 dBm</text>
<text x="1746.0" y="456.3" font-size="13" fill="#0c7456" font-weight="bold" text-anchor="end" stroke="#000" stroke-opacity="0.35" stroke-width="0.8" paint-order="stroke">-30 dBm</text>
<text x="1746.0" y="474.3" font-size="13" fill="#0c7456" font-weight="bold" text-anchor="end" stroke="#000" stroke-opacity="0.35" stroke-width="0.8" paint-order="stroke">-40 dBm</text>
<text x="1746.0" y="492.3" font-size="13" fill="#0c7456" font-weight="bold" text-anchor="end" stroke="#000" stroke-opacity="0.35" stroke-width="0.8" paint-order="stroke">-50 dBm</text>
<text x="1746.0" y="510.3" font-size="13" fill="#0c7456" font-weight="bold" text-anchor="end" stroke="#000" stroke-opacity="0.35" stroke-width="0.8" paint-order="stroke">-60 dBm</text>
<text x="1746.0" y="528.3" font-size="13" fill="#0c7456" font-weight="bold" text-anchor="end" stroke="#000" stroke-opacity="0.35" stroke-width="0.8" paint-order="stroke">-70 dBm</text>
<text x="1746.0" y="546.3" font-size="13" fill="#0c7456" font-weight="bold" text-anchor="end" stroke="#000" stroke-opacity="0.35" stroke-width="0.8" paint-order="stroke">-80 dBm</text>
<text x="1746.0" y="564.3" font-size="13" fill="#0c7456" font-weight="bold" text-anchor="end" stroke="#000" stroke-opacity="0.35" stroke-width="0.8" paint-order="stroke">-90 dBm</text>
<text x="32.5" y="230.4" font-size="12" fill="#222" font-weight="bold" textLength="52.5" lengthAdjust="spacingAndGlyphs" stroke="#000" stroke-opacity="0.3" stroke-width="0.6" paint-order="stroke">68.0 kHz</text>
<text x="1679.0" y="229.3" font-size="12" fill="#222" font-weight="bold" textLength="47.8" lengthAdjust="spacingAndGlyphs" stroke="#000" stroke-opacity="0.3" stroke-width="0.6" paint-order="stroke">2.1 MHz</text>
<text x="32.5" y="410.4" font-size="12" fill="#6a1010" font-weight="bold" textLength="52.5" lengthAdjust="spacingAndGlyphs" stroke="#000" stroke-opacity="0.3" stroke-width="0.6" paint-order="stroke">68.0 kHz</text>
<text x="1679.0" y="409.3" font-size="12" fill="#6a1010" font-weight="bold" textLength="47.8" lengthAdjust="spacingAndGlyphs" stroke="#000" stroke-opacity="0.3" stroke-width="0.6" paint-order="stroke">2.1 MHz</text>
<text x="32.5" y="590.4" font-size="12" fill="#0e6a50" font-weight="bold" textLength="52.5" lengthAdjust="spacingAndGlyphs" stroke="#000" stroke-opacity="0.3" stroke-width="0.6" paint-order="stroke">68.0 kHz</text>
<text x="1679.0" y="589.3" font-size="12" fill="#0e6a50" font-weight="bold" textLength="47.8" lengthAdjust="spacingAndGlyphs" stroke="#000" stroke-opacity="0.3" stroke-width="0.6" paint-order="stroke">2.1 MHz</text>
<rect x="0" y="601" width="1754" height="395" fill="#e4e4e8"/>
<rect x="3" y="604" width="1748" height="25" fill="#333333"/>
<text x="16.7" y="622.0" font-size="16.5" fill="#e6e6e6" textLength="125.0" lengthAdjust="spacingAndGlyphs">Waveform View</text>
<path d="M593 608.5H586.5V624.5H593M1160 608.5H1166.5V624.5H1160" fill="none" stroke="#d0d0d0" stroke-width="1.5"/>
<rect x="587" y="616.3" width="579" height="1.5" fill="#bcbcbc"/>
<line x1="703" y1="606" x2="703" y2="628" stroke="#c8c8c8" stroke-width="2" stroke-dasharray="3.5 2.5"/>
<line x1="1054" y1="606" x2="1054" y2="628" stroke="#c8c8c8" stroke-width="2" stroke-dasharray="3.5 2.5"/>
<path d="M789 605H802L795.5 610.5Z" fill="#f0901e"/>
<path d="M789.5 612.5H801.5V624H797.5L795.5 628L793.5 624H789.5Z" fill="#000" stroke="#f0901e" stroke-width="1.5"/>
<text x="795.5" y="622.5" font-size="10" fill="#f0901e" font-weight="bold" text-anchor="middle">T</text>
<rect x="3" y="629" width="1748" height="364" fill="#ffffff"/>
<clipPath id="cpw"><rect x="3" y="629" width="1748" height="364"/></clipPath>
<line x1="3" y1="634.5" x2="1751" y2="634.5" stroke="#2a2a2a" stroke-width="1" stroke-dasharray="1 33.96"/>
<line x1="3" y1="670.5" x2="1751" y2="670.5" stroke="#2a2a2a" stroke-width="1" stroke-dasharray="1 33.96"/>
<line x1="3" y1="707.5" x2="1751" y2="707.5" stroke="#2a2a2a" stroke-width="1" stroke-dasharray="1 33.96"/>
<line x1="3" y1="743.5" x2="1751" y2="743.5" stroke="#2a2a2a" stroke-width="1" stroke-dasharray="1 33.96"/>
<line x1="3" y1="779.5" x2="1751" y2="779.5" stroke="#2a2a2a" stroke-width="1" stroke-dasharray="1 33.96"/>
<line x1="3" y1="816.5" x2="1751" y2="816.5" stroke="#2a2a2a" stroke-width="1" stroke-dasharray="1 33.96"/>
<line x1="3" y1="852.5" x2="1751" y2="852.5" stroke="#2a2a2a" stroke-width="1" stroke-dasharray="1 33.96"/>
<line x1="3" y1="889.5" x2="1751" y2="889.5" stroke="#2a2a2a" stroke-width="1" stroke-dasharray="1 33.96"/>
<line x1="3" y1="925.5" x2="1751" y2="925.5" stroke="#2a2a2a" stroke-width="1" stroke-dasharray="1 33.96"/>
<line x1="3" y1="961.5" x2="1751" y2="961.5" stroke="#2a2a2a" stroke-width="1" stroke-dasharray="1 33.96"/>
<line x1="108.5" y1="629" x2="108.5" y2="993" stroke="#2a2a2a" stroke-width="1" stroke-dasharray="1 6.28" stroke-dashoffset="-5"/>
<line x1="283.5" y1="629" x2="283.5" y2="993" stroke="#2a2a2a" stroke-width="1" stroke-dasharray="1 6.28" stroke-dashoffset="-5"/>
<line x1="458.5" y1="629" x2="458.5" y2="993" stroke="#2a2a2a" stroke-width="1" stroke-dasharray="1 6.28" stroke-dashoffset="-5"/>
<line x1="807.5" y1="629" x2="807.5" y2="993" stroke="#2a2a2a" stroke-width="1" stroke-dasharray="1 6.28" stroke-dashoffset="-5"/>
<line x1="982.5" y1="629" x2="982.5" y2="993" stroke="#2a2a2a" stroke-width="1" stroke-dasharray="1 6.28" stroke-dashoffset="-5"/>
<line x1="1157.5" y1="629" x2="1157.5" y2="993" stroke="#2a2a2a" stroke-width="1" stroke-dasharray="1 6.28" stroke-dashoffset="-5"/>
<line x1="1332.5" y1="629" x2="1332.5" y2="993" stroke="#2a2a2a" stroke-width="1" stroke-dasharray="1 6.28" stroke-dashoffset="-5"/>
<line x1="1506.5" y1="629" x2="1506.5" y2="993" stroke="#2a2a2a" stroke-width="1" stroke-dasharray="1 6.28" stroke-dashoffset="-5"/>
<line x1="1681.5" y1="629" x2="1681.5" y2="993" stroke="#2a2a2a" stroke-width="1" stroke-dasharray="1 6.28" stroke-dashoffset="-5"/>
<line x1="3" y1="816.5" x2="1724" y2="816.5" stroke="#444" stroke-width="1" stroke-dasharray="5 5" stroke-dashoffset="-3"/>
<line x1="632.5" y1="629" x2="632.5" y2="993" stroke="#444" stroke-width="1" stroke-dasharray="5 5" stroke-dashoffset="-5"/>
<g clip-path="url(#cpw)">
<path d="M3.5 866.0V873.2M4.5 866.1V891.1M5.5 879.4V885.4M6.5 871.4V879.9M7.5 864.8V871.4M8.5 864.6V888.2M9.5 877.4V883.7M10.5 870.8V877.4M11.5 866.4V873.2M12.5 865.9V890.1M13.5 877.2V885.5M14.5 872.4V879.4M15.5 867.7V873.8M16.5 867.6V891.4M17.5 879.1V886.8M18.5 873.8V880.3M19.5 865.8V874.0M20.5 864.5V888.9M21.5 877.6V885.3M22.5 872.3V877.7M23.5 864.2V872.3M24.5 864.2V889.1M25.5 878.5V885.1M26.5 871.0V878.5M27.5 871.0V877.0M28.5 871.5V893.0M29.5 883.0V889.7M30.5 878.1V883.6M31.5 867.8V878.1M32.5 866.0V891.1M33.5 879.2V886.5M34.5 873.7V880.0M35.5 865.2V873.7M36.5 863.9V887.2M37.5 876.8V883.1M38.5 870.9V878.4M39.5 865.4V871.3M40.5 863.3V887.5M41.5 876.6V885.2M42.5 870.6V877.6M43.5 866.9V872.1M44.5 864.6V888.9M45.5 877.9V884.7M46.5 872.2V879.4M47.5 865.0V874.2M48.5 863.1V887.2M49.5 876.8V883.5M50.5 871.4V877.4M51.5 867.0V873.2M52.5 865.7V889.3M53.5 877.9V885.4M54.5 872.0V878.5M55.5 861.9V872.0M56.5 859.7V883.1M57.5 873.8V879.3M58.5 867.1V874.7M59.5 866.1V871.8M60.5 863.7V887.1M61.5 877.3V884.2M62.5 872.4V878.8M63.5 866.9V872.5M64.5 864.6V888.5M65.5 878.8V885.3M66.5 872.1V879.2M67.5 868.3V873.8M68.5 866.1V889.6M69.5 880.7V886.4M70.5 873.6V880.7M71.5 863.4V873.6M72.5 863.4V885.1M73.5 876.0V883.3M74.5 870.2V876.2M75.5 861.7V870.7M76.5 860.6V885.9M77.5 876.0V884.4M78.5 870.1V876.3M79.5 863.6V870.1M80.5 861.6V886.4M81.5 875.2V882.5M82.5 870.3V876.3M83.5 868.7V873.5M84.5 866.1V888.9M85.5 879.9V887.4M86.5 874.9V879.9M87.5 859.9V874.9M88.5 858.1V881.7M89.5 873.4V879.3M90.5 867.4V874.0M91.5 865.0V870.5M92.5 863.1V885.6M93.5 877.0V883.6M94.5 871.4V877.8M95.5 863.4V871.9M96.5 859.9V884.8M97.5 875.3V880.9M98.5 869.8V876.8M99.5 863.3V870.8M100.5 860.8V885.0M101.5 875.7V881.4M102.5 868.9V876.0M103.5 863.4V868.9M104.5 859.1V882.9M105.5 873.8V880.4M106.5 867.7V874.7M107.5 863.5V870.8M108.5 859.9V883.3M109.5 875.5V882.1M110.5 869.3V876.3M111.5 863.1V872.1M112.5 860.9V885.6M113.5 877.1V881.7M114.5 871.3V877.2M115.5 863.6V871.3M116.5 859.6V882.1M117.5 875.6V881.4M118.5 867.0V876.2M119.5 862.1V868.7M120.5 858.6V881.9M121.5 874.9V881.8M122.5 868.7V874.9M123.5 865.7V871.0M124.5 860.5V883.8M125.5 875.8V883.2M126.5 870.7V876.8M127.5 860.7V870.7M128.5 856.7V881.3M129.5 872.2V880.8M130.5 865.4V872.6M131.5 862.0V869.6M132.5 858.0V882.7M133.5 875.8V882.1M134.5 869.0V875.8M135.5 862.1V871.8M136.5 857.8V881.6M137.5 873.7V881.5M138.5 868.0V875.2M139.5 860.3V868.0M140.5 857.0V879.9M141.5 872.5V878.0M142.5 867.2V872.5M143.5 861.1V867.4M144.5 857.2V880.6M145.5 873.5V879.2M146.5 867.1V873.5M147.5 860.7V867.1M148.5 856.2V879.6M149.5 873.1V879.2M150.5 867.1V873.3M151.5 863.3V868.5M152.5 858.9V883.2M153.5 875.6V881.6M154.5 866.7V876.3M155.5 856.1V866.7M156.5 850.6V875.2M157.5 867.0V874.4M158.5 862.7V868.4M159.5 861.4V867.0M160.5 855.0V879.1M161.5 871.0V879.1M162.5 867.2V873.6M163.5 857.4V868.4M164.5 852.2V876.0M165.5 869.5V876.0M166.5 863.4V869.6M167.5 862.6V867.4M168.5 858.3V879.1M169.5 873.4V879.8M170.5 868.3V874.3M171.5 861.8V868.3M172.5 855.5V878.9M173.5 873.7V878.9M174.5 866.6V873.7M175.5 859.9V867.3M176.5 854.0V878.4M177.5 873.2V879.0M178.5 866.6V873.2M179.5 859.9V867.4M180.5 854.5V879.3M181.5 873.5V879.3M182.5 866.9V874.8M183.5 856.5V866.9M184.5 852.1V857.1M185.5 852.1V874.4M186.5 863.1V870.0M187.5 859.7V865.7M188.5 852.8V859.7M189.5 852.8V877.1M190.5 864.7V871.8M191.5 856.8V864.7M192.5 851.4V857.5M193.5 851.4V874.9M194.5 862.8V870.0M195.5 856.0V863.1M196.5 849.4V856.0M197.5 849.4V873.5M198.5 862.2V867.8M199.5 857.5V863.8M200.5 852.3V858.3M201.5 852.3V876.3M202.5 864.2V869.7M203.5 857.1V864.2M204.5 849.9V857.8M205.5 849.1V872.6M206.5 862.1V868.6M207.5 856.7V863.4M208.5 850.3V856.9M209.5 849.7V873.6M210.5 861.5V868.2M211.5 857.0V864.0M212.5 850.8V857.0M213.5 850.0V875.4M214.5 863.6V870.7M215.5 856.5V863.6M216.5 849.2V856.5M217.5 848.9V872.4M218.5 860.8V868.6M219.5 854.8V862.3M220.5 849.4V855.8M221.5 849.0V873.7M222.5 861.2V867.6M223.5 855.4V862.1M224.5 849.0V855.7M225.5 848.8V871.0M226.5 860.2V867.7M227.5 858.2V863.7M228.5 851.4V858.5M229.5 850.2V874.8M230.5 864.3V870.6M231.5 855.5V864.9M232.5 848.5V856.7M233.5 848.4V872.4M234.5 861.1V867.2M235.5 857.0V861.1M236.5 851.2V857.0M237.5 848.7V871.5M238.5 862.1V867.9M239.5 856.7V863.1M240.5 851.0V856.7M241.5 849.8V873.6M242.5 863.9V869.1M243.5 857.9V865.8M244.5 852.0V857.9M245.5 849.7V874.8M246.5 863.4V870.5M247.5 854.4V864.6M248.5 848.8V854.4M249.5 845.6V871.1M250.5 859.8V866.9M251.5 851.4V859.8M252.5 845.6V852.0M253.5 844.2V868.4M254.5 855.8V864.4M255.5 855.8V863.6M256.5 852.1V858.1M257.5 849.2V873.9M258.5 864.0V870.0M259.5 856.3V864.0M260.5 850.4V856.3M261.5 847.8V870.8M262.5 861.3V867.7M263.5 853.9V861.3M264.5 847.3V856.9M265.5 845.5V868.5M266.5 859.5V865.3M267.5 855.6V861.1M268.5 848.7V856.0M269.5 847.0V870.5M270.5 861.9V867.0M271.5 851.4V862.2M272.5 844.3V851.6M273.5 842.9V865.7M274.5 856.5V862.6M275.5 850.1V856.5M276.5 844.8V850.1M277.5 842.6V866.3M278.5 856.0V863.1M279.5 854.0V859.6M280.5 847.0V854.4M281.5 844.7V869.6M282.5 859.2V864.7M283.5 853.0V859.3M284.5 845.7V853.0M285.5 843.1V867.8M286.5 857.6V864.5M287.5 851.6V858.1M288.5 845.4V851.6M289.5 842.7V866.6M290.5 857.1V863.7M291.5 853.0V859.5M292.5 847.8V853.7M293.5 844.5V868.6M294.5 860.2V865.8M295.5 850.3V860.2M296.5 845.2V850.7M297.5 841.1V866.2M298.5 855.0V862.5M299.5 851.0V858.0M300.5 843.6V851.0M301.5 840.2V866.3M302.5 856.8V862.9M303.5 850.9V856.8M304.5 845.9V851.9M305.5 841.0V865.2M306.5 858.1V863.0M307.5 852.5V859.3M308.5 847.2V853.4M309.5 842.6V866.9M310.5 857.5V865.7M311.5 848.4V857.5M312.5 841.3V848.4M313.5 838.6V861.1M314.5 854.2V860.3M315.5 853.7V859.1M316.5 846.7V853.7M317.5 842.4V866.0M318.5 858.0V865.2M319.5 850.4V858.0M320.5 844.0V851.5M321.5 841.0V864.3M322.5 855.8V864.1M323.5 849.5V858.0M324.5 843.5V849.5M325.5 839.4V862.2M326.5 855.8V861.9M327.5 851.3V857.3M328.5 846.3V852.0M329.5 842.7V864.4M330.5 858.1V864.1M331.5 849.8V858.1M332.5 843.1V849.8M333.5 839.8V862.0M334.5 855.3V861.4M335.5 847.3V855.3M336.5 841.3V848.4M337.5 836.9V860.8M338.5 853.2V859.3M339.5 848.9V855.2M340.5 841.8V848.9M341.5 838.9V862.3M342.5 854.9V861.7M343.5 849.1V855.2M344.5 842.8V849.1M345.5 839.0V861.9M346.5 854.6V860.8M347.5 850.4V856.1M348.5 844.5V851.3M349.5 839.9V864.5M350.5 856.8V862.5M351.5 847.8V856.8M352.5 843.1V848.3M353.5 837.6V861.9M354.5 854.3V861.0M355.5 846.8V854.9M356.5 840.4V847.3M357.5 835.9V858.3M358.5 851.2V858.8M359.5 843.9V851.2M360.5 835.5V844.6M361.5 831.9V856.7M362.5 850.0V856.7M363.5 845.1V851.1M364.5 839.2V845.1M365.5 832.6V857.1M366.5 850.4V857.1M367.5 842.5V850.4M368.5 835.9V842.6M369.5 831.6V854.1M370.5 847.4V854.4M371.5 847.2V853.1M372.5 841.6V848.3M373.5 837.0V859.6M374.5 852.2V859.6M375.5 841.6V852.2M376.5 836.5V842.1M377.5 831.9V854.4M378.5 849.1V854.4M379.5 840.1V849.5M380.5 834.1V840.1M381.5 828.1V851.1M382.5 846.1V851.1M383.5 845.0V851.2M384.5 839.1V845.6M385.5 832.7V839.1M386.5 832.7V857.4M387.5 837.7V850.6M388.5 835.0V839.4M389.5 828.2V835.1M390.5 828.2V851.8M391.5 843.0V848.6M392.5 836.6V843.3M393.5 829.8V837.7M394.5 829.8V854.9M395.5 840.9V847.7M396.5 833.9V840.9M397.5 828.8V835.2M398.5 829.5V851.8M399.5 845.0V850.1M400.5 837.8V845.0M401.5 831.5V838.7M402.5 831.5V856.1M403.5 842.3V849.8M404.5 836.6V843.2M405.5 831.2V836.7M406.5 830.5V853.7M407.5 840.7V847.9M408.5 834.1V840.7M409.5 829.5V835.6M410.5 827.9V850.7M411.5 842.5V848.0M412.5 836.2V843.9M413.5 830.5V836.2M414.5 830.3V853.8M415.5 840.0V848.6M416.5 835.6V840.8M417.5 828.3V835.6M418.5 827.7V851.7M419.5 839.7V847.0M420.5 833.7V840.3M421.5 828.0V833.7M422.5 826.1V850.3M423.5 838.3V846.0M424.5 832.3V838.3M425.5 825.3V832.9M426.5 825.3V847.8M427.5 839.4V845.3M428.5 833.2V839.6M429.5 825.9V833.2M430.5 824.6V849.2M431.5 835.5V844.0M432.5 832.2V838.3M433.5 826.5V833.3M434.5 825.5V848.3M435.5 841.4V849.0M436.5 835.9V841.4M437.5 828.7V835.9M438.5 828.7V852.6M439.5 839.4V846.7M440.5 831.6V839.4M441.5 827.3V833.7M442.5 824.9V849.4M443.5 839.6V846.0M444.5 834.2V840.2M445.5 828.1V834.2M446.5 827.1V850.2M447.5 836.3V847.3M448.5 829.6V836.3M449.5 823.9V829.9M450.5 821.9V846.1M451.5 839.2V843.3M452.5 832.2V839.2M453.5 826.6V832.2M454.5 825.2V848.0M455.5 839.1V844.6M456.5 832.4V839.8M457.5 827.4V832.4M458.5 825.1V849.1M459.5 835.3V844.2M460.5 830.1V837.8M461.5 824.6V830.1M462.5 822.7V845.5M463.5 834.1V844.2M464.5 826.9V835.0M465.5 821.8V827.9M466.5 820.2V842.4M467.5 833.0V839.0M468.5 827.0V833.2M469.5 821.1V827.1M470.5 819.0V840.9M471.5 836.3V842.6M472.5 831.3V838.0M473.5 825.6V831.7M474.5 823.1V847.1M475.5 831.9V844.3M476.5 825.3V833.5M477.5 821.0V826.0M478.5 818.5V841.9M479.5 837.5V843.0M480.5 831.5V837.5M481.5 825.3V832.6M482.5 823.0V845.9M483.5 828.0V843.7M484.5 822.7V829.1M485.5 816.0V822.7M486.5 813.0V837.4M487.5 832.8V838.1M488.5 826.9V834.0M489.5 820.7V827.8M490.5 817.2V841.0M491.5 832.0V840.1M492.5 827.1V833.1M493.5 820.0V828.2M494.5 818.2V841.4M495.5 832.9V838.1M496.5 826.2V832.9M497.5 819.3V826.2M498.5 818.1V839.8M499.5 833.4V838.2M500.5 827.1V833.4M501.5 820.8V827.1M502.5 817.8V841.1M503.5 832.6V839.5M504.5 826.4V832.9M505.5 820.9V826.4M506.5 818.0V841.8M507.5 835.6V840.3M508.5 828.7V835.8M509.5 822.0V828.7M510.5 819.3V843.1M511.5 833.5V840.8M512.5 827.2V834.2M513.5 821.4V827.9M514.5 819.1V842.5M515.5 831.5V840.3M516.5 825.1V831.5M517.5 818.6V825.1M518.5 815.3V838.0M519.5 830.0V837.5M520.5 823.5V830.6M521.5 818.1V823.6M522.5 814.1V838.0M523.5 828.4V835.9M524.5 822.1V829.3M525.5 817.4V822.7M526.5 811.5V835.7M527.5 830.3V836.1M528.5 822.5V830.3M529.5 817.3V822.7M530.5 813.0V837.6M531.5 828.7V836.6M532.5 824.9V830.1M533.5 819.0V824.9M534.5 815.0V837.8M535.5 830.1V837.8M536.5 823.3V832.4M537.5 818.3V824.5M538.5 814.4V837.3M539.5 824.7V836.7M540.5 818.0V825.2M541.5 812.3V818.3M542.5 809.0V831.7M543.5 830.3V838.2M544.5 826.0V832.0M545.5 819.0V827.4M546.5 814.3V838.4M547.5 829.0V837.2M548.5 821.8V829.2M549.5 815.6V821.8M550.5 810.5V833.0M551.5 829.1V834.2M552.5 822.9V829.1M553.5 816.1V822.9M554.5 811.4V835.8M555.5 824.7V834.6M556.5 819.2V826.4M557.5 812.6V819.2M558.5 807.2V830.9M559.5 823.8V830.9M560.5 816.3V824.5M561.5 811.0V817.0M562.5 806.5V829.1M563.5 825.1V831.5M564.5 818.8V825.2M565.5 812.1V819.1M566.5 807.7V830.9M567.5 821.8V830.9M568.5 815.9V823.1M569.5 811.4V816.2M570.5 803.6V829.0M571.5 827.2V832.0M572.5 820.6V827.2M573.5 814.8V821.9M574.5 809.0V832.1M575.5 819.5V832.1M576.5 812.1V820.0M577.5 807.1V813.2M578.5 800.9V826.3M579.5 822.3V829.8M580.5 816.9V823.9M581.5 811.7V816.9M582.5 806.8V829.4M583.5 822.5V829.4M584.5 817.5V822.5M585.5 812.0V818.3M586.5 805.7V812.2M587.5 805.7V831.4M588.5 818.4V825.2M589.5 814.1V819.7M590.5 807.1V814.5M591.5 807.1V826.9M592.5 816.6V822.4M593.5 810.2V816.6M594.5 804.4V810.6M595.5 804.9V831.9M596.5 819.6V825.0M597.5 812.9V820.1M598.5 806.9V813.7M599.5 806.9V826.6M600.5 814.4V821.3M601.5 808.5V814.4M602.5 802.0V810.0M603.5 802.0V825.8M604.5 814.6V820.2M605.5 807.8V814.6M606.5 802.2V809.5M607.5 803.4V829.4M608.5 817.6V823.6M609.5 811.3V818.7M610.5 805.3V811.3M611.5 802.9V825.1M612.5 813.8V820.4M613.5 807.8V814.0M614.5 802.2V808.4M615.5 802.2V832.1M616.5 820.5V826.8M617.5 814.4V820.5M618.5 808.3V814.4M619.5 803.5V828.1M620.5 815.0V822.8M621.5 809.2V816.0M622.5 803.5V809.2M623.5 800.7V823.5M624.5 811.8V818.2M625.5 804.7V811.8M626.5 800.2V806.3M627.5 801.2V825.3M628.5 814.2V820.0M629.5 808.0V814.4M630.5 801.8V808.9M631.5 798.3V821.0M632.5 809.4V816.9M633.5 803.5V810.4M634.5 798.9V804.9M635.5 796.3V820.0M636.5 807.8V816.3M637.5 802.8V809.6M638.5 797.1V803.4M639.5 797.3V820.7M640.5 809.6V817.2M641.5 804.9V809.6M642.5 799.1V804.9M643.5 799.6V825.1M644.5 814.5V820.1M645.5 808.3V814.6M646.5 802.4V808.6M647.5 798.0V821.3M648.5 810.8V817.5M649.5 804.9V811.3M650.5 799.0V806.2M651.5 797.0V821.3M652.5 811.7V817.7M653.5 804.4V811.7M654.5 799.2V805.9M655.5 796.4V819.6M656.5 810.4V817.6M657.5 804.3V810.4M658.5 798.9V804.3M659.5 794.4V817.5M660.5 808.0V814.3M661.5 802.4V808.3M662.5 795.3V802.4M663.5 793.5V817.8M664.5 806.4V812.7M665.5 801.9V806.4M666.5 795.2V802.0M667.5 792.6V815.7M668.5 805.1V812.9M669.5 799.9V806.2M670.5 793.3V799.9M671.5 791.5V814.6M672.5 805.1V811.7M673.5 798.2V805.1M674.5 793.2V799.1M675.5 791.9V817.1M676.5 808.3V813.1M677.5 801.0V808.3M678.5 794.2V801.0M679.5 792.6V816.5M680.5 806.3V813.2M681.5 800.1V807.0M682.5 794.4V800.8M683.5 792.1V815.5M684.5 807.3V812.6M685.5 799.4V807.4M686.5 794.5V799.5M687.5 788.1V812.4M688.5 802.8V808.6M689.5 796.2V802.8M690.5 790.1V796.8M691.5 790.4V813.2M692.5 805.6V811.5M693.5 798.8V805.9M694.5 792.9V799.6M695.5 790.2V815.2M696.5 805.5V812.1M697.5 798.1V805.5M698.5 793.6V799.1M699.5 789.8V813.4M700.5 804.7V812.6M701.5 798.4V805.1M702.5 793.0V798.5M703.5 791.5V815.0M704.5 806.2V813.1M705.5 800.5V806.2M706.5 793.6V801.5M707.5 789.5V812.5M708.5 804.6V810.7M709.5 799.1V804.6M710.5 793.3V799.3M711.5 789.4V812.6M712.5 804.9V811.0M713.5 797.9V805.3M714.5 793.0V798.4M715.5 789.4V812.9M716.5 804.5V811.4M717.5 799.1V804.8M718.5 791.9V799.1M719.5 788.3V812.5M720.5 804.0V811.1M721.5 798.3V804.0M722.5 792.5V798.4M723.5 788.9V812.3M724.5 803.7V810.0M725.5 796.4V803.7M726.5 792.2V796.8M727.5 787.2V810.9M728.5 804.3V809.2M729.5 797.8V804.3M730.5 791.1V797.8M731.5 778.8V805.3M732.5 795.8V802.9M733.5 791.1V796.4M734.5 785.3V791.1M735.5 785.5V807.8M736.5 801.2V805.9M737.5 795.0V801.4M738.5 789.0V795.0M739.5 786.2V808.5M740.5 800.4V807.3M741.5 793.6V800.7M742.5 789.1V794.9M743.5 785.9V808.1M744.5 801.3V807.5M745.5 796.3V802.0M746.5 789.7V796.3M747.5 784.6V809.4M748.5 801.9V807.9M749.5 796.4V803.0M750.5 790.7V797.0M751.5 780.2V804.1M752.5 797.6V805.0M753.5 791.2V798.2M754.5 785.9V791.3M755.5 780.8V804.9M756.5 797.0V804.9M757.5 791.7V798.7M758.5 784.8V791.7M759.5 781.6V806.3M760.5 798.4V806.4M761.5 792.8V800.3M762.5 787.4V792.8M763.5 782.8V805.4M764.5 797.6V804.9M765.5 791.8V797.9M766.5 786.2V792.7M767.5 784.6V809.3M768.5 803.1V809.3M769.5 796.2V803.1M770.5 790.8V796.2M771.5 781.1V804.0M772.5 798.0V804.0M773.5 792.3V798.8M774.5 785.2V792.7M775.5 778.4V802.5M776.5 795.0V802.5M777.5 791.1V795.4M778.5 783.1V791.4M779.5 778.0V801.3M780.5 793.9V801.3M781.5 790.0V793.9M782.5 782.7V790.0M783.5 778.7V801.4M784.5 795.8V801.7M785.5 789.9V795.8M786.5 782.8V790.4M787.5 777.2V783.8M788.5 777.6V801.2M789.5 789.4V795.6M790.5 782.4V789.4M791.5 775.9V782.7M792.5 775.9V798.6M793.5 787.3V792.9M794.5 782.0V787.3M795.5 774.5V783.1M796.5 774.5V799.2M797.5 789.1V794.9M798.5 783.3V789.8M799.5 774.2V783.3M800.5 774.2V796.9M801.5 785.8V791.3M802.5 778.8V786.9M803.5 778.8V785.0M804.5 780.6V802.5M805.5 790.0V796.5M806.5 784.7V790.0M807.5 777.3V784.8M808.5 777.3V801.4M809.5 789.2V797.1M810.5 784.7V790.8M811.5 773.7V784.9M812.5 773.7V796.7M813.5 786.1V793.7M814.5 780.0V786.1M815.5 774.8V780.0M816.5 772.7V797.0M817.5 786.3V792.3M818.5 781.2V786.3M819.5 771.6V782.2M820.5 771.6V795.7M821.5 783.9V790.3M822.5 777.4V783.9M823.5 775.8V780.9M824.5 775.5V797.8M825.5 787.2V793.3M826.5 781.1V789.0M827.5 774.4V781.2M828.5 773.5V795.8M829.5 785.2V792.3M830.5 780.2V785.9M831.5 771.7V780.7M832.5 769.9V792.9M833.5 783.4V789.2M834.5 777.4V783.8M835.5 776.0V781.2M836.5 772.8V796.7M837.5 786.9V792.0M838.5 781.7V787.3M839.5 774.4V781.9M840.5 773.2V797.6M841.5 784.9V792.9M842.5 780.0V785.4M843.5 772.0V780.2M844.5 769.6V795.4M845.5 784.4V789.8M846.5 777.4V784.4M847.5 772.2V777.6M848.5 770.8V793.4M849.5 783.5V789.3M850.5 778.1V784.1M851.5 772.2V778.8M852.5 771.0V794.7M853.5 783.1V790.3M854.5 778.3V784.1M855.5 769.6V778.3M856.5 767.6V790.9M857.5 781.1V786.6M858.5 774.9V781.9M859.5 772.0V779.0M860.5 769.8V793.2M861.5 783.1V790.2M862.5 776.8V783.8M863.5 770.6V776.8M864.5 768.4V791.2M865.5 781.4V789.3M866.5 774.8V782.9M867.5 771.7V777.5M868.5 768.2V792.7M869.5 783.4V789.8M870.5 778.2V784.5M871.5 768.7V778.3M872.5 765.5V789.5M873.5 779.9V787.0M874.5 775.5V779.9M875.5 768.6V776.1M876.5 766.6V790.1M877.5 780.5V787.6M878.5 774.1V781.3M879.5 769.3V774.1M880.5 766.6V789.9M881.5 780.4V785.9M882.5 774.9V780.4M883.5 773.9V780.7M884.5 772.4V795.2M885.5 785.7V792.0M886.5 780.1V785.7M887.5 766.6V780.3M888.5 762.6V786.5M889.5 778.1V785.0M890.5 771.9V778.8M891.5 769.8V774.9M892.5 765.3V789.2M893.5 780.6V787.9M894.5 773.5V780.8M895.5 768.0V774.2M896.5 765.2V787.0M897.5 778.0V783.3M898.5 773.2V779.4M899.5 764.8V773.2M900.5 762.0V784.9M901.5 776.7V782.5M902.5 770.3V776.7M903.5 763.0V770.3M904.5 759.6V781.9M905.5 774.3V780.9M906.5 769.2V774.4M907.5 764.9V770.9M908.5 761.2V785.4M909.5 775.5V783.9M910.5 771.1V777.8M911.5 765.3V771.4M912.5 762.8V786.0M913.5 778.3V783.8M914.5 771.4V779.8M915.5 766.3V771.4M916.5 761.6V785.6M917.5 776.4V783.6M918.5 770.8V776.9M919.5 762.4V770.8M920.5 759.8V782.0M921.5 774.4V780.4M922.5 768.6V775.4M923.5 763.5V770.1M924.5 759.0V784.8M925.5 775.7V781.7M926.5 768.2V775.7M927.5 765.5V771.8M928.5 761.2V785.0M929.5 778.1V783.9M930.5 772.4V778.9M931.5 762.3V773.0M932.5 756.6V781.0M933.5 772.9V779.7M934.5 766.6V772.9M935.5 760.3V767.0M936.5 755.7V778.9M937.5 772.1V778.0M938.5 765.4V773.2M939.5 759.0V766.2M940.5 754.9V778.7M941.5 770.5V777.3M942.5 764.6V770.5M943.5 764.8V769.9M944.5 760.1V783.5M945.5 775.6V780.8M946.5 770.0V775.6M947.5 763.4V770.9M948.5 758.4V781.3M949.5 775.4V781.7M950.5 769.2V775.4M951.5 765.1V771.4M952.5 759.0V783.4M953.5 776.6V783.2M954.5 769.7V777.2M955.5 760.8V770.3M956.5 756.6V780.4M957.5 773.3V779.1M958.5 767.3V773.4M959.5 760.3V769.3M960.5 756.0V776.8M961.5 771.1V776.9M962.5 765.7V771.1M963.5 761.7V766.5M964.5 755.3V780.9M965.5 772.0V779.3M966.5 765.8V772.2M967.5 762.0V767.8M968.5 755.8V779.2M969.5 772.4V779.2M970.5 767.9V773.5M971.5 759.3V768.3M972.5 753.8V776.5M973.5 771.3V776.5M974.5 764.4V772.1M975.5 761.1V767.2M976.5 757.2V777.9M977.5 773.4V778.5M978.5 767.5V773.4M979.5 756.2V767.5M980.5 750.2V773.7M981.5 768.2V773.7M982.5 761.2V768.2M983.5 760.4V766.0M984.5 754.7V777.5M985.5 771.6V777.6M986.5 766.1V772.4M987.5 758.2V766.4M988.5 753.6V758.6M989.5 754.0V775.4M990.5 764.3V770.1M991.5 759.0V764.7M992.5 752.6V759.3M993.5 752.6V776.2M994.5 765.9V773.2M995.5 757.6V765.9M996.5 753.0V758.5M997.5 753.0V775.7M998.5 764.8V770.2M999.5 761.7V766.0M1000.5 756.1V761.9M1001.5 756.1V778.3M1002.5 766.2V773.0M1003.5 760.0V766.2M1004.5 753.0V760.6M1005.5 753.8V776.4M1006.5 764.8V770.9M1007.5 757.6V765.7M1008.5 750.5V757.6M1009.5 750.5V773.8M1010.5 762.6V768.0M1011.5 759.5V765.0M1012.5 753.5V761.2M1013.5 753.3V776.7M1014.5 766.1V770.8M1015.5 756.1V766.1M1016.5 749.7V756.9M1017.5 749.6V773.7M1018.5 761.7V768.1M1019.5 757.2V765.3M1020.5 751.2V758.0M1021.5 751.2V774.2M1022.5 763.4V770.0M1023.5 755.5V763.4M1024.5 750.6V755.7M1025.5 751.5V773.2M1026.5 762.3V768.9M1027.5 754.8V762.3M1028.5 751.0V756.4M1029.5 749.0V771.9M1030.5 762.4V767.9M1031.5 755.9V762.6M1032.5 752.3V757.8M1033.5 752.2V775.0M1034.5 762.7V770.0M1035.5 756.6V762.7M1036.5 750.5V756.6M1037.5 748.7V771.9M1038.5 761.6V767.1M1039.5 755.7V761.6M1040.5 749.6V755.7M1041.5 747.9V772.8M1042.5 761.6V768.3M1043.5 756.0V763.7M1044.5 751.3V758.0M1045.5 748.8V771.7M1046.5 762.7V768.5M1047.5 755.2V762.7M1048.5 749.6V756.5M1049.5 748.3V771.5M1050.5 760.8V768.0M1051.5 754.1V761.3M1052.5 749.3V755.8M1053.5 747.3V771.5M1054.5 760.7V767.1M1055.5 755.2V760.7M1056.5 748.1V755.2M1057.5 745.7V771.5M1058.5 760.9V766.9M1059.5 757.1V763.6M1060.5 751.8V757.3M1061.5 748.3V772.5M1062.5 762.9V768.1M1063.5 755.8V762.9M1064.5 749.4V755.8M1065.5 747.7V771.5M1066.5 761.9V766.6M1067.5 750.7V762.1M1068.5 744.9V750.8M1069.5 742.3V764.9M1070.5 756.6V762.5M1071.5 754.5V758.8M1072.5 748.7V755.0M1073.5 745.9V768.8M1074.5 759.5V765.1M1075.5 751.8V759.9M1076.5 747.0V752.5M1077.5 744.6V767.2M1078.5 758.9V765.5M1079.5 752.7V759.5M1080.5 746.7V753.3M1081.5 745.0V767.1M1082.5 757.8V763.4M1083.5 752.0V757.8M1084.5 746.5V753.2M1085.5 744.0V766.6M1086.5 756.8V764.7M1087.5 751.7V758.2M1088.5 744.9V751.7M1089.5 742.6V766.3M1090.5 757.4V762.4M1091.5 752.3V759.0M1092.5 747.1V753.2M1093.5 742.7V766.3M1094.5 758.2V764.5M1095.5 752.0V759.2M1096.5 747.1V752.0M1097.5 742.1V766.5M1098.5 758.5V764.6M1099.5 749.9V758.5M1100.5 744.2V749.9M1101.5 741.7V764.2M1102.5 756.1V762.8M1103.5 750.3V757.4M1104.5 743.5V751.2M1105.5 740.9V764.7M1106.5 755.1V760.8M1107.5 750.7V756.7M1108.5 743.6V750.7M1109.5 739.4V763.6M1110.5 755.1V762.3M1111.5 748.6V755.1M1112.5 743.3V750.1M1113.5 740.4V763.1M1114.5 753.7V761.1M1115.5 753.7V758.3M1116.5 747.6V754.8M1117.5 745.6V768.7M1118.5 760.1V766.7M1119.5 749.4V760.1M1120.5 743.2V749.4M1121.5 739.9V764.7M1122.5 755.3V761.2M1123.5 750.1V755.3M1124.5 742.6V750.1M1125.5 739.8V761.7M1126.5 755.0V760.9M1127.5 749.7V756.1M1128.5 743.7V750.3M1129.5 737.8V762.9M1130.5 754.1V761.2M1131.5 746.9V754.3M1132.5 741.0V748.0M1133.5 737.2V760.5M1134.5 751.9V759.3M1135.5 747.7V754.9M1136.5 742.4V748.5M1137.5 737.4V761.6M1138.5 753.4V760.2M1139.5 748.4V755.7M1140.5 743.3V748.9M1141.5 738.2V761.7M1142.5 753.7V760.3M1143.5 747.3V754.0M1144.5 742.3V747.3M1145.5 738.3V761.1M1146.5 753.6V760.5M1147.5 746.3V754.4M1148.5 742.0V747.3M1149.5 736.0V759.2M1150.5 753.3V759.2M1151.5 748.3V755.2M1152.5 742.8V749.4M1153.5 737.5V761.1M1154.5 754.0V760.7M1155.5 746.5V754.0M1156.5 742.3V747.2M1157.5 736.3V760.2M1158.5 752.0V759.4M1159.5 749.2V755.4M1160.5 743.2V749.2M1161.5 737.8V762.2M1162.5 755.4V761.0M1163.5 748.7V756.4M1164.5 742.2V748.7M1165.5 737.9V760.8M1166.5 754.0V760.8M1167.5 748.7V754.6M1168.5 742.7V750.4M1169.5 737.7V759.5M1170.5 754.2V759.5M1171.5 745.8V754.3M1172.5 741.2V748.2M1173.5 736.7V757.8M1174.5 752.4V757.8M1175.5 746.3V753.2M1176.5 742.3V748.3M1177.5 736.5V758.7M1178.5 752.5V759.0M1179.5 743.5V752.5M1180.5 739.7V744.5M1181.5 732.9V757.0M1182.5 749.0V757.0M1183.5 749.0V755.7M1184.5 744.4V749.8M1185.5 738.7V759.8M1186.5 754.4V762.2M1187.5 742.5V754.4M1188.5 737.6V743.0M1189.5 731.7V737.6M1190.5 731.7V755.1M1191.5 744.5V750.0M1192.5 738.0V744.6M1193.5 732.1V738.1M1194.5 732.1V756.4M1195.5 743.8V750.4M1196.5 737.2V743.8M1197.5 731.9V738.4M1198.5 731.9V755.4M1199.5 747.0V752.5M1200.5 741.6V747.7M1201.5 734.1V742.5M1202.5 734.1V758.0M1203.5 747.1V754.3M1204.5 741.6V748.4M1205.5 736.3V741.8M1206.5 736.3V758.8M1207.5 746.0V753.7M1208.5 740.2V746.9M1209.5 735.7V740.7M1210.5 735.1V758.2M1211.5 743.8V753.3M1212.5 738.0V743.8M1213.5 732.5V738.4M1214.5 731.3V754.2M1215.5 745.2V749.6M1216.5 737.8V745.9M1217.5 733.4V738.7M1218.5 731.4V755.8M1219.5 748.0V751.6M1220.5 739.9V748.2M1221.5 734.9V740.3M1222.5 735.0V757.8M1223.5 745.6V753.0M1224.5 738.4V745.6M1225.5 733.0V740.2M1226.5 732.9V755.7M1227.5 743.3V749.9M1228.5 738.4V743.3M1229.5 731.4V738.9M1230.5 729.8V754.3M1231.5 744.9V750.0M1232.5 738.9V744.9M1233.5 732.7V741.2M1234.5 731.6V755.7M1235.5 749.1V753.8M1236.5 743.1V749.1M1237.5 737.5V743.1M1238.5 737.0V759.7M1239.5 747.2V755.2M1240.5 742.0V747.6M1241.5 734.6V742.0M1242.5 733.9V758.0M1243.5 742.6V753.8M1244.5 737.0V742.9M1245.5 732.1V737.6M1246.5 728.9V753.0M1247.5 747.2V752.3M1248.5 740.6V747.2M1249.5 735.1V740.8M1250.5 732.8V756.0M1251.5 744.2V753.2M1252.5 737.7V744.2M1253.5 731.7V738.0M1254.5 730.2V754.5M1255.5 743.4V750.7M1256.5 738.2V743.4M1257.5 730.6V738.2M1258.5 729.9V752.7M1259.5 743.0V748.9M1260.5 737.8V744.3M1261.5 731.8V738.2M1262.5 729.4V753.4M1263.5 744.3V749.7M1264.5 737.0V744.3M1265.5 731.3V738.0M1266.5 730.6V754.0M1267.5 743.3V749.3M1268.5 737.0V744.3M1269.5 732.6V738.0M1270.5 728.9V753.1M1271.5 746.2V751.3M1272.5 740.2V746.2M1273.5 734.2V741.2M1274.5 731.4V754.9M1275.5 746.2V752.6M1276.5 738.0V746.2M1277.5 732.9V738.6M1278.5 730.4V752.9M1279.5 741.8V750.3M1280.5 736.5V742.4M1281.5 730.3V737.4M1282.5 728.4V751.6M1283.5 747.6V753.0M1284.5 741.4V747.6M1285.5 735.6V741.4M1286.5 733.2V756.1M1287.5 740.6V752.6M1288.5 733.8V741.0M1289.5 726.8V734.6M1290.5 725.6V747.7M1291.5 743.6V750.6M1292.5 739.2V744.9M1293.5 732.3V739.2M1294.5 730.5V753.4M1295.5 739.8V751.4M1296.5 733.5V739.8M1297.5 728.5V733.5M1298.5 725.2V749.0M1299.5 739.3V745.4M1300.5 733.0V739.3M1301.5 727.5V733.9M1302.5 725.1V747.4M1303.5 745.1V752.7M1304.5 739.7V747.4M1305.5 734.2V739.7M1306.5 730.7V754.8M1307.5 741.2V750.9M1308.5 735.2V741.4M1309.5 729.9V735.9M1310.5 727.8V749.6M1311.5 742.0V748.6M1312.5 736.8V742.9M1313.5 730.6V736.9M1314.5 726.5V749.9M1315.5 742.0V748.3M1316.5 737.1V742.1M1317.5 730.9V738.7M1318.5 727.3V751.1M1319.5 742.1V748.6M1320.5 736.0V742.1M1321.5 729.8V737.4M1322.5 726.6V749.3M1323.5 743.8V751.2M1324.5 739.0V745.8M1325.5 733.6V739.0M1326.5 729.0V754.3M1327.5 745.3V751.0M1328.5 738.9V746.0M1329.5 733.9V739.0M1330.5 729.1V752.6M1331.5 741.7V751.4M1332.5 736.2V742.9M1333.5 731.5V737.1M1334.5 726.7V750.6M1335.5 740.6V748.0M1336.5 733.3V740.8M1337.5 730.1V735.9M1338.5 724.8V748.1M1339.5 743.3V749.8M1340.5 737.5V743.3M1341.5 732.5V737.5M1342.5 727.9V750.0M1343.5 744.4V750.0M1344.5 738.5V745.7M1345.5 732.6V739.4M1346.5 728.5V752.3M1347.5 742.7V750.4M1348.5 736.9V743.2M1349.5 730.3V737.3M1350.5 725.4V748.7M1351.5 741.7V748.7M1352.5 735.8V742.8M1353.5 731.2V737.1M1354.5 726.5V748.2M1355.5 743.8V748.3M1356.5 736.9V743.8M1357.5 731.2V737.4M1358.5 726.6V748.9M1359.5 741.7V747.9M1360.5 735.2V742.1M1361.5 730.2V735.7M1362.5 725.5V748.0M1363.5 741.3V748.4M1364.5 735.1V741.6M1365.5 729.2V736.5M1366.5 725.4V747.6M1367.5 740.2V747.6M1368.5 735.3V740.3M1369.5 728.2V735.5M1370.5 723.0V744.2M1371.5 743.3V748.2M1372.5 736.8V743.3M1373.5 730.5V738.5M1374.5 726.5V748.9M1375.5 740.0V748.9M1376.5 733.5V740.0M1377.5 728.9V733.5M1378.5 723.7V745.0M1379.5 741.6V749.2M1380.5 736.3V742.4M1381.5 729.5V736.3M1382.5 724.4V748.8M1383.5 744.5V750.1M1384.5 737.6V745.3M1385.5 733.6V738.8M1386.5 727.7V750.8M1387.5 742.3V750.8M1388.5 736.2V742.5M1389.5 730.8V736.9M1390.5 725.7V730.8M1391.5 727.0V748.6M1392.5 736.6V742.2M1393.5 730.7V736.6M1394.5 725.3V730.7M1395.5 725.3V750.8M1396.5 738.6V745.3M1397.5 732.8V741.1M1398.5 727.0V733.6M1399.5 727.0V751.2M1400.5 739.6V745.8M1401.5 734.3V740.3M1402.5 728.6V734.3M1403.5 729.9V747.3M1404.5 734.3V741.6M1405.5 728.6V734.9M1406.5 723.3V729.0M1407.5 725.2V745.3M1408.5 732.9V740.1M1409.5 727.6V732.9M1410.5 720.3V727.6M1411.5 720.3V746.0M1412.5 734.3V742.1M1413.5 729.1V735.1M1414.5 723.6V729.1M1415.5 723.6V747.5M1416.5 734.9V741.7M1417.5 728.6V736.1M1418.5 723.1V729.5M1419.5 723.1V747.6M1420.5 738.0V743.9M1421.5 732.2V738.0M1422.5 726.5V732.2M1423.5 724.9V748.1M1424.5 737.3V743.4M1425.5 730.8V737.4M1426.5 726.3V731.9M1427.5 726.3V749.7M1428.5 738.6V744.7M1429.5 732.1V740.6M1430.5 728.1V733.4M1431.5 721.2V744.1M1432.5 733.2V739.1M1433.5 726.8V733.9M1434.5 721.2V727.5M1435.5 718.8V739.5M1436.5 730.0V737.1M1437.5 723.4V730.0M1438.5 718.6V724.4M1439.5 718.6V742.4M1440.5 732.5V738.3M1441.5 726.9V733.5M1442.5 719.9V726.9M1443.5 719.9V750.4M1444.5 738.4V744.6M1445.5 734.0V739.1M1446.5 727.9V734.0M1447.5 725.4V750.7M1448.5 738.7V744.8M1449.5 732.7V738.7M1450.5 726.4V732.7M1451.5 725.7V749.1M1452.5 738.6V745.0M1453.5 733.2V739.6M1454.5 727.8V733.6M1455.5 725.9V748.6M1456.5 740.8V746.4M1457.5 732.7V740.8M1458.5 726.5V732.7M1459.5 721.7V744.3M1460.5 734.9V741.1M1461.5 729.6V736.2M1462.5 723.6V729.7M1463.5 722.4V748.5M1464.5 736.6V742.3M1465.5 731.1V736.7M1466.5 725.1V731.5M1467.5 722.2V746.0M1468.5 736.5V742.9M1469.5 729.9V736.5M1470.5 722.6V730.7M1471.5 725.2V749.5M1472.5 741.6V747.6M1473.5 736.4V741.6M1474.5 729.4V736.5M1475.5 720.5V744.8M1476.5 735.3V741.6M1477.5 730.8V736.4M1478.5 723.8V730.9M1479.5 722.7V747.8M1480.5 738.0V743.0M1481.5 731.4V738.0M1482.5 726.2V731.5M1483.5 726.3V749.5M1484.5 741.1V746.7M1485.5 735.3V743.1M1486.5 728.6V735.5M1487.5 724.5V747.2M1488.5 738.6V744.8M1489.5 732.8V738.6M1490.5 727.4V732.8M1491.5 723.2V746.9M1492.5 737.8V743.4M1493.5 733.2V738.1M1494.5 726.7V733.2M1495.5 719.6V743.7M1496.5 735.6V742.3M1497.5 730.0V735.9M1498.5 722.3V730.7M1499.5 722.3V747.2M1500.5 738.5V745.6M1501.5 731.4V739.7M1502.5 728.3V733.2M1503.5 722.1V745.8M1504.5 737.5V743.1M1505.5 731.6V737.7M1506.5 725.2V731.6M1507.5 719.5V742.1M1508.5 733.8V739.2M1509.5 727.7V734.2M1510.5 722.9V727.7M1511.5 722.4V744.4M1512.5 737.5V743.2M1513.5 731.4V737.5M1514.5 725.0V731.4M1515.5 720.6V745.0M1516.5 735.8V743.1M1517.5 731.6V736.7M1518.5 725.1V732.1M1519.5 723.0V746.4M1520.5 738.3V744.1M1521.5 733.1V739.0M1522.5 727.6V733.1M1523.5 720.8V744.2M1524.5 734.8V742.1M1525.5 729.0V734.8M1526.5 724.8V729.9M1527.5 723.3V745.9M1528.5 739.0V744.3M1529.5 733.3V739.5M1530.5 726.4V733.3M1531.5 720.0V742.8M1532.5 736.3V742.1M1533.5 730.0V736.3M1534.5 724.2V730.0M1535.5 722.9V746.2M1536.5 737.7V746.2M1537.5 733.4V738.6M1538.5 727.6V733.4M1539.5 724.5V748.6M1540.5 741.5V746.6M1541.5 734.6V741.9M1542.5 728.5V735.1M1543.5 721.9V744.1M1544.5 735.8V743.5M1545.5 732.3V737.3M1546.5 725.8V732.3M1547.5 719.7V742.3M1548.5 736.5V742.6M1549.5 729.1V736.5M1550.5 724.4V730.1M1551.5 720.1V742.7M1552.5 736.7V743.0M1553.5 732.0V736.7M1554.5 725.7V732.0M1555.5 723.7V747.0M1556.5 740.2V746.9M1557.5 734.4V741.5M1558.5 728.0V734.4M1559.5 723.6V746.1M1560.5 739.5V745.7M1561.5 734.9V740.4M1562.5 727.6V735.0M1563.5 722.6V743.7M1564.5 738.0V743.7M1565.5 732.5V738.3M1566.5 726.6V732.5M1567.5 723.4V746.5M1568.5 739.7V746.5M1569.5 731.8V740.3M1570.5 727.5V732.9M1571.5 721.6V743.9M1572.5 739.7V744.1M1573.5 733.0V740.4M1574.5 728.1V735.0M1575.5 721.0V742.5M1576.5 736.6V742.6M1577.5 731.3V736.6M1578.5 724.8V731.3M1579.5 721.0V741.9M1580.5 738.4V744.3M1581.5 731.9V738.4M1582.5 726.1V732.0M1583.5 725.1V745.1M1584.5 738.9V745.8M1585.5 733.9V740.1M1586.5 729.5V734.2M1587.5 720.2V743.5M1588.5 738.4V743.5M1589.5 730.4V739.5M1590.5 725.4V733.0M1591.5 725.0V730.8M1592.5 725.0V748.2M1593.5 736.2V744.4M1594.5 730.8V736.2M1595.5 724.7V731.2M1596.5 724.7V748.0M1597.5 736.4V743.3M1598.5 730.7V736.4M1599.5 723.5V731.7M1600.5 723.5V745.4M1601.5 733.8V741.0M1602.5 728.3V734.2M1603.5 721.1V728.3M1604.5 722.5V743.5M1605.5 732.2V738.4M1606.5 727.7V732.6M1607.5 725.8V729.9M1608.5 725.8V748.4M1609.5 736.8V743.6M1610.5 730.3V737.2M1611.5 721.1V730.3M1612.5 720.3V744.4M1613.5 732.2V739.1M1614.5 727.3V732.2M1615.5 727.6V733.4M1616.5 727.6V750.1M1617.5 740.4V745.4M1618.5 733.5V740.4M1619.5 724.1V733.5M1620.5 724.1V746.7M1621.5 734.7V742.2M1622.5 729.5V736.3M1623.5 726.9V733.8M1624.5 726.9V749.0M1625.5 737.5V745.0M1626.5 732.0V738.2M1627.5 724.3V732.0M1628.5 724.3V746.9M1629.5 736.4V742.4M1630.5 729.9V737.0M1631.5 724.7V729.9M1632.5 722.1V746.6M1633.5 735.9V741.8M1634.5 729.7V735.9M1635.5 729.7V735.0M1636.5 728.5V750.8M1637.5 741.0V747.4M1638.5 734.9V741.0M1639.5 724.7V734.9M1640.5 724.7V748.2M1641.5 737.9V743.3M1642.5 732.1V737.9M1643.5 726.1V732.1M1644.5 724.0V746.6M1645.5 737.6V743.4M1646.5 731.0V737.6M1647.5 727.4V733.8M1648.5 726.3V748.2M1649.5 739.1V744.1M1650.5 733.2V739.4M1651.5 725.4V733.2M1652.5 723.6V746.6M1653.5 737.2V743.1M1654.5 731.0V737.2M1655.5 723.1V731.1M1656.5 721.6V744.2M1657.5 735.3V741.5M1658.5 729.8V735.3M1659.5 728.0V732.6M1660.5 725.8V748.6M1661.5 738.2V744.6M1662.5 732.4V739.4M1663.5 724.9V732.4M1664.5 722.5V745.0M1665.5 737.1V743.2M1666.5 731.2V737.8M1667.5 730.6V736.1M1668.5 727.9V750.4M1669.5 741.2V747.7M1670.5 734.8V741.2M1671.5 726.7V734.8M1672.5 723.6V747.0M1673.5 738.2V743.7M1674.5 732.8V738.2M1675.5 727.5V734.6M1676.5 726.7V749.0M1677.5 740.1V745.8M1678.5 734.9V740.1M1679.5 729.3V735.4M1680.5 726.9V750.3M1681.5 741.6V747.4M1682.5 734.4V742.4M1683.5 726.3V734.4M1684.5 725.0V746.9M1685.5 738.1V744.6M1686.5 733.4V738.3M1687.5 726.2V733.4M1688.5 725.3V747.8M1689.5 739.4V744.6M1690.5 732.9V739.4M1691.5 728.6V734.5M1692.5 726.3V748.8M1693.5 741.0V748.5M1694.5 734.2V741.4M1695.5 730.4V736.0M1696.5 726.4V749.8M1697.5 740.1V746.8M1698.5 735.5V740.6M1699.5 731.5V737.5M1700.5 728.4V750.6M1701.5 743.7V749.0M1702.5 738.1V743.7M1703.5 728.4V738.5M1704.5 725.8V748.7M1705.5 740.7V745.6M1706.5 734.4V741.2M1707.5 729.0V734.4M1708.5 725.6V749.9M1709.5 740.7V746.3M1710.5 734.5V740.7M1711.5 730.0V734.5M1712.5 726.2V749.1M1713.5 741.3V747.7M1714.5 735.7V741.4M1715.5 729.9V735.7M1716.5 726.9V749.4M1717.5 740.8V747.0M1718.5 734.8V740.8M1719.5 730.4V736.2M1720.5 725.8V749.4M1721.5 741.2V748.4M1722.5 736.0V742.6M1723.5 728.9V736.0M1724.5 725.4V748.9M1725.5 740.3V746.7M1726.5 735.6V741.7M1727.5 730.7V738.5M1728.5 728.8V752.0M1729.5 743.6V749.6M1730.5 736.9V743.6M1731.5 732.9V738.2M1732.5 728.7V751.7M1733.5 744.1V749.4M1734.5 738.4V745.7M1735.5 728.7V738.4M1736.5 724.6V747.0M1737.5 740.5V746.1M1738.5 735.3V741.0M1739.5 733.8V739.4M1740.5 727.4V754.0M1741.5 746.0V751.7M1742.5 739.3V746.0M1743.5 735.6V740.4M1744.5 731.4V754.3M1745.5 747.8V753.8M1746.5 743.3V748.1M1747.5 730.6V743.3M1748.5 725.4V749.0M1749.5 741.2V746.4M1750.5 734.6V741.2" fill="none" stroke="#f00000" stroke-width="1.35"/>
<path d="M3.5 929.2V940.8M4.5 929.2V941.2M5.5 932.4V938.1M6.5 928.9V938.4M7.5 923.4V937.5M8.5 923.9V934.9M9.5 924.1V934.3M10.5 923.2V934.3M11.5 928.0V935.6M12.5 921.3V938.1M13.5 926.5V936.3M14.5 927.1V940.8M15.5 930.3V934.8M16.5 922.2V937.9M17.5 930.8V942.5M18.5 920.9V936.7M19.5 927.0V941.2M20.5 929.6V937.7M21.5 927.9V937.4M22.5 926.1V937.4M23.5 924.8V933.0M24.5 924.8V937.2M25.5 927.8V936.3M26.5 923.0V938.2M27.5 927.0V936.7M28.5 922.3V940.1M29.5 928.4V938.9M30.5 927.7V935.0M31.5 925.8V939.5M32.5 932.0V949.8M33.5 929.4V938.5M34.5 924.2V938.5M35.5 924.2V937.8M36.5 927.3V936.9M37.5 925.1V936.9M38.5 922.7V933.5M39.5 925.5V932.6M40.5 925.3V933.2M41.5 928.5V935.3M42.5 919.0V934.6M43.5 925.9V931.8M44.5 926.2V942.9M45.5 924.3V937.4M46.5 925.8V937.4M47.5 923.7V934.4M48.5 923.1V932.0M49.5 922.4V935.8M50.5 922.6V932.8M51.5 924.1V933.8M52.5 915.8V937.5M53.5 921.7V936.0M54.5 921.9V933.4M55.5 921.9V935.2M56.5 922.9V936.2M57.5 923.1V938.0M58.5 924.3V934.7M59.5 923.0V932.1M60.5 923.7V932.4M61.5 919.0V944.6M62.5 920.4V944.6M63.5 929.3V935.7M64.5 923.1V939.2M65.5 924.1V935.2M66.5 927.5V937.6M67.5 924.7V935.0M68.5 920.1V939.9M69.5 922.3V930.2M70.5 921.2V933.7M71.5 924.5V934.6M72.5 926.1V933.2M73.5 922.9V932.4M74.5 924.5V931.6M75.5 921.0V934.1M76.5 922.7V933.4M77.5 922.7V936.6M78.5 923.7V935.9M79.5 923.5V935.7M80.5 925.3V932.6M81.5 923.6V934.8M82.5 924.1V931.6M83.5 921.1V935.8M84.5 921.7V930.2M85.5 922.2V928.1M86.5 923.9V930.9M87.5 920.1V930.2M88.5 919.2V932.5M89.5 919.0V928.8M90.5 918.0V933.2M91.5 918.3V931.5M92.5 920.4V931.5M93.5 918.7V933.7M94.5 913.0V933.1M95.5 918.5V933.1M96.5 918.7V933.8M97.5 917.5V931.0M98.5 918.9V928.1M99.5 916.4V925.8M100.5 918.9V927.7M101.5 916.5V929.3M102.5 915.4V929.3M103.5 916.3V933.1M104.5 916.2V926.0M105.5 916.0V925.9M106.5 913.2V926.5M107.5 918.1V928.5M108.5 916.5V931.0M109.5 920.6V937.5M110.5 918.9V930.1M111.5 914.6V927.5M112.5 916.1V925.5M113.5 916.1V928.3M114.5 913.7V925.9M115.5 917.8V930.7M116.5 917.8V931.1M117.5 915.4V930.9M118.5 915.4V928.8M119.5 916.6V926.7M120.5 918.0V927.7M121.5 920.0V932.1M122.5 914.1V925.9M123.5 916.1V928.1M124.5 916.1V927.9M125.5 916.8V924.3M126.5 917.1V924.3M127.5 916.3V928.4M128.5 914.1V928.1M129.5 912.0V931.1M130.5 914.6V929.1M131.5 913.4V929.1M132.5 910.7V920.5M133.5 907.3V925.0M134.5 912.0V921.1M135.5 913.7V930.3M136.5 913.6V921.5M137.5 912.4V929.1M138.5 912.2V921.2M139.5 908.3V923.5M140.5 912.9V925.7M141.5 910.3V922.4M142.5 909.1V922.4M143.5 914.8V926.3M144.5 915.2V925.4M145.5 917.8V927.0M146.5 913.6V924.9M147.5 913.6V922.3M148.5 913.9V933.3M149.5 913.1V927.5M150.5 913.2V921.2M151.5 915.9V929.2M152.5 915.0V925.1M153.5 916.0V926.8M154.5 911.9V929.8M155.5 912.2V924.7M156.5 906.8V926.2M157.5 906.8V927.1M158.5 909.7V923.1M159.5 907.9V923.1M160.5 908.3V919.8M161.5 908.0V918.2M162.5 910.4V924.2M163.5 910.4V928.4M164.5 915.6V928.4M165.5 914.1V924.9M166.5 913.0V933.3M167.5 911.0V925.2M168.5 913.5V922.5M169.5 905.5V924.2M170.5 911.8V924.4M171.5 902.3V924.4M172.5 910.0V916.0M173.5 905.8V918.1M174.5 905.3V917.4M175.5 907.1V916.2M176.5 905.1V917.5M177.5 904.7V916.8M178.5 909.1V916.7M179.5 909.1V918.3M180.5 906.5V918.5M181.5 906.6V920.2M182.5 904.0V915.0M183.5 901.1V916.9M184.5 905.0V912.2M185.5 906.5V915.5M186.5 905.2V913.9M187.5 905.2V918.3M188.5 908.9V918.3M189.5 908.2V917.8M190.5 906.3V918.1M191.5 907.5V921.0M192.5 903.3V915.4M193.5 907.9V914.9M194.5 905.1V913.8M195.5 902.4V916.2M196.5 901.6V915.6M197.5 901.6V915.9M198.5 903.5V909.9M199.5 904.2V915.7M200.5 901.4V918.7M201.5 907.9V918.8M202.5 904.2V918.1M203.5 904.4V911.7M204.5 903.5V914.7M205.5 904.2V914.4M206.5 903.1V914.9M207.5 902.8V917.6M208.5 898.3V910.6M209.5 902.2V913.3M210.5 901.9V913.3M211.5 897.9V916.4M212.5 901.7V916.9M213.5 903.4V916.1M214.5 904.5V916.8M215.5 902.3V913.3M216.5 888.1V911.0M217.5 901.4V914.9M218.5 907.9V916.8M219.5 900.9V915.1M220.5 899.4V917.9M221.5 898.0V910.2M222.5 898.0V909.2M223.5 902.6V914.9M224.5 897.5V912.6M225.5 903.4V914.4M226.5 902.3V910.7M227.5 900.3V912.9M228.5 900.3V913.1M229.5 896.5V908.8M230.5 898.8V910.1M231.5 901.4V912.6M232.5 900.2V906.1M233.5 900.4V910.3M234.5 899.6V911.9M235.5 899.5V906.8M236.5 896.3V912.1M237.5 897.1V908.3M238.5 899.2V908.3M239.5 899.1V909.5M240.5 899.2V912.4M241.5 895.2V905.9M242.5 898.6V906.1M243.5 895.1V906.2M244.5 893.1V905.0M245.5 894.5V906.7M246.5 897.2V904.3M247.5 896.2V903.9M248.5 891.6V902.5M249.5 895.5V908.4M250.5 896.7V902.6M251.5 889.7V910.9M252.5 895.8V909.3M253.5 894.7V905.8M254.5 897.3V907.0M255.5 899.0V907.6M256.5 898.9V905.4M257.5 894.9V907.8M258.5 898.1V908.1M259.5 897.8V911.3M260.5 896.4V914.3M261.5 896.0V904.0M262.5 894.4V904.3M263.5 890.0V902.1M264.5 894.5V906.0M265.5 897.3V903.7M266.5 890.4V903.6M267.5 894.7V905.3M268.5 893.3V904.2M269.5 892.4V905.8M270.5 887.9V904.1M271.5 894.5V912.2M272.5 892.9V912.2M273.5 892.5V904.9M274.5 888.1V904.2M275.5 891.4V898.5M276.5 889.4V901.0M277.5 890.7V902.6M278.5 887.7V897.9M279.5 890.3V904.0M280.5 887.3V903.5M281.5 889.7V902.4M282.5 889.7V903.1M283.5 894.2V903.7M284.5 889.1V902.9M285.5 891.0V902.0M286.5 893.0V901.3M287.5 887.3V895.1M288.5 886.4V901.2M289.5 893.1V901.2M290.5 882.1V899.1M291.5 888.6V902.3M292.5 886.2V903.8M293.5 886.2V900.6M294.5 887.7V904.3M295.5 889.4V904.3M296.5 889.4V901.0M297.5 889.4V899.2M298.5 888.1V898.9M299.5 886.0V899.4M300.5 888.1V897.3M301.5 882.5V897.3M302.5 882.5V895.1M303.5 886.9V897.4M304.5 885.6V897.4M305.5 890.4V901.8M306.5 890.1V899.9M307.5 885.7V896.3M308.5 887.3V898.1M309.5 886.0V897.9M310.5 883.4V897.9M311.5 889.2V898.6M312.5 888.5V900.5M313.5 888.5V896.0M314.5 888.9V895.4M315.5 883.6V897.4M316.5 884.2V894.6M317.5 884.9V891.6M318.5 882.0V891.2M319.5 882.9V895.5M320.5 879.7V901.1M321.5 882.6V891.8M322.5 884.7V893.9M323.5 882.1V893.7M324.5 885.1V900.7M325.5 887.0V896.2M326.5 884.9V901.8M327.5 888.4V895.1M328.5 877.1V890.4M329.5 882.2V891.8M330.5 882.2V891.2M331.5 881.2V895.6M332.5 878.4V890.0M333.5 880.9V892.1M334.5 880.3V889.7M335.5 883.1V892.0M336.5 871.2V891.0M337.5 879.8V897.7M338.5 882.3V890.9M339.5 876.3V889.8M340.5 879.2V898.0M341.5 881.8V892.1M342.5 877.4V892.7M343.5 883.2V892.9M344.5 883.8V891.5M345.5 879.7V892.9M346.5 880.9V898.1M347.5 877.9V898.1M348.5 875.0V886.2M349.5 876.0V885.2M350.5 873.0V885.4M351.5 878.8V896.7M352.5 876.8V888.5M353.5 866.8V884.7M354.5 875.1V885.8M355.5 879.8V889.1M356.5 875.1V892.3M357.5 873.0V886.4M358.5 873.0V893.6M359.5 880.3V888.3M360.5 877.8V886.7M361.5 879.5V892.5M362.5 877.8V889.5M363.5 877.2V889.5M364.5 878.7V885.3M365.5 873.7V881.6M366.5 868.1V884.7M367.5 874.6V886.1M368.5 877.8V884.9M369.5 872.6V887.7M370.5 876.0V886.7M371.5 871.4V880.5M372.5 872.5V886.4M373.5 868.5V880.2M374.5 867.7V882.0M375.5 869.6V881.0M376.5 868.0V880.5M377.5 872.4V881.9M378.5 865.7V880.5M379.5 866.7V886.2M380.5 869.0V886.2M381.5 869.7V881.0M382.5 869.2V883.8M383.5 871.0V881.4M384.5 875.4V886.6M385.5 871.8V887.4M386.5 869.3V881.2M387.5 869.2V888.3M388.5 869.2V877.6M389.5 868.5V880.1M390.5 868.2V881.9M391.5 868.7V878.1M392.5 866.5V879.8M393.5 870.6V884.4M394.5 862.2V879.9M395.5 864.0V879.9M396.5 863.8V876.5M397.5 864.9V879.2M398.5 866.3V880.9M399.5 860.3V872.3M400.5 858.3V876.1M401.5 861.4V875.9M402.5 862.7V874.2M403.5 864.0V872.1M404.5 860.4V874.7M405.5 864.8V872.3M406.5 864.4V871.6M407.5 865.7V877.8M408.5 862.7V875.1M409.5 862.7V883.0M410.5 864.9V874.2M411.5 867.5V881.4M412.5 866.3V873.5M413.5 865.8V877.1M414.5 862.6V873.1M415.5 867.2V875.1M416.5 861.8V872.5M417.5 863.7V876.6M418.5 864.4V879.1M419.5 861.0V872.3M420.5 856.9V869.9M421.5 861.0V868.9M422.5 857.8V877.3M423.5 862.6V875.4M424.5 863.9V872.7M425.5 863.6V874.9M426.5 860.5V874.9M427.5 857.7V869.3M428.5 861.2V872.5M429.5 861.2V879.3M430.5 845.4V869.8M431.5 858.0V878.7M432.5 855.6V867.3M433.5 856.4V867.7M434.5 854.4V866.0M435.5 854.4V867.1M436.5 859.9V869.2M437.5 857.4V867.7M438.5 858.3V870.5M439.5 854.8V865.2M440.5 853.4V865.7M441.5 857.7V865.9M442.5 852.8V867.4M443.5 857.9V874.2M444.5 856.4V868.1M445.5 855.1V867.4M446.5 855.1V870.5M447.5 854.7V872.4M448.5 850.9V867.6M449.5 851.8V866.6M450.5 858.4V869.5M451.5 852.2V865.7M452.5 854.0V863.8M453.5 851.6V864.1M454.5 851.4V869.8M455.5 853.8V862.9M456.5 853.8V867.0M457.5 852.5V867.0M458.5 856.0V863.9M459.5 857.6V867.6M460.5 851.6V867.6M461.5 851.5V867.5M462.5 855.6V870.3M463.5 849.3V865.5M464.5 847.7V863.5M465.5 851.8V862.8M466.5 853.0V864.6M467.5 855.7V864.4M468.5 854.1V864.0M469.5 856.9V872.5M470.5 854.5V863.7M471.5 849.6V861.9M472.5 848.2V862.5M473.5 848.2V858.7M474.5 850.3V860.5M475.5 845.4V860.7M476.5 846.5V859.0M477.5 850.8V860.2M478.5 849.6V861.9M479.5 849.4V863.5M480.5 851.0V858.1M481.5 850.3V868.8M482.5 836.3V868.8M483.5 846.2V858.9M484.5 849.5V858.7M485.5 849.7V856.8M486.5 851.5V862.1M487.5 847.2V855.1M488.5 848.6V860.2M489.5 849.9V856.1M490.5 843.8V856.6M491.5 845.0V866.3M492.5 846.2V858.0M493.5 846.7V855.4M494.5 841.8V861.7M495.5 846.5V860.3M496.5 838.3V861.0M497.5 843.0V854.8M498.5 844.5V854.0M499.5 842.4V857.8M500.5 843.1V850.0M501.5 840.6V864.8M502.5 847.5V864.8M503.5 847.8V853.6M504.5 846.1V861.4M505.5 840.0V852.7M506.5 834.3V859.0M507.5 844.9V859.0M508.5 843.0V854.4M509.5 843.0V858.9M510.5 846.7V855.8M511.5 838.9V852.5M512.5 841.8V854.4M513.5 841.8V854.3M514.5 843.9V851.2M515.5 838.5V858.0M516.5 838.5V851.2M517.5 840.2V853.3M518.5 840.8V853.9M519.5 839.3V852.6M520.5 838.0V850.8M521.5 840.8V850.4M522.5 838.0V856.8M523.5 831.5V851.4M524.5 840.4V853.9M525.5 837.6V853.9M526.5 837.7V851.4M527.5 843.5V852.0M528.5 836.2V852.9M529.5 840.1V848.9M530.5 839.3V847.6M531.5 835.7V847.5M532.5 839.0V852.8M533.5 830.9V847.2M534.5 832.6V844.7M535.5 840.5V849.2M536.5 831.0V842.3M537.5 833.1V850.5M538.5 828.9V848.9M539.5 835.4V849.4M540.5 834.3V845.2M541.5 832.9V844.0M542.5 833.5V844.0M543.5 827.2V844.5M544.5 833.6V844.5M545.5 835.0V842.8M546.5 834.8V847.6M547.5 834.8V850.3M548.5 834.9V847.4M549.5 835.3V846.9M550.5 830.8V850.8M551.5 829.9V843.4M552.5 828.0V847.9M553.5 833.8V848.5M554.5 832.6V848.5M555.5 833.4V850.1M556.5 832.8V840.6M557.5 833.0V846.8M558.5 830.0V842.3M559.5 816.4V844.5M560.5 830.8V838.6M561.5 826.4V836.8M562.5 827.6V836.1M563.5 829.0V837.6M564.5 823.1V839.6M565.5 831.1V841.2M566.5 830.1V845.2M567.5 827.2V839.9M568.5 821.0V835.0M569.5 819.8V836.4M570.5 827.3V839.7M571.5 830.0V839.2M572.5 825.7V842.0M573.5 829.8V841.5M574.5 830.7V836.4M575.5 826.9V839.7M576.5 821.2V836.7M577.5 824.6V835.3M578.5 819.5V837.5M579.5 829.0V848.2M580.5 829.2V837.9M581.5 826.5V839.2M582.5 816.8V837.3M583.5 824.8V839.7M584.5 820.3V839.7M585.5 821.1V835.2M586.5 823.9V835.1M587.5 823.6V834.1M588.5 823.6V833.7M589.5 821.0V834.8M590.5 821.8V831.7M591.5 823.0V831.0M592.5 825.1V835.5M593.5 824.4V832.8M594.5 825.6V835.8M595.5 823.1V832.3M596.5 820.8V831.4M597.5 820.8V836.8M598.5 825.3V839.8M599.5 820.7V833.1M600.5 824.9V833.2M601.5 823.3V833.6M602.5 815.2V831.3M603.5 820.0V833.0M604.5 818.5V826.7M605.5 814.7V829.6M606.5 816.4V824.6M607.5 805.5V824.6M608.5 814.3V832.9M609.5 819.0V825.5M610.5 815.7V831.2M611.5 821.1V829.0M612.5 815.3V830.5M613.5 820.4V833.9M614.5 817.4V830.4M615.5 817.4V827.7M616.5 813.7V839.7M617.5 813.5V832.3M618.5 816.4V824.6M619.5 816.4V829.7M620.5 819.4V829.0M621.5 818.0V826.0M622.5 819.1V829.5M623.5 812.8V825.1M624.5 813.0V824.1M625.5 815.2V829.0M626.5 808.1V823.4M627.5 814.6V834.9M628.5 810.8V825.8M629.5 813.2V825.8M630.5 815.5V825.5M631.5 812.3V824.0M632.5 815.3V822.0M633.5 811.1V822.9M634.5 806.2V824.7M635.5 811.1V824.5M636.5 809.5V819.8M637.5 811.4V825.2M638.5 806.7V828.9M639.5 810.4V825.8M640.5 805.9V825.8M641.5 811.1V821.5M642.5 812.9V827.8M643.5 814.3V823.7M644.5 815.6V823.2M645.5 807.6V823.7M646.5 813.6V830.3M647.5 812.4V826.7M648.5 813.3V822.8M649.5 812.7V824.3M650.5 812.5V820.8M651.5 807.4V819.5M652.5 809.0V824.6M653.5 809.4V816.9M654.5 805.7V820.8M655.5 810.2V817.8M656.5 806.2V818.3M657.5 808.7V817.9M658.5 800.7V821.9M659.5 810.6V821.9M660.5 810.5V823.3M661.5 809.9V818.3M662.5 807.2V822.4M663.5 807.7V821.1M664.5 805.8V814.6M665.5 806.6V815.2M666.5 802.8V819.9M667.5 798.4V812.5M668.5 803.0V816.9M669.5 801.8V813.6M670.5 804.0V812.2M671.5 810.0V821.4M672.5 809.3V819.8M673.5 796.6V819.8M674.5 806.4V818.6M675.5 804.0V813.2M676.5 803.8V811.9M677.5 801.8V812.8M678.5 804.6V812.6M679.5 805.1V814.6M680.5 803.4V829.7M681.5 803.7V811.8M682.5 803.0V809.0M683.5 802.9V809.4M684.5 800.1V811.9M685.5 799.7V808.4M686.5 794.9V809.4M687.5 803.8V811.5M688.5 796.8V814.5M689.5 801.5V814.2M690.5 803.0V812.9M691.5 799.0V811.7M692.5 803.0V814.9M693.5 800.7V810.2M694.5 801.3V812.4M695.5 802.1V809.5M696.5 797.1V809.5M697.5 797.8V809.0M698.5 792.6V805.1M699.5 799.3V808.1M700.5 798.5V807.3M701.5 796.2V809.9M702.5 798.1V803.7M703.5 792.6V809.9M704.5 799.0V808.7M705.5 793.1V808.3M706.5 797.9V810.3M707.5 794.1V806.4M708.5 797.8V807.1M709.5 788.9V803.8M710.5 788.2V804.8M711.5 798.1V806.9M712.5 796.5V811.4M713.5 795.9V807.7M714.5 797.4V807.9M715.5 788.3V809.8M716.5 792.2V803.3M717.5 794.6V802.5M718.5 791.3V804.4M719.5 792.2V802.5M720.5 792.4V802.9M721.5 788.7V803.9M722.5 790.8V802.3M723.5 790.9V804.5M724.5 790.2V799.3M725.5 790.8V804.3M726.5 789.8V800.7M727.5 794.5V805.2M728.5 792.1V803.7M729.5 791.6V806.8M730.5 791.3V807.2M731.5 787.3V805.2M732.5 789.7V802.0M733.5 790.4V799.5M734.5 788.6V801.0M735.5 785.7V809.6M736.5 787.4V801.2M737.5 785.9V797.9M738.5 789.3V807.9M739.5 786.1V795.3M740.5 784.7V795.3M741.5 777.8V797.1M742.5 784.2V801.3M743.5 786.7V803.4M744.5 784.0V799.4M745.5 787.0V797.4M746.5 782.9V797.6M747.5 786.1V795.1M748.5 786.1V795.1M749.5 786.0V794.6M750.5 788.8V795.4M751.5 780.8V795.8M752.5 783.9V794.5M753.5 781.0V796.6M754.5 783.7V806.5M755.5 786.2V796.3M756.5 785.7V791.9M757.5 785.7V794.4M758.5 785.7V794.4M759.5 788.5V796.1M760.5 778.0V796.1M761.5 780.5V796.3M762.5 782.1V796.3M763.5 786.1V805.0M764.5 782.8V794.1M765.5 783.1V794.1M766.5 785.9V801.5M767.5 783.9V790.8M768.5 781.2V791.8M769.5 780.7V790.9M770.5 781.5V790.9M771.5 781.5V792.9M772.5 783.3V793.6M773.5 783.3V793.9M774.5 785.4V791.7M775.5 780.2V794.4M776.5 777.3V790.6M777.5 775.5V790.8M778.5 779.7V791.5M779.5 778.3V787.7M780.5 778.3V787.5M781.5 779.1V790.6M782.5 771.6V790.7M783.5 780.4V789.5M784.5 778.4V788.1M785.5 770.2V789.2M786.5 778.5V792.1M787.5 780.2V789.5M788.5 779.7V789.0M789.5 778.0V795.1M790.5 778.4V784.7M791.5 776.9V786.0M792.5 770.8V787.7M793.5 774.5V788.4M794.5 775.3V788.4M795.5 778.2V786.7M796.5 776.5V789.9M797.5 777.5V787.5M798.5 775.0V789.7M799.5 777.5V786.7M800.5 772.7V783.1M801.5 772.7V786.0M802.5 775.6V785.4M803.5 771.4V780.3M804.5 770.5V779.9M805.5 771.9V781.3M806.5 773.5V786.8M807.5 773.7V790.6M808.5 774.8V790.6M809.5 772.9V786.0M810.5 772.0V783.8M811.5 770.9V784.4M812.5 769.7V779.1M813.5 763.7V784.3M814.5 770.2V783.9M815.5 770.5V782.8M816.5 769.8V781.1M817.5 769.3V782.3M818.5 772.2V782.1M819.5 767.6V784.2M820.5 769.1V783.9M821.5 770.7V799.2M822.5 769.7V779.6M823.5 767.1V779.0M824.5 768.7V778.6M825.5 765.8V777.6M826.5 764.4V777.3M827.5 766.1V780.1M828.5 761.3V782.5M829.5 766.2V785.7M830.5 764.5V778.8M831.5 766.1V777.2M832.5 766.3V777.0M833.5 766.3V779.4M834.5 767.4V773.8M835.5 765.9V777.3M836.5 761.0V773.2M837.5 763.5V779.4M838.5 766.4V777.8M839.5 766.7V775.4M840.5 766.1V774.7M841.5 766.7V780.2M842.5 764.7V774.6M843.5 766.7V775.7M844.5 760.9V778.4M845.5 767.5V778.9M846.5 766.4V774.0M847.5 761.4V778.0M848.5 758.7V778.2M849.5 764.1V780.1M850.5 755.0V772.6M851.5 755.0V771.4M852.5 755.7V773.0M853.5 760.1V772.1M854.5 759.4V771.7M855.5 759.4V768.5M856.5 761.1V770.8M857.5 758.7V768.2M858.5 761.4V771.2M859.5 758.5V771.1M860.5 762.4V770.1M861.5 759.2V774.3M862.5 761.6V769.5M863.5 761.6V769.8M864.5 760.9V771.9M865.5 764.0V773.4M866.5 762.9V775.5M867.5 757.4V771.8M868.5 756.1V768.5M869.5 758.8V772.3M870.5 751.0V772.3M871.5 757.7V770.5M872.5 761.2V769.6M873.5 761.2V770.5M874.5 759.9V779.6M875.5 756.8V770.8M876.5 758.7V766.5M877.5 759.5V768.2M878.5 758.5V770.8M879.5 759.6V769.4M880.5 756.7V770.1M881.5 753.0V772.9M882.5 756.6V773.4M883.5 754.5V767.3M884.5 754.6V766.3M885.5 756.0V763.7M886.5 753.3V775.3M887.5 754.2V764.0M888.5 754.0V764.0M889.5 753.7V762.4M890.5 752.8V760.0M891.5 749.1V764.9M892.5 752.0V766.3M893.5 755.9V764.4M894.5 743.5V762.2M895.5 754.9V763.0M896.5 749.6V763.0M897.5 754.3V764.2M898.5 752.2V764.3M899.5 755.1V765.6M900.5 753.7V761.8M901.5 753.7V761.9M902.5 752.4V759.8M903.5 750.9V765.2M904.5 751.5V761.8M905.5 749.4V761.8M906.5 748.6V759.3M907.5 755.9V766.6M908.5 753.7V763.7M909.5 755.0V767.9M910.5 755.1V772.4M911.5 751.3V759.3M912.5 747.6V758.5M913.5 747.1V758.8M914.5 749.1V763.3M915.5 750.2V763.2M916.5 751.3V763.4M917.5 751.8V762.6M918.5 754.7V763.0M919.5 748.0V760.8M920.5 753.1V764.2M921.5 751.8V764.7M922.5 739.8V761.1M923.5 739.8V754.1M924.5 746.1V758.8M925.5 745.0V758.5M926.5 741.5V753.3M927.5 746.3V755.7M928.5 746.5V755.0M929.5 748.2V759.8M930.5 745.3V758.7M931.5 745.0V759.8M932.5 742.0V755.8M933.5 747.2V761.3M934.5 746.1V757.0M935.5 747.7V757.5M936.5 748.2V761.6M937.5 747.5V757.8M938.5 746.9V759.0M939.5 743.7V756.6M940.5 744.0V752.7M941.5 746.1V756.6M942.5 743.5V751.9M943.5 740.7V753.9M944.5 742.4V759.0M945.5 745.6V752.4M946.5 735.8V752.3M947.5 745.6V753.4M948.5 746.7V756.9M949.5 746.2V756.9M950.5 745.1V751.1M951.5 744.4V761.8M952.5 742.1V758.8M953.5 738.9V758.8M954.5 745.0V756.9M955.5 743.7V753.1M956.5 745.9V753.2M957.5 743.0V751.9M958.5 742.8V751.9M959.5 741.1V750.7M960.5 739.0V757.4M961.5 738.1V757.4M962.5 734.8V750.4M963.5 734.8V748.5M964.5 738.4V748.6M965.5 736.6V747.5M966.5 730.0V747.6M967.5 739.8V749.9M968.5 740.4V754.7M969.5 742.1V751.3M970.5 741.6V750.2M971.5 737.6V749.7M972.5 740.9V755.4M973.5 739.6V753.7M974.5 739.8V747.1M975.5 736.5V744.1M976.5 737.3V743.8M977.5 738.1V748.2M978.5 736.8V747.4M979.5 736.8V748.0M980.5 736.8V747.7M981.5 742.1V749.5M982.5 737.7V751.5M983.5 736.2V743.2M984.5 737.2V747.5M985.5 734.9V743.4M986.5 734.9V750.9M987.5 736.7V747.1M988.5 738.0V743.4M989.5 733.1V745.5M990.5 735.3V744.0M991.5 734.8V744.2M992.5 741.2V749.9M993.5 732.9V744.8M994.5 735.9V747.8M995.5 727.1V748.0M996.5 740.4V746.0M997.5 734.9V746.7M998.5 731.3V742.2M999.5 735.2V743.8M1000.5 734.2V744.8M1001.5 732.5V755.1M1002.5 729.4V743.1M1003.5 736.7V751.1M1004.5 730.7V743.7M1005.5 734.4V743.5M1006.5 734.4V747.8M1007.5 730.6V743.6M1008.5 729.6V741.2M1009.5 725.8V740.4M1010.5 730.2V744.7M1011.5 733.5V744.2M1012.5 733.3V746.3M1013.5 732.4V744.5M1014.5 732.9V744.5M1015.5 731.1V742.9M1016.5 728.5V743.4M1017.5 732.6V745.3M1018.5 730.8V741.1M1019.5 729.2V738.7M1020.5 730.1V740.4M1021.5 727.1V736.2M1022.5 724.3V743.4M1023.5 724.3V740.7M1024.5 728.4V735.4M1025.5 726.6V739.3M1026.5 722.8V739.3M1027.5 727.6V751.1M1028.5 730.1V743.8M1029.5 731.8V740.4M1030.5 727.7V741.4M1031.5 728.8V741.0M1032.5 728.8V737.9M1033.5 728.6V735.2M1034.5 724.2V737.7M1035.5 722.5V734.4M1036.5 722.4V734.7M1037.5 724.4V735.1M1038.5 717.1V736.5M1039.5 724.9V743.6M1040.5 724.3V743.6M1041.5 723.4V738.6M1042.5 719.3V738.3M1043.5 716.4V741.4M1044.5 722.8V736.4M1045.5 726.7V734.9M1046.5 723.8V739.2M1047.5 726.2V737.4M1048.5 723.6V736.1M1049.5 722.6V738.2M1050.5 724.5V737.2M1051.5 722.8V734.3M1052.5 719.9V738.1M1053.5 722.9V732.1M1054.5 725.2V736.4M1055.5 725.7V734.9M1056.5 724.2V731.6M1057.5 720.0V734.7M1058.5 720.8V730.5M1059.5 721.1V735.8M1060.5 722.6V744.1M1061.5 719.4V732.6M1062.5 719.7V731.7M1063.5 722.2V728.6M1064.5 722.2V732.0M1065.5 724.2V735.0M1066.5 724.6V735.7M1067.5 718.4V730.0M1068.5 726.1V729.8M1069.5 720.3V732.4M1070.5 720.6V731.6M1071.5 716.3V730.0M1072.5 723.2V730.8M1073.5 720.9V730.2M1074.5 720.3V729.6M1075.5 723.1V729.7M1076.5 721.5V729.4M1077.5 721.0V729.7M1078.5 719.4V732.0M1079.5 718.1V729.4M1080.5 720.9V731.0M1081.5 716.7V730.0M1082.5 719.9V727.9M1083.5 721.2V734.5M1084.5 721.4V736.6M1085.5 722.0V733.9M1086.5 719.8V732.0M1087.5 719.5V727.8M1088.5 717.8V730.9M1089.5 717.6V728.9M1090.5 714.7V727.1M1091.5 721.6V733.0M1092.5 721.4V729.2M1093.5 720.2V734.8M1094.5 717.2V728.4M1095.5 719.7V730.0M1096.5 716.0V726.0M1097.5 713.8V728.6M1098.5 713.8V725.4M1099.5 718.6V729.1M1100.5 719.7V730.0M1101.5 713.7V730.8M1102.5 713.7V726.9M1103.5 714.6V726.0M1104.5 714.6V727.6M1105.5 701.8V722.4M1106.5 717.3V727.8M1107.5 710.9V724.5M1108.5 710.9V728.4M1109.5 717.8V727.1M1110.5 710.6V725.1M1111.5 712.1V729.9M1112.5 707.1V721.8M1113.5 712.2V727.9M1114.5 715.2V732.2M1115.5 711.0V728.1M1116.5 712.9V728.1M1117.5 710.2V726.0M1118.5 714.5V729.2M1119.5 713.6V725.5M1120.5 715.3V722.5M1121.5 714.4V722.3M1122.5 713.1V723.9M1123.5 713.7V719.3M1124.5 712.5V724.8M1125.5 711.6V718.5M1126.5 705.8V723.3M1127.5 713.1V722.8M1128.5 710.5V724.5M1129.5 714.0V725.7M1130.5 710.9V724.5M1131.5 713.2V726.6M1132.5 710.6V724.0M1133.5 714.0V728.8M1134.5 714.8V724.0M1135.5 710.6V722.6M1136.5 712.5V720.1M1137.5 710.5V724.6M1138.5 707.9V721.3M1139.5 713.9V725.3M1140.5 712.4V723.1M1141.5 709.0V721.7M1142.5 712.5V716.8M1143.5 711.1V726.5M1144.5 710.8V720.0M1145.5 711.8V725.0M1146.5 711.2V725.0M1147.5 708.3V722.3M1148.5 700.9V720.6M1149.5 707.2V722.6M1150.5 709.0V719.7M1151.5 709.3V722.2M1152.5 706.1V719.6M1153.5 708.1V715.7M1154.5 708.3V718.0M1155.5 708.5V721.3M1156.5 705.8V722.1M1157.5 707.5V716.5M1158.5 710.8V717.2M1159.5 707.3V719.9M1160.5 711.5V719.6M1161.5 707.9V719.6M1162.5 701.2V719.6M1163.5 705.7V716.7M1164.5 705.0V714.2M1165.5 701.7V714.9M1166.5 700.7V717.9M1167.5 700.9V716.4M1168.5 704.3V717.4M1169.5 700.8V717.4M1170.5 700.3V714.8M1171.5 705.7V715.8M1172.5 703.9V717.1M1173.5 703.9V715.5M1174.5 702.6V713.0M1175.5 707.4V718.7M1176.5 703.3V716.4M1177.5 703.3V716.4M1178.5 703.9V716.9M1179.5 704.5V714.2M1180.5 702.0V717.3M1181.5 706.6V717.3M1182.5 705.6V717.4M1183.5 703.2V712.6M1184.5 704.3V713.3M1185.5 696.5V717.0M1186.5 702.5V718.4M1187.5 699.2V718.4M1188.5 701.9V715.8M1189.5 699.2V715.8M1190.5 696.9V711.7M1191.5 705.6V715.4M1192.5 697.0V716.9M1193.5 697.0V713.4M1194.5 704.9V717.8M1195.5 702.4V713.1M1196.5 698.1V714.6M1197.5 700.9V714.2M1198.5 705.4V712.9M1199.5 702.6V714.9M1200.5 701.1V717.9M1201.5 700.6V713.3M1202.5 700.2V709.3M1203.5 700.0V713.0M1204.5 695.2V713.1M1205.5 699.3V712.8M1206.5 697.8V713.8M1207.5 702.3V713.8M1208.5 702.9V708.5M1209.5 701.4V709.9M1210.5 701.2V710.0M1211.5 701.6V714.2M1212.5 701.7V711.9M1213.5 695.1V712.6M1214.5 699.1V709.6M1215.5 699.1V712.7M1216.5 695.6V708.4M1217.5 699.3V708.5M1218.5 699.2V706.2M1219.5 700.1V711.2M1220.5 699.3V711.1M1221.5 700.0V710.2M1222.5 701.1V713.4M1223.5 695.9V709.9M1224.5 691.7V714.7M1225.5 699.4V710.8M1226.5 699.4V708.8M1227.5 702.2V711.5M1228.5 703.0V714.9M1229.5 704.3V716.0M1230.5 699.5V716.5M1231.5 703.6V715.4M1232.5 695.2V715.4M1233.5 700.4V709.8M1234.5 702.2V709.8M1235.5 694.5V709.2M1236.5 698.1V708.4M1237.5 696.1V706.1M1238.5 697.9V706.8M1239.5 695.4V713.5M1240.5 694.0V713.5M1241.5 698.6V707.4M1242.5 694.8V705.9M1243.5 690.7V705.9M1244.5 700.2V709.1M1245.5 696.3V710.4M1246.5 698.1V713.1M1247.5 698.0V706.1M1248.5 694.0V704.3M1249.5 692.2V704.4M1250.5 695.0V701.6M1251.5 694.3V709.6M1252.5 698.1V706.0M1253.5 696.2V704.6M1254.5 697.9V706.6M1255.5 698.5V707.7M1256.5 698.5V707.5M1257.5 697.2V707.6M1258.5 693.9V706.1M1259.5 695.3V703.5M1260.5 698.0V712.2M1261.5 693.7V706.4M1262.5 693.9V707.2M1263.5 697.5V708.5M1264.5 697.4V712.2M1265.5 699.8V709.9M1266.5 696.9V707.1M1267.5 696.7V707.6M1268.5 684.2V704.0M1269.5 690.7V706.9M1270.5 692.4V704.0M1271.5 697.2V705.7M1272.5 694.8V708.2M1273.5 695.7V704.3M1274.5 695.3V706.1M1275.5 691.8V702.9M1276.5 691.2V702.9M1277.5 690.7V704.6M1278.5 688.3V704.6M1279.5 694.7V704.9M1280.5 695.8V707.9M1281.5 694.3V705.3M1282.5 691.9V708.3M1283.5 689.5V706.5M1284.5 691.3V705.8M1285.5 693.8V707.6M1286.5 690.9V700.7M1287.5 694.7V711.6M1288.5 694.9V706.0M1289.5 695.2V703.2M1290.5 687.8V701.4M1291.5 688.1V702.7M1292.5 692.6V704.4M1293.5 693.9V700.7M1294.5 686.6V703.9M1295.5 692.6V708.2M1296.5 691.0V703.5M1297.5 695.6V709.8M1298.5 694.1V703.4M1299.5 697.4V702.9M1300.5 694.8V703.7M1301.5 696.3V706.1M1302.5 694.3V708.3M1303.5 692.9V705.6M1304.5 688.3V703.7M1305.5 690.3V706.9M1306.5 689.0V703.0M1307.5 683.1V700.2M1308.5 687.5V696.3M1309.5 684.3V700.6M1310.5 687.3V699.7M1311.5 688.2V704.5M1312.5 680.9V699.9M1313.5 689.5V699.9M1314.5 687.3V699.2M1315.5 688.9V701.3M1316.5 691.1V699.5M1317.5 693.7V702.9M1318.5 690.0V701.9M1319.5 684.6V699.8M1320.5 690.2V699.8M1321.5 687.1V701.4M1322.5 686.4V700.9M1323.5 693.6V700.1M1324.5 690.6V698.5M1325.5 689.2V700.9M1326.5 687.1V702.9M1327.5 691.8V702.9M1328.5 690.4V700.6M1329.5 688.1V698.3M1330.5 688.1V699.9M1331.5 690.7V697.4M1332.5 689.2V703.2M1333.5 689.7V698.9M1334.5 688.3V697.1M1335.5 688.3V695.0M1336.5 688.7V700.1M1337.5 683.7V696.2M1338.5 685.8V699.1M1339.5 686.0V699.3M1340.5 687.7V696.4M1341.5 684.3V694.4M1342.5 683.5V697.2M1343.5 687.1V699.6M1344.5 689.1V700.6M1345.5 689.7V696.2M1346.5 685.3V697.8M1347.5 690.4V697.9M1348.5 690.4V701.1M1349.5 688.3V699.9M1350.5 685.4V695.8M1351.5 686.0V695.5M1352.5 686.2V695.7M1353.5 687.9V701.1M1354.5 689.1V701.8M1355.5 689.0V701.8M1356.5 682.4V710.5M1357.5 672.4V699.9M1358.5 684.6V696.7M1359.5 690.6V699.6M1360.5 688.5V704.9M1361.5 691.9V701.2M1362.5 693.0V704.1M1363.5 686.0V702.0M1364.5 689.2V696.9M1365.5 688.4V697.5M1366.5 690.2V697.5M1367.5 688.9V703.9M1368.5 687.6V699.4M1369.5 688.0V700.8M1370.5 688.1V698.7M1371.5 689.8V699.8M1372.5 683.6V697.7M1373.5 684.5V698.4M1374.5 684.5V693.7M1375.5 685.0V695.5M1376.5 685.5V694.6M1377.5 686.3V694.6M1378.5 686.8V695.7M1379.5 685.7V693.9M1380.5 686.9V693.1M1381.5 683.2V693.1M1382.5 683.6V698.9M1383.5 680.9V695.1M1384.5 679.9V694.7M1385.5 683.2V693.9M1386.5 683.6V694.9M1387.5 683.6V697.7M1388.5 685.1V691.9M1389.5 685.3V706.3M1390.5 684.9V697.5M1391.5 686.9V693.6M1392.5 681.2V697.6M1393.5 682.3V697.2M1394.5 682.3V698.6M1395.5 683.6V695.0M1396.5 683.6V693.8M1397.5 686.5V696.6M1398.5 685.1V695.3M1399.5 687.0V696.6M1400.5 687.5V696.3M1401.5 684.5V697.2M1402.5 685.1V695.4M1403.5 674.5V694.0M1404.5 685.2V691.9M1405.5 681.0V696.8M1406.5 682.4V699.5M1407.5 687.7V695.3M1408.5 688.1V700.7M1409.5 679.5V696.0M1410.5 684.1V696.0M1411.5 685.6V698.3M1412.5 685.6V694.0M1413.5 683.5V694.0M1414.5 683.2V694.9M1415.5 685.1V698.8M1416.5 687.2V696.6M1417.5 684.6V692.3M1418.5 687.0V698.3M1419.5 671.4V694.1M1420.5 682.3V692.4M1421.5 674.6V691.3M1422.5 682.8V693.5M1423.5 684.0V716.1M1424.5 685.0V704.8M1425.5 684.0V694.8M1426.5 683.1V693.9M1427.5 686.5V693.3M1428.5 683.1V693.8M1429.5 683.9V696.2M1430.5 686.3V696.7M1431.5 681.4V693.4M1432.5 683.0V698.9M1433.5 685.2V698.9M1434.5 684.0V695.7M1435.5 682.6V692.8M1436.5 681.7V698.4M1437.5 681.7V700.2M1438.5 683.6V697.8M1439.5 680.7V697.8M1440.5 686.2V697.8M1441.5 685.8V695.6M1442.5 685.5V695.0M1443.5 682.9V693.3M1444.5 680.8V688.0M1445.5 676.3V691.1M1446.5 680.4V693.4M1447.5 685.5V696.4M1448.5 684.3V695.6M1449.5 684.3V694.5M1450.5 687.3V697.8M1451.5 685.2V691.3M1452.5 682.1V694.1M1453.5 682.4V692.0M1454.5 681.3V692.6M1455.5 685.1V693.9M1456.5 684.8V692.7M1457.5 686.4V706.4M1458.5 680.7V691.0M1459.5 677.7V690.4M1460.5 679.7V692.1M1461.5 682.9V694.7M1462.5 682.9V693.4M1463.5 684.2V703.4M1464.5 684.6V694.2M1465.5 684.6V696.6M1466.5 683.7V694.8M1467.5 683.2V690.7M1468.5 682.2V690.7M1469.5 684.4V692.7M1470.5 677.2V696.9M1471.5 680.4V696.7M1472.5 678.7V691.3M1473.5 681.1V694.4M1474.5 682.3V692.0M1475.5 682.3V694.9M1476.5 684.6V694.7M1477.5 683.6V692.8M1478.5 680.7V690.2M1479.5 676.6V691.3M1480.5 680.6V690.5M1481.5 680.8V696.0M1482.5 678.4V690.2M1483.5 679.7V691.2M1484.5 681.0V690.3M1485.5 681.1V689.5M1486.5 682.6V695.9M1487.5 686.1V707.8M1488.5 685.6V695.8M1489.5 686.7V702.6M1490.5 683.9V699.5M1491.5 678.7V694.8M1492.5 682.3V694.3M1493.5 680.5V695.8M1494.5 683.6V693.0M1495.5 682.9V694.8M1496.5 678.4V694.8M1497.5 678.4V690.7M1498.5 676.7V692.0M1499.5 680.5V687.8M1500.5 679.4V691.4M1501.5 670.2V691.5M1502.5 676.5V693.6M1503.5 682.9V694.8M1504.5 682.9V692.8M1505.5 681.4V699.1M1506.5 682.3V695.0M1507.5 680.1V694.3M1508.5 681.9V690.0M1509.5 677.8V692.5M1510.5 677.8V693.5M1511.5 680.5V699.3M1512.5 679.5V694.1M1513.5 683.5V694.0M1514.5 683.5V695.3M1515.5 681.3V694.0M1516.5 683.9V692.7M1517.5 677.6V693.4M1518.5 679.0V693.1M1519.5 682.3V692.8M1520.5 683.0V692.5M1521.5 679.3V690.2M1522.5 682.0V691.4M1523.5 686.8V696.7M1524.5 684.7V696.8M1525.5 685.4V701.4M1526.5 681.7V696.0M1527.5 683.0V697.7M1528.5 678.9V697.7M1529.5 676.6V691.6M1530.5 682.9V692.1M1531.5 682.5V692.5M1532.5 680.7V695.1M1533.5 681.4V691.8M1534.5 683.6V697.8M1535.5 682.8V691.9M1536.5 682.0V690.6M1537.5 684.3V690.6M1538.5 681.6V694.2M1539.5 685.1V694.2M1540.5 681.9V689.7M1541.5 686.0V695.7M1542.5 681.9V697.1M1543.5 685.2V697.1M1544.5 680.3V695.1M1545.5 681.6V691.7M1546.5 679.0V691.4M1547.5 679.0V693.6M1548.5 681.6V696.5M1549.5 678.6V693.1M1550.5 670.9V694.2M1551.5 682.7V696.2M1552.5 682.0V693.8M1553.5 682.4V691.5M1554.5 677.7V691.5M1555.5 680.0V690.2M1556.5 683.5V690.9M1557.5 676.9V691.0M1558.5 679.1V692.2M1559.5 679.6V692.2M1560.5 681.8V694.4M1561.5 678.6V691.8M1562.5 677.0V693.4M1563.5 681.1V693.9M1564.5 678.6V693.9M1565.5 682.4V690.8M1566.5 679.2V698.4M1567.5 682.3V692.1M1568.5 679.1V689.8M1569.5 682.5V693.2M1570.5 681.9V691.2M1571.5 672.0V693.1M1572.5 682.6V696.0M1573.5 677.8V691.2M1574.5 677.8V698.6M1575.5 679.0V690.2M1576.5 679.0V696.6M1577.5 679.8V686.3M1578.5 684.1V693.3M1579.5 682.0V693.1M1580.5 682.1V697.8M1581.5 681.4V694.9M1582.5 682.0V694.2M1583.5 681.5V691.4M1584.5 682.5V692.4M1585.5 679.9V694.6M1586.5 678.9V693.2M1587.5 682.1V694.2M1588.5 682.8V692.4M1589.5 684.2V693.7M1590.5 679.7V691.6M1591.5 679.7V694.7M1592.5 681.8V691.0M1593.5 684.6V695.1M1594.5 682.4V694.4M1595.5 685.2V693.0M1596.5 681.1V696.4M1597.5 681.6V696.0M1598.5 682.5V693.4M1599.5 683.6V690.1M1600.5 682.3V694.1M1601.5 681.2V694.7M1602.5 680.6V696.5M1603.5 685.4V695.1M1604.5 672.8V695.1M1605.5 681.9V694.8M1606.5 677.6V694.8M1607.5 681.9V693.4M1608.5 682.4V696.3M1609.5 679.9V695.4M1610.5 680.8V692.5M1611.5 686.7V695.7M1612.5 684.5V695.7M1613.5 685.0V696.6M1614.5 680.9V692.9M1615.5 686.4V696.0M1616.5 683.7V700.5M1617.5 679.7V694.4M1618.5 685.6V696.3M1619.5 682.3V691.7M1620.5 681.2V691.6M1621.5 680.5V692.9M1622.5 683.0V691.3M1623.5 680.6V693.0M1624.5 687.7V694.0M1625.5 687.0V693.7M1626.5 685.5V697.4M1627.5 679.4V695.6M1628.5 684.1V693.7M1629.5 681.0V692.8M1630.5 685.9V695.5M1631.5 679.4V691.2M1632.5 679.4V693.5M1633.5 683.0V693.6M1634.5 676.1V688.7M1635.5 680.1V692.8M1636.5 680.1V690.3M1637.5 678.7V692.6M1638.5 680.1V691.9M1639.5 686.9V699.8M1640.5 682.4V697.3M1641.5 682.0V692.4M1642.5 682.0V694.2M1643.5 684.4V693.1M1644.5 683.2V695.7M1645.5 684.9V695.7M1646.5 685.0V696.2M1647.5 687.8V696.7M1648.5 688.0V699.7M1649.5 684.3V695.1M1650.5 686.3V698.1M1651.5 688.7V698.9M1652.5 686.6V696.8M1653.5 685.8V697.3M1654.5 688.1V696.4M1655.5 683.4V691.4M1656.5 684.7V691.6M1657.5 685.1V693.2M1658.5 685.6V695.8M1659.5 685.6V696.1M1660.5 687.8V695.9M1661.5 687.6V698.9M1662.5 686.4V704.2M1663.5 682.0V695.4M1664.5 687.2V697.6M1665.5 686.4V694.1M1666.5 687.8V696.3M1667.5 687.2V695.1M1668.5 676.3V694.9M1669.5 681.2V700.2M1670.5 681.2V695.8M1671.5 689.3V699.5M1672.5 684.6V698.2M1673.5 686.1V695.3M1674.5 677.5V701.1M1675.5 685.7V695.5M1676.5 684.8V694.2M1677.5 685.6V693.8M1678.5 688.2V694.7M1679.5 672.8V695.3M1680.5 682.8V693.0M1681.5 684.0V693.7M1682.5 685.6V699.9M1683.5 683.3V694.0M1684.5 687.2V693.5M1685.5 685.2V693.2M1686.5 681.8V696.4M1687.5 687.8V696.4M1688.5 688.1V701.2M1689.5 688.3V697.0M1690.5 690.7V700.3M1691.5 688.4V698.1M1692.5 690.6V700.3M1693.5 690.9V698.1M1694.5 686.9V699.4M1695.5 687.2V701.9M1696.5 687.8V697.0M1697.5 684.0V699.4M1698.5 685.7V699.4M1699.5 686.6V700.4M1700.5 689.8V697.1M1701.5 687.9V700.9M1702.5 685.9V700.9M1703.5 682.0V697.4M1704.5 684.3V695.0M1705.5 683.3V694.7M1706.5 683.3V696.3M1707.5 683.7V698.7M1708.5 686.7V697.3M1709.5 685.6V694.5M1710.5 688.0V696.7M1711.5 686.6V698.0M1712.5 684.0V693.5M1713.5 685.3V690.8M1714.5 684.3V695.1M1715.5 685.5V692.7M1716.5 685.5V693.3M1717.5 687.2V699.1M1718.5 682.3V697.3M1719.5 684.6V699.4M1720.5 684.1V699.4M1721.5 686.3V696.5M1722.5 682.4V693.7M1723.5 684.7V696.5M1724.5 688.6V698.8M1725.5 684.5V699.7M1726.5 686.6V700.6M1727.5 686.6V702.5M1728.5 688.5V702.8M1729.5 688.9V697.0M1730.5 685.1V699.4M1731.5 686.2V696.4M1732.5 685.5V698.9M1733.5 685.5V695.3M1734.5 685.5V697.3M1735.5 688.9V699.5M1736.5 688.6V700.6M1737.5 690.0V695.9M1738.5 685.0V695.8M1739.5 688.4V702.8M1740.5 688.5V703.2M1741.5 691.9V702.3M1742.5 693.0V705.0M1743.5 691.7V703.9M1744.5 691.7V703.7M1745.5 693.3V702.4M1746.5 690.4V702.8M1747.5 692.5V703.0M1748.5 691.2V706.5M1749.5 690.7V701.8M1750.5 686.9V703.3" fill="none" stroke="#00d596" stroke-width="1.0"/>
<path d="M3.5 906.8V911.3M4.5 904.8V912.7M5.5 904.6V913.1M6.5 902.9V913.1M7.5 902.9V910.9M8.5 905.4V912.6M9.5 906.6V912.4M10.5 905.6V912.4M11.5 904.1V912.9M12.5 899.5V910.7M13.5 904.9V913.8M14.5 902.3V914.3M15.5 902.8V914.3M16.5 902.0V909.6M17.5 903.9V910.2M18.5 903.7V911.7M19.5 903.3V911.3M20.5 904.1V911.8M21.5 901.5V909.8M22.5 902.5V909.9M23.5 903.6V912.8M24.5 902.2V914.6M25.5 903.4V910.3M26.5 900.3V912.9M27.5 903.7V912.9M28.5 905.4V913.0M29.5 903.5V912.8M30.5 903.7V913.4M31.5 903.7V909.8M32.5 904.0V911.9M33.5 904.8V910.8M34.5 898.9V912.1M35.5 898.9V911.7M36.5 900.9V909.8M37.5 900.8V912.3M38.5 901.2V907.4M39.5 901.8V910.9M40.5 900.6V909.4M41.5 900.9V908.8M42.5 904.6V909.6M43.5 904.5V914.3M44.5 906.7V914.3M45.5 902.6V911.7M46.5 904.8V912.9M47.5 904.0V911.6M48.5 902.8V913.5M49.5 903.0V910.1M50.5 902.0V909.1M51.5 901.4V918.6M52.5 904.2V912.2M53.5 903.9V912.2M54.5 901.9V909.1M55.5 903.7V910.3M56.5 900.1V910.6M57.5 900.6V909.1M58.5 901.6V907.1M59.5 899.6V910.9M60.5 902.3V908.6M61.5 899.6V910.2M62.5 901.7V911.7M63.5 902.4V910.3M64.5 901.4V909.8M65.5 899.7V910.4M66.5 903.4V909.2M67.5 899.8V908.9M68.5 899.8V909.2M69.5 899.2V908.5M70.5 900.8V911.2M71.5 900.8V908.9M72.5 901.9V915.6M73.5 901.0V908.3M74.5 898.5V909.5M75.5 902.0V910.1M76.5 898.3V911.8M77.5 902.5V909.6M78.5 903.3V911.9M79.5 898.9V913.1M80.5 899.0V905.7M81.5 899.0V906.4M82.5 899.4V907.0M83.5 900.0V908.0M84.5 900.2V908.0M85.5 899.5V906.3M86.5 902.3V908.4M87.5 900.8V909.4M88.5 901.1V908.7M89.5 897.7V908.5M90.5 898.6V906.9M91.5 900.6V911.4M92.5 901.2V909.6M93.5 897.5V905.4M94.5 897.7V906.3M95.5 903.6V911.4M96.5 899.3V909.7M97.5 900.5V908.5M98.5 900.7V909.6M99.5 898.6V905.7M100.5 900.6V910.1M101.5 901.0V908.2M102.5 897.0V907.2M103.5 902.3V909.8M104.5 902.9V911.2M105.5 902.8V911.2M106.5 899.4V906.8M107.5 901.4V915.7M108.5 899.0V909.4M109.5 903.8V910.2M110.5 900.8V907.6M111.5 899.8V910.0M112.5 900.2V908.0M113.5 900.5V909.1M114.5 898.3V908.9M115.5 898.9V906.4M116.5 898.0V906.9M117.5 900.8V907.1M118.5 898.4V907.1M119.5 900.7V909.1M120.5 896.5V908.7M121.5 896.5V906.7M122.5 899.5V910.7M123.5 899.7V906.5M124.5 899.6V908.5M125.5 900.8V906.2M126.5 900.4V907.6M127.5 898.1V907.6M128.5 898.1V905.1M129.5 899.4V906.8M130.5 899.0V909.1M131.5 899.5V905.3M132.5 896.4V910.9M133.5 899.0V904.5M134.5 899.0V904.5M135.5 898.5V909.0M136.5 900.5V906.8M137.5 897.3V905.1M138.5 898.8V906.6M139.5 897.2V907.6M140.5 898.2V911.3M141.5 896.8V905.2M142.5 897.5V908.4M143.5 897.5V908.8M144.5 899.6V906.6M145.5 900.1V907.5M146.5 897.0V910.0M147.5 895.5V907.2M148.5 897.0V904.1M149.5 898.3V907.2M150.5 897.7V903.1M151.5 896.0V905.3M152.5 899.6V905.6M153.5 894.6V908.0M154.5 899.4V906.2M155.5 898.3V904.7M156.5 898.7V903.9M157.5 897.4V902.4M158.5 895.9V904.6M159.5 898.9V902.0M160.5 896.1V903.8M161.5 895.6V903.9M162.5 892.8V904.1M163.5 892.8V904.7M164.5 892.9V906.5M165.5 892.1V902.5M166.5 897.2V904.0M167.5 895.7V903.2M168.5 893.7V901.7M169.5 894.4V900.8M170.5 895.1V901.6M171.5 898.6V906.9M172.5 899.0V908.5M173.5 898.0V908.5M174.5 898.9V909.1M175.5 894.3V901.5M176.5 894.2V902.4M177.5 896.2V904.9M178.5 893.9V902.3M179.5 896.7V902.2M180.5 897.2V903.1M181.5 895.4V902.6M182.5 894.9V903.6M183.5 893.1V899.7M184.5 894.7V901.3M185.5 893.4V900.3M186.5 894.2V901.2M187.5 897.0V904.7M188.5 895.4V901.2M189.5 896.9V902.6M190.5 894.1V900.9M191.5 897.0V903.9M192.5 894.3V906.5M193.5 893.3V906.5M194.5 895.8V902.8M195.5 894.9V903.8M196.5 889.3V902.7M197.5 894.3V905.1M198.5 896.0V904.7M199.5 896.2V904.9M200.5 894.0V901.7M201.5 893.7V906.7M202.5 895.7V902.3M203.5 891.8V904.7M204.5 892.7V901.9M205.5 893.2V901.6M206.5 895.3V900.3M207.5 894.7V902.3M208.5 892.4V899.8M209.5 891.9V900.9M210.5 893.4V903.1M211.5 894.4V900.8M212.5 895.3V905.4M213.5 899.0V901.8M214.5 897.0V906.5M215.5 895.8V903.7M216.5 893.8V901.2M217.5 895.7V901.3M218.5 894.2V901.7M219.5 892.1V902.3M220.5 893.9V901.7M221.5 893.4V900.6M222.5 891.2V898.4M223.5 893.8V899.0M224.5 890.4V901.7M225.5 891.0V898.7M226.5 893.4V899.2M227.5 891.6V897.8M228.5 891.1V897.7M229.5 891.2V898.0M230.5 892.1V900.4M231.5 892.1V900.0M232.5 890.2V896.8M233.5 890.6V898.5M234.5 890.9V899.4M235.5 892.3V902.0M236.5 892.0V896.5M237.5 892.0V901.5M238.5 890.0V901.6M239.5 890.4V898.8M240.5 892.8V898.7M241.5 892.4V907.0M242.5 890.0V898.1M243.5 888.7V898.1M244.5 890.9V896.0M245.5 888.9V898.0M246.5 888.9V897.6M247.5 889.8V895.8M248.5 889.3V896.3M249.5 889.1V901.3M250.5 890.8V895.9M251.5 891.8V898.1M252.5 890.7V898.9M253.5 883.3V896.7M254.5 892.7V899.2M255.5 891.7V901.9M256.5 890.3V898.1M257.5 892.2V898.6M258.5 891.9V899.4M259.5 892.2V898.6M260.5 890.6V898.2M261.5 891.0V897.0M262.5 888.5V898.0M263.5 890.2V896.8M264.5 888.3V899.4M265.5 890.6V895.8M266.5 890.7V898.4M267.5 891.8V896.8M268.5 888.4V896.0M269.5 890.4V898.1M270.5 889.6V898.1M271.5 887.1V894.1M272.5 884.5V894.3M273.5 886.7V892.4M274.5 883.1V894.1M275.5 891.8V899.1M276.5 884.5V896.0M277.5 888.8V895.4M278.5 888.8V907.2M279.5 887.1V897.2M280.5 884.4V894.5M281.5 885.4V894.1M282.5 888.6V894.8M283.5 888.4V894.7M284.5 887.3V893.9M285.5 882.7V896.1M286.5 885.3V895.8M287.5 885.7V891.4M288.5 886.2V894.5M289.5 885.4V891.9M290.5 884.5V891.9M291.5 883.6V893.8M292.5 885.4V893.4M293.5 885.9V901.1M294.5 882.9V901.1M295.5 884.2V896.3M296.5 882.4V892.8M297.5 883.6V893.1M298.5 886.1V893.4M299.5 882.0V893.4M300.5 883.0V890.8M301.5 884.3V891.3M302.5 884.0V895.5M303.5 885.2V900.6M304.5 883.5V893.6M305.5 885.6V893.5M306.5 884.4V891.3M307.5 883.8V893.3M308.5 882.3V889.9M309.5 884.4V890.8M310.5 882.5V895.0M311.5 885.5V891.6M312.5 886.2V891.3M313.5 880.4V891.8M314.5 880.8V892.4M315.5 878.1V892.4M316.5 883.0V891.7M317.5 884.6V890.9M318.5 884.0V894.4M319.5 885.9V894.1M320.5 884.8V893.7M321.5 884.9V891.3M322.5 881.8V889.3M323.5 883.7V890.6M324.5 878.0V890.6M325.5 884.5V891.4M326.5 881.1V889.9M327.5 880.7V889.4M328.5 879.3V890.2M329.5 880.0V891.3M330.5 883.7V892.2M331.5 882.3V889.6M332.5 880.2V889.7M333.5 880.5V891.8M334.5 880.3V889.2M335.5 882.1V892.5M336.5 881.5V891.0M337.5 882.4V887.9M338.5 880.2V888.9M339.5 883.0V891.6M340.5 876.0V892.1M341.5 878.0V892.4M342.5 883.7V888.4M343.5 884.4V892.3M344.5 872.5V888.3M345.5 881.5V891.2M346.5 879.9V890.0M347.5 880.2V888.2M348.5 879.0V885.9M349.5 881.6V892.4M350.5 880.3V887.1M351.5 877.4V892.0M352.5 877.1V891.3M353.5 881.2V890.3M354.5 884.9V891.6M355.5 879.6V891.3M356.5 879.1V887.9M357.5 881.6V890.8M358.5 879.0V889.5M359.5 876.8V884.7M360.5 877.4V884.5M361.5 875.8V884.5M362.5 875.0V891.2M363.5 877.7V891.2M364.5 878.2V887.0M365.5 881.2V886.2M366.5 880.0V887.0M367.5 880.7V886.6M368.5 880.1V886.6M369.5 881.8V889.4M370.5 879.7V888.5M371.5 876.4V888.5M372.5 878.8V884.2M373.5 875.1V884.2M374.5 879.1V885.3M375.5 878.9V894.4M376.5 878.6V889.6M377.5 878.9V888.3M378.5 879.6V888.3M379.5 875.8V886.7M380.5 879.0V884.6M381.5 875.9V884.4M382.5 877.7V882.9M383.5 877.0V884.6M384.5 873.2V884.9M385.5 877.9V886.1M386.5 874.9V884.5M387.5 877.2V888.2M388.5 878.3V885.2M389.5 876.9V884.5M390.5 874.7V884.0M391.5 878.6V884.2M392.5 875.5V886.1M393.5 877.0V886.1M394.5 877.0V886.9M395.5 878.6V885.1M396.5 877.5V885.7M397.5 877.1V885.7M398.5 874.4V882.0M399.5 875.8V883.7M400.5 874.9V883.1M401.5 875.0V883.8M402.5 877.8V884.1M403.5 875.0V881.4M404.5 875.0V884.2M405.5 876.6V884.7M406.5 875.1V882.3M407.5 878.3V885.8M408.5 873.7V884.2M409.5 877.0V881.4M410.5 875.6V884.2M411.5 873.5V882.2M412.5 872.8V881.0M413.5 874.8V879.7M414.5 871.3V881.8M415.5 873.6V878.6M416.5 874.4V880.6M417.5 874.3V881.4M418.5 870.4V881.8M419.5 874.0V879.3M420.5 875.7V881.4M421.5 872.4V883.5M422.5 873.4V882.1M423.5 872.6V882.1M424.5 867.7V881.6M425.5 873.5V879.5M426.5 871.5V879.4M427.5 872.5V877.9M428.5 872.0V881.1M429.5 872.0V886.5M430.5 873.1V883.8M431.5 872.7V880.4M432.5 872.7V879.6M433.5 869.2V877.3M434.5 873.3V880.7M435.5 872.7V879.5M436.5 874.0V880.1M437.5 874.6V882.1M438.5 870.2V880.2M439.5 870.2V878.8M440.5 870.6V880.1M441.5 874.5V882.8M442.5 873.0V882.8M443.5 871.8V876.3M444.5 871.6V877.9M445.5 870.6V879.1M446.5 869.1V876.0M447.5 869.0V876.8M448.5 868.1V877.9M449.5 867.6V876.0M450.5 869.9V879.5M451.5 871.1V881.5M452.5 872.5V878.8M453.5 873.7V880.0M454.5 871.1V884.5M455.5 868.9V884.5M456.5 866.9V876.0M457.5 867.9V878.8M458.5 865.1V876.9M459.5 872.1V876.7M460.5 869.1V880.9M461.5 869.4V879.0M462.5 869.5V875.9M463.5 871.8V876.8M464.5 870.4V878.2M465.5 868.7V876.0M466.5 870.0V877.4M467.5 870.3V879.0M468.5 870.6V877.9M469.5 872.2V877.9M470.5 868.6V877.0M471.5 869.2V876.4M472.5 868.1V879.7M473.5 867.8V876.7M474.5 869.3V877.7M475.5 869.2V875.3M476.5 870.6V877.1M477.5 867.5V877.1M478.5 870.7V878.8M479.5 868.3V875.7M480.5 869.3V877.6M481.5 870.4V876.5M482.5 864.4V876.1M483.5 870.0V876.9M484.5 864.5V875.6M485.5 865.6V875.6M486.5 867.8V876.4M487.5 864.7V874.7M488.5 868.7V874.7M489.5 866.8V875.0M490.5 866.3V871.8M491.5 866.5V878.2M492.5 864.7V875.0M493.5 870.4V878.5M494.5 868.0V877.1M495.5 867.8V876.9M496.5 866.5V874.7M497.5 864.1V875.4M498.5 867.6V877.4M499.5 865.8V874.7M500.5 865.8V875.1M501.5 868.4V875.4M502.5 866.5V875.4M503.5 863.7V871.5M504.5 864.1V870.9M505.5 864.1V871.1M506.5 863.9V874.9M507.5 865.6V872.8M508.5 864.8V873.2M509.5 866.2V872.2M510.5 865.2V871.5M511.5 864.7V874.5M512.5 866.1V872.9M513.5 863.1V872.7M514.5 863.7V872.0M515.5 864.6V873.9M516.5 864.6V873.9M517.5 863.1V872.7M518.5 861.5V876.3M519.5 861.6V869.3M520.5 865.0V873.0M521.5 863.4V869.8M522.5 862.0V867.8M523.5 864.0V871.7M524.5 862.6V872.2M525.5 864.6V870.9M526.5 862.4V871.9M527.5 866.2V870.5M528.5 862.9V873.8M529.5 859.9V870.2M530.5 864.7V871.4M531.5 860.8V873.7M532.5 861.7V873.7M533.5 862.4V873.9M534.5 854.9V868.2M535.5 860.4V871.7M536.5 860.1V867.6M537.5 857.3V867.5M538.5 860.9V868.7M539.5 861.8V870.0M540.5 862.4V866.7M541.5 862.5V868.3M542.5 860.7V869.8M543.5 861.0V866.0M544.5 859.0V866.8M545.5 859.0V875.5M546.5 860.8V872.0M547.5 859.2V875.4M548.5 860.0V867.7M549.5 860.1V867.5M550.5 858.0V866.1M551.5 860.7V870.1M552.5 861.6V867.4M553.5 858.7V872.0M554.5 861.5V866.1M555.5 859.0V868.6M556.5 855.0V867.2M557.5 859.0V867.2M558.5 859.5V865.3M559.5 859.6V866.8M560.5 858.7V867.9M561.5 861.1V867.5M562.5 859.5V867.4M563.5 858.0V868.1M564.5 859.9V871.9M565.5 860.8V870.3M566.5 857.8V866.2M567.5 858.7V867.0M568.5 857.6V869.5M569.5 858.5V863.7M570.5 859.0V865.5M571.5 859.7V868.8M572.5 857.9V865.5M573.5 859.7V865.2M574.5 858.9V865.2M575.5 855.9V864.8M576.5 856.5V864.9M577.5 852.5V866.6M578.5 857.0V867.6M579.5 857.8V866.6M580.5 858.9V864.1M581.5 858.2V865.9M582.5 856.4V864.8M583.5 857.0V869.2M584.5 858.6V864.2M585.5 856.9V864.6M586.5 855.0V865.9M587.5 856.7V862.6M588.5 855.3V867.5M589.5 856.6V865.0M590.5 856.9V863.6M591.5 854.2V861.7M592.5 856.6V862.8M593.5 852.1V862.1M594.5 855.2V861.8M595.5 850.4V864.2M596.5 854.1V863.2M597.5 851.9V858.8M598.5 854.4V859.8M599.5 856.7V864.0M600.5 855.6V863.5M601.5 853.4V862.5M602.5 851.6V863.8M603.5 855.8V863.5M604.5 855.8V861.7M605.5 854.8V865.1M606.5 856.7V862.6M607.5 853.9V860.0M608.5 851.5V859.7M609.5 856.0V866.5M610.5 854.4V863.4M611.5 849.7V857.9M612.5 852.0V857.4M613.5 848.6V861.2M614.5 850.8V857.6M615.5 854.0V861.5M616.5 853.6V861.1M617.5 853.2V859.3M618.5 850.9V858.4M619.5 850.4V858.4M620.5 848.3V856.2M621.5 850.2V858.5M622.5 852.4V860.0M623.5 848.0V858.0M624.5 851.1V861.2M625.5 851.1V859.4M626.5 847.4V855.0M627.5 851.2V860.4M628.5 853.4V862.2M629.5 853.4V859.4M630.5 852.8V859.3M631.5 851.9V860.1M632.5 848.7V857.8M633.5 846.9V854.2M634.5 852.0V857.1M635.5 845.2V857.1M636.5 848.5V855.8M637.5 850.9V856.7M638.5 848.5V858.8M639.5 848.5V857.0M640.5 846.9V858.6M641.5 850.3V855.0M642.5 849.9V859.7M643.5 851.8V855.6M644.5 848.7V861.7M645.5 851.2V855.7M646.5 850.4V856.9M647.5 849.5V858.1M648.5 849.3V857.9M649.5 847.9V857.9M650.5 847.9V853.7M651.5 848.2V862.9M652.5 844.1V856.8M653.5 848.7V855.4M654.5 850.0V857.3M655.5 851.1V857.3M656.5 850.7V858.7M657.5 850.1V865.6M658.5 848.1V860.8M659.5 844.8V857.1M660.5 846.8V853.1M661.5 846.3V853.6M662.5 847.6V856.6M663.5 844.7V853.7M664.5 844.3V853.5M665.5 843.9V853.5M666.5 844.5V851.2M667.5 846.9V854.8M668.5 848.3V856.3M669.5 847.2V853.1M670.5 847.8V855.5M671.5 848.9V853.0M672.5 848.1V857.2M673.5 848.2V856.0M674.5 847.0V856.6M675.5 842.1V852.5M676.5 847.5V851.3M677.5 845.2V851.5M678.5 843.8V849.9M679.5 845.4V852.6M680.5 845.2V853.8M681.5 844.4V851.9M682.5 844.3V850.0M683.5 844.3V851.8M684.5 845.0V862.5M685.5 843.6V852.9M686.5 844.6V852.5M687.5 847.5V852.1M688.5 841.5V852.3M689.5 845.0V851.7M690.5 843.1V853.5M691.5 842.5V849.1M692.5 841.4V850.0M693.5 838.0V850.0M694.5 842.8V849.3M695.5 842.2V853.3M696.5 846.0V853.3M697.5 842.5V850.1M698.5 838.9V850.9M699.5 844.1V852.2M700.5 843.9V851.6M701.5 844.2V856.0M702.5 843.7V849.5M703.5 843.1V853.5M704.5 841.6V849.0M705.5 841.6V849.1M706.5 844.0V851.2M707.5 840.7V850.7M708.5 842.5V850.0M709.5 841.8V852.5M710.5 840.2V852.0M711.5 841.2V848.1M712.5 841.9V848.0M713.5 841.9V847.7M714.5 842.7V849.4M715.5 839.7V849.4M716.5 841.1V847.0M717.5 839.9V847.7M718.5 837.1V845.1M719.5 842.0V850.3M720.5 837.5V851.2M721.5 836.7V853.3M722.5 841.0V850.0M723.5 839.7V848.4M724.5 841.2V845.8M725.5 839.8V849.6M726.5 839.9V848.1M727.5 836.1V850.6M728.5 839.2V850.6M729.5 838.5V843.6M730.5 836.6V844.2M731.5 839.0V848.3M732.5 839.7V848.3M733.5 838.9V845.6M734.5 840.2V848.2M735.5 836.2V847.2M736.5 839.3V850.5M737.5 835.8V845.2M738.5 840.0V845.5M739.5 838.5V847.8M740.5 837.3V846.7M741.5 839.6V846.8M742.5 839.2V846.1M743.5 839.7V854.4M744.5 838.4V848.7M745.5 838.5V847.3M746.5 838.3V848.6M747.5 839.8V847.4M748.5 839.1V848.2M749.5 839.1V845.7M750.5 839.6V846.0M751.5 839.2V845.5M752.5 839.1V846.1M753.5 839.0V845.7M754.5 839.9V846.4M755.5 832.8V841.7M756.5 833.4V838.4M757.5 835.3V844.0M758.5 831.6V840.6M759.5 831.6V844.6M760.5 836.4V841.8M761.5 836.7V843.3M762.5 835.6V846.9M763.5 833.4V841.9M764.5 836.6V846.4M765.5 831.8V844.9M766.5 832.6V845.2M767.5 836.9V842.3M768.5 835.0V842.9M769.5 836.8V843.0M770.5 835.0V843.6M771.5 835.3V844.0M772.5 837.3V846.0M773.5 839.0V844.2M774.5 836.1V845.3M775.5 834.6V841.1M776.5 833.4V844.4M777.5 834.9V840.5M778.5 833.9V845.0M779.5 834.2V846.4M780.5 834.5V844.7M781.5 832.6V841.1M782.5 829.7V839.7M783.5 832.2V840.8M784.5 833.2V841.5M785.5 832.6V841.5M786.5 831.0V842.7M787.5 830.6V840.0M788.5 830.8V839.2M789.5 832.6V844.2M790.5 828.3V839.3M791.5 833.1V838.7M792.5 832.0V843.3M793.5 834.4V842.6M794.5 834.6V839.4M795.5 832.6V842.9M796.5 834.8V842.9M797.5 832.8V842.5M798.5 833.2V840.2M799.5 831.4V842.4M800.5 829.8V842.3M801.5 832.3V842.3M802.5 832.3V838.0M803.5 829.8V838.4M804.5 829.7V833.9M805.5 829.6V838.5M806.5 828.6V837.0M807.5 831.1V837.7M808.5 831.7V837.6M809.5 831.0V838.2M810.5 831.3V838.4M811.5 830.9V842.8M812.5 831.2V841.0M813.5 828.5V837.8M814.5 832.1V837.7M815.5 830.0V837.0M816.5 826.8V845.9M817.5 831.6V840.8M818.5 830.4V837.4M819.5 830.0V837.7M820.5 829.0V835.2M821.5 828.4V838.8M822.5 829.3V834.2M823.5 827.6V841.0M824.5 830.5V841.0M825.5 829.5V836.9M826.5 825.4V838.9M827.5 832.1V838.2M828.5 830.1V837.2M829.5 828.4V836.8M830.5 826.6V836.4M831.5 825.8V834.5M832.5 824.8V833.3M833.5 824.9V834.7M834.5 825.8V831.6M835.5 825.5V831.2M836.5 826.0V834.0M837.5 826.6V832.1M838.5 824.1V834.0M839.5 826.5V833.8M840.5 826.7V834.0M841.5 825.7V836.9M842.5 827.2V834.2M843.5 829.8V836.4M844.5 828.0V837.4M845.5 828.0V835.3M846.5 829.7V838.6M847.5 825.7V836.0M848.5 826.1V831.4M849.5 820.3V833.7M850.5 822.1V833.7M851.5 828.0V833.0M852.5 826.2V833.0M853.5 825.6V833.6M854.5 827.1V834.0M855.5 826.2V834.3M856.5 828.5V834.8M857.5 826.9V835.7M858.5 826.5V833.8M859.5 825.3V833.2M860.5 827.1V831.9M861.5 826.1V834.0M862.5 825.5V834.4M863.5 826.9V831.5M864.5 826.9V832.0M865.5 823.4V832.7M866.5 825.0V832.2M867.5 823.5V833.9M868.5 822.9V833.1M869.5 825.3V835.2M870.5 823.1V832.0M871.5 823.9V830.0M872.5 819.5V832.0M873.5 822.0V830.8M874.5 818.5V829.4M875.5 825.7V831.9M876.5 823.9V831.3M877.5 825.9V832.7M878.5 824.8V833.0M879.5 821.5V830.1M880.5 822.8V828.2M881.5 822.8V828.2M882.5 821.6V832.9M883.5 821.7V828.0M884.5 821.2V829.8M885.5 823.1V828.9M886.5 824.0V830.0M887.5 822.1V829.3M888.5 821.7V828.9M889.5 822.4V829.8M890.5 820.9V829.1M891.5 822.0V829.0M892.5 822.0V828.3M893.5 825.0V837.1M894.5 823.0V837.1M895.5 820.6V830.0M896.5 822.4V831.4M897.5 820.9V827.1M898.5 821.1V827.6M899.5 821.9V829.7M900.5 821.0V829.2M901.5 820.2V826.8M902.5 819.4V828.4M903.5 816.1V827.2M904.5 819.0V825.0M905.5 816.9V826.2M906.5 817.5V826.9M907.5 818.8V826.9M908.5 821.4V827.3M909.5 819.1V826.8M910.5 813.3V824.3M911.5 813.3V830.1M912.5 821.3V827.8M913.5 818.8V827.4M914.5 822.6V831.4M915.5 817.6V825.8M916.5 821.7V828.1M917.5 818.4V826.4M918.5 817.6V826.4M919.5 817.6V829.4M920.5 814.5V827.2M921.5 814.5V826.0M922.5 817.7V825.9M923.5 819.5V827.7M924.5 819.9V825.6M925.5 816.4V825.2M926.5 817.4V827.7M927.5 817.9V828.6M928.5 818.6V826.0M929.5 819.5V826.0M930.5 816.8V825.4M931.5 817.9V825.1M932.5 816.5V823.9M933.5 817.8V826.6M934.5 814.4V826.0M935.5 816.5V825.1M936.5 816.9V827.8M937.5 815.6V826.1M938.5 818.4V823.6M939.5 817.2V824.4M940.5 816.4V826.4M941.5 810.5V826.4M942.5 817.0V823.1M943.5 805.8V825.5M944.5 814.3V828.9M945.5 814.8V821.3M946.5 814.0V822.2M947.5 817.2V823.0M948.5 813.2V821.7M949.5 813.5V822.4M950.5 814.5V830.9M951.5 817.6V825.7M952.5 818.8V825.7M953.5 816.2V821.9M954.5 815.4V823.8M955.5 815.2V825.9M956.5 817.2V822.7M957.5 815.6V823.9M958.5 815.7V823.0M959.5 814.3V829.4M960.5 815.7V822.6M961.5 812.5V822.6M962.5 812.5V822.5M963.5 814.8V821.1M964.5 810.9V820.5M965.5 810.9V817.4M966.5 812.1V824.7M967.5 816.0V819.1M968.5 812.7V822.6M969.5 814.0V827.3M970.5 815.3V821.0M971.5 811.0V817.8M972.5 812.6V823.7M973.5 811.3V822.1M974.5 811.8V820.9M975.5 814.8V820.8M976.5 813.0V822.2M977.5 813.7V822.6M978.5 812.8V824.1M979.5 813.4V824.1M980.5 813.1V819.2M981.5 809.9V822.6M982.5 812.3V819.3M983.5 813.5V825.4M984.5 812.9V819.8M985.5 812.4V823.2M986.5 813.2V820.2M987.5 811.0V819.9M988.5 809.4V819.7M989.5 803.4V819.0M990.5 812.1V819.6M991.5 812.5V818.9M992.5 799.3V820.7M993.5 811.0V821.4M994.5 812.6V832.8M995.5 810.6V821.9M996.5 811.1V820.6M997.5 811.1V821.8M998.5 812.9V819.2M999.5 806.2V816.0M1000.5 809.4V817.5M1001.5 807.9V817.5M1002.5 807.7V815.4M1003.5 808.0V817.6M1004.5 813.6V818.8M1005.5 809.4V817.9M1006.5 812.1V820.5M1007.5 813.1V816.5M1008.5 809.8V817.0M1009.5 811.2V818.0M1010.5 810.8V818.9M1011.5 805.8V818.9M1012.5 804.6V817.3M1013.5 808.5V820.3M1014.5 810.2V820.7M1015.5 809.0V820.7M1016.5 807.7V818.0M1017.5 807.6V815.6M1018.5 808.3V817.5M1019.5 810.6V822.0M1020.5 807.4V818.6M1021.5 807.4V816.7M1022.5 808.0V817.3M1023.5 810.8V817.1M1024.5 809.2V817.8M1025.5 810.7V818.6M1026.5 805.9V816.8M1027.5 810.4V817.8M1028.5 808.9V816.4M1029.5 808.8V815.7M1030.5 808.8V818.9M1031.5 809.8V816.1M1032.5 808.0V814.5M1033.5 805.3V814.4M1034.5 808.6V816.5M1035.5 807.6V816.1M1036.5 806.2V815.7M1037.5 804.3V814.1M1038.5 808.2V814.3M1039.5 806.9V815.6M1040.5 808.2V814.9M1041.5 808.7V813.1M1042.5 808.7V817.8M1043.5 809.5V816.4M1044.5 808.5V814.9M1045.5 807.4V815.4M1046.5 808.4V814.5M1047.5 806.4V811.3M1048.5 804.2V810.2M1049.5 804.0V811.8M1050.5 806.4V811.2M1051.5 806.3V810.7M1052.5 800.8V812.8M1053.5 804.7V813.1M1054.5 807.6V811.0M1055.5 807.8V812.1M1056.5 803.4V811.7M1057.5 806.9V813.0M1058.5 801.5V812.9M1059.5 805.9V814.3M1060.5 805.9V811.9M1061.5 808.2V814.3M1062.5 804.8V814.4M1063.5 806.1V815.0M1064.5 805.2V815.0M1065.5 806.5V816.1M1066.5 806.4V813.8M1067.5 801.5V812.8M1068.5 805.1V810.8M1069.5 802.7V813.6M1070.5 803.9V814.9M1071.5 802.5V810.1M1072.5 803.8V819.4M1073.5 799.8V811.8M1074.5 805.0V813.9M1075.5 803.7V810.7M1076.5 805.7V815.0M1077.5 804.5V810.2M1078.5 803.9V807.9M1079.5 804.0V811.5M1080.5 804.7V815.4M1081.5 804.0V813.0M1082.5 804.7V814.4M1083.5 803.5V812.3M1084.5 804.4V813.1M1085.5 802.5V813.6M1086.5 805.0V813.4M1087.5 804.3V809.5M1088.5 801.9V809.5M1089.5 803.7V811.3M1090.5 803.6V810.2M1091.5 801.8V809.8M1092.5 803.1V810.3M1093.5 804.2V810.3M1094.5 803.5V810.0M1095.5 798.7V810.0M1096.5 801.2V812.4M1097.5 806.6V812.4M1098.5 803.4V813.5M1099.5 801.6V813.5M1100.5 797.3V810.3M1101.5 801.4V817.2M1102.5 803.3V809.0M1103.5 802.9V816.0M1104.5 801.4V810.7M1105.5 801.4V808.9M1106.5 803.7V811.3M1107.5 801.1V809.6M1108.5 801.9V809.6M1109.5 802.0V808.9M1110.5 801.4V808.6M1111.5 802.9V811.1M1112.5 803.6V811.1M1113.5 803.0V807.9M1114.5 803.2V810.2M1115.5 799.9V810.0M1116.5 802.1V807.0M1117.5 799.5V806.0M1118.5 801.6V810.9M1119.5 803.0V810.9M1120.5 800.9V810.1M1121.5 801.7V808.9M1122.5 802.6V806.6M1123.5 797.9V809.1M1124.5 799.9V806.8M1125.5 799.9V806.8M1126.5 799.9V806.6M1127.5 799.2V804.3M1128.5 796.3V804.8M1129.5 793.8V804.5M1130.5 797.1V804.1M1131.5 800.8V807.5M1132.5 796.0V807.7M1133.5 796.0V808.2M1134.5 798.4V807.3M1135.5 795.9V808.7M1136.5 801.0V808.2M1137.5 798.6V807.7M1138.5 798.6V808.3M1139.5 800.8V808.6M1140.5 797.4V810.1M1141.5 800.4V805.6M1142.5 800.3V808.4M1143.5 799.1V805.6M1144.5 794.5V805.0M1145.5 799.5V805.5M1146.5 799.9V808.4M1147.5 798.2V805.5M1148.5 796.6V806.8M1149.5 799.3V806.0M1150.5 794.9V805.3M1151.5 794.9V802.8M1152.5 801.2V804.6M1153.5 798.9V815.3M1154.5 795.9V815.3M1155.5 801.1V811.3M1156.5 797.3V805.9M1157.5 797.4V805.4M1158.5 798.0V808.3M1159.5 796.5V806.7M1160.5 796.3V805.9M1161.5 797.5V804.6M1162.5 797.3V804.2M1163.5 797.1V805.7M1164.5 792.5V803.6M1165.5 796.5V804.0M1166.5 793.2V808.0M1167.5 789.2V804.0M1168.5 796.3V801.5M1169.5 797.6V804.1M1170.5 793.1V805.2M1171.5 796.0V805.3M1172.5 796.5V805.3M1173.5 797.0V808.3M1174.5 795.4V808.2M1175.5 795.6V802.0M1176.5 791.6V799.9M1177.5 796.6V803.3M1178.5 794.3V803.1M1179.5 799.7V804.6M1180.5 797.9V806.0M1181.5 795.2V803.9M1182.5 797.6V804.4M1183.5 793.4V801.8M1184.5 796.1V804.0M1185.5 791.9V803.8M1186.5 795.3V803.4M1187.5 795.9V808.2M1188.5 795.9V804.1M1189.5 795.6V804.5M1190.5 801.3V809.0M1191.5 790.2V809.7M1192.5 796.2V804.8M1193.5 798.3V804.8M1194.5 796.1V803.9M1195.5 795.1V801.6M1196.5 793.3V801.2M1197.5 787.5V804.3M1198.5 789.7V798.6M1199.5 793.0V802.8M1200.5 793.7V801.1M1201.5 795.5V803.8M1202.5 794.5V804.0M1203.5 793.6V803.2M1204.5 792.4V803.3M1205.5 792.5V797.2M1206.5 794.9V802.2M1207.5 791.5V800.5M1208.5 793.0V798.2M1209.5 793.0V799.9M1210.5 790.2V797.1M1211.5 795.5V801.7M1212.5 794.5V801.5M1213.5 797.4V806.1M1214.5 791.3V803.8M1215.5 791.3V799.3M1216.5 792.7V799.2M1217.5 793.4V800.7M1218.5 792.1V800.0M1219.5 790.2V799.9M1220.5 794.1V801.2M1221.5 795.4V800.4M1222.5 791.9V801.2M1223.5 791.3V800.4M1224.5 794.3V802.1M1225.5 791.4V800.6M1226.5 793.1V798.3M1227.5 791.4V798.3M1228.5 791.0V798.3M1229.5 790.9V800.1M1230.5 790.4V800.1M1231.5 790.4V801.1M1232.5 793.5V800.9M1233.5 793.0V801.4M1234.5 790.9V801.5M1235.5 790.3V797.0M1236.5 787.6V797.8M1237.5 788.1V796.2M1238.5 791.0V798.5M1239.5 790.9V800.0M1240.5 791.1V798.7M1241.5 794.1V797.1M1242.5 790.4V801.8M1243.5 791.1V802.1M1244.5 788.6V802.2M1245.5 793.2V799.0M1246.5 792.7V796.7M1247.5 793.4V799.4M1248.5 792.0V799.6M1249.5 790.2V797.8M1250.5 792.2V801.8M1251.5 790.9V800.9M1252.5 788.4V801.2M1253.5 791.1V801.2M1254.5 787.8V798.2M1255.5 792.0V798.2M1256.5 794.3V798.2M1257.5 789.8V800.1M1258.5 792.0V800.3M1259.5 789.7V798.0M1260.5 789.7V796.6M1261.5 790.4V800.1M1262.5 792.2V801.9M1263.5 791.9V801.9M1264.5 791.1V797.8M1265.5 788.0V797.2M1266.5 788.1V800.1M1267.5 788.8V798.0M1268.5 789.9V796.8M1269.5 787.7V797.1M1270.5 790.8V796.3M1271.5 792.2V796.9M1272.5 791.5V799.8M1273.5 789.4V799.8M1274.5 791.5V800.8M1275.5 788.5V798.8M1276.5 788.5V806.6M1277.5 791.2V797.1M1278.5 790.5V799.2M1279.5 787.6V794.3M1280.5 789.8V795.3M1281.5 792.0V798.4M1282.5 783.6V795.7M1283.5 790.0V794.9M1284.5 786.9V795.1M1285.5 789.2V800.7M1286.5 789.8V795.6M1287.5 792.7V797.2M1288.5 790.5V797.1M1289.5 789.1V797.2M1290.5 790.2V802.4M1291.5 786.9V797.1M1292.5 786.9V798.5M1293.5 788.8V794.9M1294.5 788.8V795.6M1295.5 788.2V795.9M1296.5 790.6V798.7M1297.5 788.6V795.8M1298.5 789.3V796.3M1299.5 787.7V797.8M1300.5 790.7V796.1M1301.5 786.9V796.9M1302.5 787.6V797.8M1303.5 788.6V794.2M1304.5 789.5V797.1M1305.5 788.3V797.9M1306.5 789.9V797.9M1307.5 785.9V794.0M1308.5 785.4V794.8M1309.5 781.7V796.1M1310.5 784.5V796.1M1311.5 788.8V794.3M1312.5 787.4V797.4M1313.5 788.6V797.4M1314.5 784.5V797.1M1315.5 787.2V795.0M1316.5 786.5V795.0M1317.5 785.4V796.6M1318.5 785.2V794.5M1319.5 788.9V796.2M1320.5 787.0V793.9M1321.5 788.7V798.8M1322.5 785.7V802.3M1323.5 785.3V791.4M1324.5 789.0V795.1M1325.5 782.6V795.1M1326.5 788.1V797.9M1327.5 784.8V797.9M1328.5 784.7V792.6M1329.5 785.7V794.3M1330.5 782.6V791.4M1331.5 787.6V794.8M1332.5 787.8V797.2M1333.5 786.2V795.6M1334.5 784.3V795.6M1335.5 786.1V792.8M1336.5 780.8V791.4M1337.5 787.4V793.8M1338.5 786.0V800.0M1339.5 784.8V795.1M1340.5 784.8V795.9M1341.5 787.2V799.5M1342.5 783.2V793.5M1343.5 789.2V794.8M1344.5 789.1V794.4M1345.5 787.7V795.9M1346.5 790.9V795.8M1347.5 787.5V795.2M1348.5 787.2V794.5M1349.5 784.7V797.8M1350.5 785.3V796.6M1351.5 785.3V794.2M1352.5 785.4V793.9M1353.5 784.9V795.3M1354.5 781.8V791.8M1355.5 788.2V798.9M1356.5 789.3V798.1M1357.5 784.8V795.7M1358.5 786.2V794.5M1359.5 785.4V798.7M1360.5 784.4V793.9M1361.5 786.3V796.0M1362.5 785.2V792.8M1363.5 785.2V793.0M1364.5 787.0V796.3M1365.5 787.0V795.1M1366.5 788.8V795.7M1367.5 779.4V792.6M1368.5 786.5V793.8M1369.5 787.1V793.5M1370.5 785.0V792.4M1371.5 786.7V793.6M1372.5 786.9V796.9M1373.5 787.1V793.2M1374.5 787.1V791.7M1375.5 784.5V795.2M1376.5 784.5V797.0M1377.5 786.0V793.2M1378.5 784.5V794.8M1379.5 784.4V794.8M1380.5 785.5V791.0M1381.5 786.0V793.3M1382.5 783.8V792.9M1383.5 782.4V790.8M1384.5 787.2V794.7M1385.5 787.7V791.2M1386.5 783.5V791.7M1387.5 784.9V791.8M1388.5 785.2V792.6M1389.5 784.3V799.9M1390.5 786.5V799.9M1391.5 784.3V794.1M1392.5 785.2V796.2M1393.5 783.3V791.2M1394.5 786.1V794.7M1395.5 786.7V795.8M1396.5 786.3V795.8M1397.5 785.3V792.1M1398.5 788.0V792.9M1399.5 781.6V791.9M1400.5 782.4V793.1M1401.5 782.8V793.0M1402.5 785.8V791.3M1403.5 784.3V793.0M1404.5 784.6V793.0M1405.5 777.2V791.1M1406.5 784.5V794.6M1407.5 787.1V791.9M1408.5 784.7V794.5M1409.5 784.5V791.0M1410.5 785.8V791.6M1411.5 778.6V787.7M1412.5 778.6V791.9M1413.5 783.7V788.6M1414.5 783.6V790.5M1415.5 784.2V792.0M1416.5 780.5V789.5M1417.5 785.5V791.7M1418.5 785.2V790.2M1419.5 786.0V792.0M1420.5 785.9V794.0M1421.5 784.5V795.8M1422.5 784.1V792.2M1423.5 784.8V790.4M1424.5 784.1V791.8M1425.5 783.3V790.6M1426.5 787.2V796.4M1427.5 784.9V790.5M1428.5 782.5V791.3M1429.5 784.3V791.1M1430.5 784.6V790.4M1431.5 783.4V793.4M1432.5 783.3V793.4M1433.5 786.2V790.7M1434.5 782.4V789.0M1435.5 783.5V791.7M1436.5 781.8V789.9M1437.5 781.8V793.3M1438.5 783.4V791.2M1439.5 784.8V791.7M1440.5 782.2V795.0M1441.5 782.2V790.1M1442.5 784.0V789.7M1443.5 782.4V789.6M1444.5 781.6V789.6M1445.5 779.5V790.9M1446.5 780.3V792.9M1447.5 781.6V790.1M1448.5 781.6V792.2M1449.5 783.8V792.2M1450.5 783.2V793.3M1451.5 781.4V793.4M1452.5 783.1V791.8M1453.5 783.1V789.0M1454.5 781.1V788.3M1455.5 780.7V794.8M1456.5 780.2V789.2M1457.5 780.4V789.9M1458.5 779.4V787.5M1459.5 784.0V791.5M1460.5 784.6V791.5M1461.5 779.8V787.4M1462.5 784.3V792.4M1463.5 784.5V791.2M1464.5 784.9V792.6M1465.5 783.3V792.7M1466.5 784.3V794.2M1467.5 783.7V792.8M1468.5 781.7V789.8M1469.5 782.5V790.0M1470.5 782.5V789.0M1471.5 780.8V787.6M1472.5 781.7V790.0M1473.5 780.6V790.0M1474.5 784.0V788.6M1475.5 785.0V795.5M1476.5 783.7V798.7M1477.5 783.5V792.3M1478.5 784.2V790.6M1479.5 783.5V790.6M1480.5 784.4V790.8M1481.5 783.6V795.0M1482.5 783.3V794.0M1483.5 778.6V789.6M1484.5 784.8V788.4M1485.5 782.3V790.3M1486.5 780.8V790.3M1487.5 782.1V790.9M1488.5 772.7V794.5M1489.5 783.5V790.5M1490.5 782.7V790.5M1491.5 786.6V790.1M1492.5 783.7V789.2M1493.5 783.7V791.0M1494.5 784.7V791.9M1495.5 781.5V789.7M1496.5 784.3V790.3M1497.5 783.0V791.1M1498.5 783.4V789.2M1499.5 782.4V789.3M1500.5 782.8V789.5M1501.5 781.7V786.8M1502.5 783.5V788.3M1503.5 784.2V790.2M1504.5 783.5V792.2M1505.5 783.3V790.0M1506.5 780.3V794.3M1507.5 784.0V790.0M1508.5 780.4V793.7M1509.5 784.1V791.4M1510.5 784.0V789.6M1511.5 783.4V792.8M1512.5 783.9V796.0M1513.5 783.9V792.8M1514.5 783.1V788.7M1515.5 785.5V791.1M1516.5 783.2V795.6M1517.5 780.2V793.3M1518.5 784.6V803.2M1519.5 785.2V803.2M1520.5 782.9V791.0M1521.5 783.1V791.0M1522.5 785.0V791.2M1523.5 782.8V788.8M1524.5 783.4V789.9M1525.5 782.9V792.4M1526.5 782.2V788.8M1527.5 781.0V788.1M1528.5 779.9V788.5M1529.5 778.9V788.9M1530.5 781.9V788.7M1531.5 783.8V791.9M1532.5 783.2V791.4M1533.5 782.4V790.7M1534.5 782.0V791.8M1535.5 785.7V789.8M1536.5 783.0V791.8M1537.5 780.7V790.4M1538.5 783.4V791.1M1539.5 783.3V792.2M1540.5 783.4V789.9M1541.5 782.5V790.5M1542.5 783.9V791.9M1543.5 779.2V791.1M1544.5 782.9V790.6M1545.5 786.9V790.6M1546.5 783.8V789.7M1547.5 783.8V790.1M1548.5 782.2V792.4M1549.5 780.1V792.4M1550.5 783.6V791.4M1551.5 782.3V789.9M1552.5 785.0V792.1M1553.5 781.2V791.9M1554.5 780.2V790.2M1555.5 781.6V789.6M1556.5 778.6V792.7M1557.5 782.5V791.2M1558.5 779.7V789.2M1559.5 780.4V789.1M1560.5 780.0V793.3M1561.5 783.1V792.7M1562.5 783.0V794.6M1563.5 784.5V792.2M1564.5 783.8V791.8M1565.5 783.8V793.7M1566.5 781.1V791.9M1567.5 781.0V792.7M1568.5 782.5V789.5M1569.5 780.8V790.0M1570.5 783.6V790.4M1571.5 784.9V791.9M1572.5 784.1V790.5M1573.5 782.5V791.1M1574.5 782.9V790.3M1575.5 778.7V790.8M1576.5 781.9V796.1M1577.5 778.8V791.7M1578.5 783.3V791.7M1579.5 784.6V790.1M1580.5 782.3V790.3M1581.5 783.9V788.8M1582.5 782.2V788.1M1583.5 781.1V792.8M1584.5 782.3V790.8M1585.5 781.1V789.1M1586.5 779.4V790.5M1587.5 783.0V790.8M1588.5 783.3V792.0M1589.5 782.7V792.4M1590.5 780.3V789.5M1591.5 783.3V794.5M1592.5 783.2V793.5M1593.5 785.5V793.5M1594.5 782.9V791.5M1595.5 783.5V791.2M1596.5 781.1V790.6M1597.5 783.6V786.6M1598.5 784.0V788.3M1599.5 782.8V793.5M1600.5 784.9V791.8M1601.5 782.7V789.7M1602.5 785.1V795.4M1603.5 784.1V790.1M1604.5 780.9V790.0M1605.5 782.9V789.9M1606.5 783.7V788.5M1607.5 784.4V788.4M1608.5 780.9V790.7M1609.5 780.8V792.3M1610.5 780.8V790.6M1611.5 785.6V793.4M1612.5 785.2V794.0M1613.5 778.9V792.6M1614.5 783.8V790.9M1615.5 783.1V792.6M1616.5 776.7V792.5M1617.5 783.3V789.2M1618.5 780.6V787.8M1619.5 779.7V789.1M1620.5 784.2V791.2M1621.5 782.8V792.1M1622.5 781.4V792.5M1623.5 778.0V790.5M1624.5 782.5V792.4M1625.5 780.7V792.3M1626.5 780.4V788.1M1627.5 780.1V790.2M1628.5 785.4V791.9M1629.5 779.8V791.2M1630.5 778.9V792.9M1631.5 786.4V792.9M1632.5 783.2V792.0M1633.5 784.7V792.0M1634.5 786.6V792.0M1635.5 780.7V788.0M1636.5 781.2V787.4M1637.5 782.7V793.6M1638.5 782.7V791.2M1639.5 779.6V788.6M1640.5 783.4V788.0M1641.5 781.8V788.7M1642.5 782.0V789.6M1643.5 785.5V793.5M1644.5 782.1V794.7M1645.5 785.3V793.0M1646.5 784.8V790.3M1647.5 780.1V790.3M1648.5 782.2V789.9M1649.5 782.0V794.7M1650.5 782.0V790.3M1651.5 783.0V790.2M1652.5 782.6V788.1M1653.5 780.1V789.6M1654.5 782.9V789.9M1655.5 781.8V790.8M1656.5 782.9V792.9M1657.5 785.9V791.9M1658.5 783.2V791.2M1659.5 784.3V791.6M1660.5 781.4V792.7M1661.5 785.2V795.0M1662.5 778.2V790.6M1663.5 785.9V789.8M1664.5 782.8V789.5M1665.5 784.0V789.2M1666.5 783.2V790.9M1667.5 783.1V791.1M1668.5 783.1V792.6M1669.5 785.8V796.2M1670.5 781.7V790.9M1671.5 782.8V790.9M1672.5 780.1V790.8M1673.5 782.2V790.2M1674.5 782.9V790.3M1675.5 782.5V792.8M1676.5 781.3V788.2M1677.5 779.6V788.4M1678.5 782.3V790.5M1679.5 784.7V796.4M1680.5 784.0V796.4M1681.5 781.0V792.3M1682.5 784.2V790.2M1683.5 782.6V791.9M1684.5 782.6V791.9M1685.5 786.3V793.7M1686.5 783.6V791.0M1687.5 784.3V793.6M1688.5 781.3V788.5M1689.5 783.7V794.2M1690.5 783.8V794.2M1691.5 783.4V793.8M1692.5 784.8V790.3M1693.5 782.7V790.3M1694.5 785.3V794.9M1695.5 783.1V794.9M1696.5 785.8V793.4M1697.5 783.9V793.2M1698.5 785.2V792.6M1699.5 787.0V794.9M1700.5 785.0V796.5M1701.5 784.6V796.5M1702.5 783.6V796.2M1703.5 781.8V796.2M1704.5 784.7V791.5M1705.5 783.4V790.9M1706.5 778.5V791.2M1707.5 782.7V789.2M1708.5 783.0V791.4M1709.5 783.5V790.8M1710.5 783.7V792.3M1711.5 782.1V795.9M1712.5 787.8V795.6M1713.5 785.8V794.8M1714.5 783.8V791.4M1715.5 785.6V790.8M1716.5 785.6V790.8M1717.5 782.9V791.5M1718.5 786.6V792.1M1719.5 783.4V796.5M1720.5 780.5V791.3M1721.5 780.5V791.5M1722.5 784.3V792.7M1723.5 785.0V795.2M1724.5 784.8V792.8M1725.5 787.1V794.0M1726.5 785.8V793.8M1727.5 785.2V797.7M1728.5 787.7V793.3M1729.5 787.1V793.6M1730.5 781.7V794.6M1731.5 787.3V794.8M1732.5 788.3V791.9M1733.5 779.9V794.9M1734.5 787.1V793.9M1735.5 780.7V792.6M1736.5 783.8V795.3M1737.5 784.3V791.2M1738.5 784.4V794.8M1739.5 786.1V794.8M1740.5 786.7V792.1M1741.5 780.8V795.2M1742.5 783.1V796.0M1743.5 784.7V792.3M1744.5 786.7V792.7M1745.5 781.2V793.5M1746.5 783.7V792.5M1747.5 784.9V796.3M1748.5 774.3V792.8M1749.5 783.4V792.8M1750.5 786.3V792.6" fill="none" stroke="#181818" stroke-width="1.0"/>
</g>
<line x1="353.5" y1="629" x2="353.5" y2="993" stroke="#000" stroke-width="1"/>
<line x1="1406.5" y1="629" x2="1406.5" y2="993" stroke="#000" stroke-width="1"/>
<line x1="354" y1="679.5" x2="1406" y2="679.5" stroke="#e82020" stroke-width="1.2" stroke-dasharray="13.5 7" stroke-dashoffset="7.5"/>
<rect x="213" y="657.3" width="139" height="43.2" fill="#555555" rx="4" fill-opacity="0.85"/>
<text x="216.7" y="672.9" font-size="14.5" fill="#f2ead8" textLength="59.0" lengthAdjust="spacingAndGlyphs">t: -160 µs</text>
<text x="216.7" y="690.6" font-size="14.5" fill="#f2ead8" textLength="94.0" lengthAdjust="spacingAndGlyphs">v: -36.444 mV</text>
<rect x="750" y="657" width="259" height="47.3" fill="#555555" rx="4" fill-opacity="0.85"/>
<text x="753.9" y="674.8" font-size="14.5" fill="#f2ead8" textLength="98.0" lengthAdjust="spacingAndGlyphs">Δt: 602.860 µs</text>
<text x="877.0" y="674.8" font-size="14.5" fill="#f2ead8" textLength="95.0" lengthAdjust="spacingAndGlyphs">1/Δt: 1.66 kHz</text>
<text x="753.9" y="694.5" font-size="14.5" fill="#f2ead8" textLength="77.0" lengthAdjust="spacingAndGlyphs">Δv: 107 mV</text>
<text x="853.0" y="694.5" font-size="14.5" fill="#f2ead8" textLength="117.0" lengthAdjust="spacingAndGlyphs">Δv/Δt: 177.49 V/s</text>
<rect x="1408" y="657.2" width="139" height="43.5" fill="#555555" rx="4" fill-opacity="0.85"/>
<text x="1411.0" y="672.5" font-size="14.5" fill="#f2ead8" textLength="86.0" lengthAdjust="spacingAndGlyphs">t: 442.860 µs</text>
<text x="1411.0" y="690.3" font-size="14.5" fill="#f2ead8" textLength="88.0" lengthAdjust="spacingAndGlyphs">v: 70.557 mV</text>
<line x1="750" y1="679.5" x2="1009" y2="679.5" stroke="#c01818" stroke-width="1.2" stroke-dasharray="13.5 7" stroke-dashoffset="4"/>
<rect x="326.5" y="629.2" width="45" height="19.2" fill="#5c5c5c" rx="4"/>
<rect x="326.5" y="629.2" width="27" height="19.2" fill="#12c890" rx="4"/>
<circle cx="362.2" cy="638.8" r="8.6" fill="#2d8ed8"/>
<text x="340.0" y="643.8" font-size="15" fill="#0a2a20" text-anchor="middle" textLength="18.0" lengthAdjust="spacingAndGlyphs">C8</text>
<text x="362.2" y="643.8" font-size="14" fill="#e8f0ff" text-anchor="middle">A</text>
<line x1="353.5" y1="629" x2="353.5" y2="648" stroke="#000" stroke-width="1"/>
<rect x="1385.8" y="629" width="48" height="19.8" fill="#5c5c5c" rx="4"/>
<rect x="1406.5" y="629" width="27.5" height="19.8" fill="#12c890" rx="4"/>
<circle cx="1395.6" cy="638.9" r="8.6" fill="#2d8ed8"/>
<text x="1395.6" y="643.8" font-size="14" fill="#e8f0ff" text-anchor="middle">B</text>
<text x="1420.2" y="643.8" font-size="15" fill="#0a2a20" text-anchor="middle" textLength="18.0" lengthAdjust="spacingAndGlyphs">C8</text>
<line x1="1406.5" y1="629" x2="1406.5" y2="649" stroke="#000" stroke-width="1"/>
<path d="M622 629H642L632 638Z" fill="#f0901e"/>
<path d="M623 640H641V659H636L632 666L628 659H623Z" fill="#000" stroke="#f0901e" stroke-width="2"/>
<text x="632.0" y="655.5" font-size="14" fill="#f0901e" font-weight="bold" text-anchor="middle">T</text>
<path d="M1713 635.5H1741Q1745 635.5 1745 639.5V667L1711 638Q1709 635.5 1713 635.5Z" fill="#4a4a4a" stroke="#111" stroke-width="1"/>
<circle cx="1737" cy="643" r="3.8" fill="none" stroke="#9a9a9a" stroke-width="1.4"/>
<line x1="1734" y1="646" x2="1728.5" y2="651.5" stroke="#9a9a9a" stroke-width="1.8" stroke-linecap="round"/>
<text x="1746.0" y="675.5" font-size="13" fill="#00d090" font-weight="bold" text-anchor="end" stroke="#000" stroke-opacity="0.55" stroke-width="1" paint-order="stroke">80 mV</text>
<text x="1746.0" y="711.9" font-size="13" fill="#00d090" font-weight="bold" text-anchor="end" stroke="#000" stroke-opacity="0.55" stroke-width="1" paint-order="stroke">60 mV</text>
<text x="1746.0" y="748.3" font-size="13" fill="#00d090" font-weight="bold" text-anchor="end" stroke="#000" stroke-opacity="0.55" stroke-width="1" paint-order="stroke">40 mV</text>
<text x="1746.0" y="784.7" font-size="13" fill="#00d090" font-weight="bold" text-anchor="end" stroke="#000" stroke-opacity="0.55" stroke-width="1" paint-order="stroke">20 mV</text>
<text x="1746.0" y="821.1" font-size="13" fill="#00d090" font-weight="bold" text-anchor="end" stroke="#000" stroke-opacity="0.55" stroke-width="1" paint-order="stroke">0 V</text>
<text x="1746.0" y="857.5" font-size="13" fill="#00d090" font-weight="bold" text-anchor="end" stroke="#000" stroke-opacity="0.55" stroke-width="1" paint-order="stroke">-20 mV</text>
<text x="1746.0" y="893.9" font-size="13" fill="#00d090" font-weight="bold" text-anchor="end" stroke="#000" stroke-opacity="0.55" stroke-width="1" paint-order="stroke">-40 mV</text>
<text x="1746.0" y="930.3" font-size="13" fill="#00d090" font-weight="bold" text-anchor="end" stroke="#000" stroke-opacity="0.55" stroke-width="1" paint-order="stroke">-60 mV</text>
<text x="1746.0" y="966.7" font-size="13" fill="#00d090" font-weight="bold" text-anchor="end" stroke="#000" stroke-opacity="0.55" stroke-width="1" paint-order="stroke">-80 mV</text>
<rect x="47.5" y="974.5" width="1659" height="18" fill="#b2b2a6" stroke="#14d8a0" stroke-width="1"/>
<text x="108.5" y="987.7" font-size="13" fill="#3c3c34" font-weight="bold" text-anchor="middle" stroke="#000" stroke-opacity="0.2" stroke-width="0.5" paint-order="stroke">-300 µs</text>
<text x="283.3" y="987.7" font-size="13" fill="#3c3c34" font-weight="bold" text-anchor="middle" stroke="#000" stroke-opacity="0.2" stroke-width="0.5" paint-order="stroke">-200 µs</text>
<text x="458.1" y="987.7" font-size="13" fill="#3c3c34" font-weight="bold" text-anchor="middle" stroke="#000" stroke-opacity="0.2" stroke-width="0.5" paint-order="stroke">-100 µs</text>
<text x="632.9" y="987.7" font-size="13" fill="#3c3c34" font-weight="bold" text-anchor="middle" stroke="#000" stroke-opacity="0.2" stroke-width="0.5" paint-order="stroke">0 s</text>
<text x="807.7" y="987.7" font-size="13" fill="#3c3c34" font-weight="bold" text-anchor="middle" stroke="#000" stroke-opacity="0.2" stroke-width="0.5" paint-order="stroke">100 µs</text>
<text x="982.5" y="987.7" font-size="13" fill="#3c3c34" font-weight="bold" text-anchor="middle" stroke="#000" stroke-opacity="0.2" stroke-width="0.5" paint-order="stroke">200 µs</text>
<text x="1157.3" y="987.7" font-size="13" fill="#3c3c34" font-weight="bold" text-anchor="middle" stroke="#000" stroke-opacity="0.2" stroke-width="0.5" paint-order="stroke">300 µs</text>
<text x="1332.1" y="987.7" font-size="13" fill="#3c3c34" font-weight="bold" text-anchor="middle" stroke="#000" stroke-opacity="0.2" stroke-width="0.5" paint-order="stroke">400 µs</text>
<text x="1506.9" y="987.7" font-size="13" fill="#3c3c34" font-weight="bold" text-anchor="middle" stroke="#000" stroke-opacity="0.2" stroke-width="0.5" paint-order="stroke">500 µs</text>
<text x="1681.7" y="987.7" font-size="13" fill="#3c3c34" font-weight="bold" text-anchor="middle" stroke="#000" stroke-opacity="0.2" stroke-width="0.5" paint-order="stroke">600 µs</text>
<path d="M8 798.5H34L41 806V812H8Z" fill="#ffffff" stroke="#e82020" stroke-width="1.2"/>
<path d="M10 803.5H34L42 815.5L34 827.5H10Q6.5 827.5 6.5 824V807Q6.5 803.5 10 803.5Z" fill="#12d394" stroke="#1a1a1a" stroke-width="1"/>
<text x="23.0" y="820.0" font-size="11.5" fill="#111" text-anchor="middle">C 8</text>
<path d="M10 841.5H34L42 853.5L34 865.5H10Q6.5 865.5 6.5 862V845Q6.5 841.5 10 841.5Z" fill="#e6e6e6" stroke="#333" stroke-width="1"/>
<text x="23.0" y="858.0" font-size="11.5" fill="#333" text-anchor="middle">C 1</text>
<text x="53.5" y="816.0" font-size="18" fill="#e81818" textLength="57.5" lengthAdjust="spacingAndGlyphs" stroke="#b01010" stroke-width="0.7">LEM25</text>
<text x="120.0" y="821.7" font-size="18" fill="#10c890" textLength="73.0" lengthAdjust="spacingAndGlyphs" stroke="#0a7050" stroke-width="0.7">S25\DIFF</text>
<text x="53.5" y="858.0" font-size="18" fill="#111" textLength="29.5" lengthAdjust="spacingAndGlyphs" stroke="#111" stroke-width="0.7">S25</text>
<circle cx="353.5" cy="880.5" r="3.5" fill="none" stroke="#888" stroke-width="1.3"/>
<path d="M346.5 873.5L350.5 877.5M360.5 873.5L356.5 877.5M346.5 887.5L350.5 883.5M360.5 887.5L356.5 883.5" stroke="#888" stroke-width="1.5"/>
<circle cx="1406.5" cy="687.5" r="3.5" fill="none" stroke="#888" stroke-width="1.3"/>
<path d="M1399.5 680.5L1403.5 684.5M1413.5 680.5L1409.5 684.5M1399.5 694.5L1403.5 690.5M1413.5 694.5L1409.5 690.5" stroke="#888" stroke-width="1.5"/>
<path d="M1920 29.5H1770.5V995.5H1920" fill="none" stroke="#5e5852" stroke-width="1"/>
<text x="1845.0" y="43.9" font-size="14" fill="#e8e8e8" font-weight="bold" text-anchor="middle" textLength="84.0" lengthAdjust="spacingAndGlyphs">Add New...</text>
<defs><linearGradient id="btng" x1="0" y1="0" x2="0" y2="1"><stop offset="0" stop-color="#3c3c3c"/><stop offset="0.35" stop-color="#2e2e2e"/><stop offset="1" stop-color="#262626"/></linearGradient></defs>
<rect x="1778.5" y="54.9" width="61.5" height="35.1" rx="5" fill="#29b4e6" stroke="#5a6a74" stroke-width="1"/>
<text x="1785.3" y="76.7" font-size="15" fill="#000" textLength="49.7" lengthAdjust="spacingAndGlyphs">Cursors</text>
<rect x="1850.5" y="54.9" width="61.8" height="35.1" rx="5" fill="url(#btng)" stroke="#6a6058" stroke-width="1"/>
<text x="1856.7" y="76.7" font-size="15" fill="#ececec" textLength="48.8" lengthAdjust="spacingAndGlyphs">Callout</text>
<rect x="1778.5" y="100.9" width="61.7" height="35.3" rx="5" fill="url(#btng)" stroke="#6a6058" stroke-width="1"/>
<text x="1780.0" y="122.6" font-size="15" fill="#ececec" textLength="58.5" lengthAdjust="spacingAndGlyphs">Measure</text>
<rect x="1850.5" y="100.9" width="61.8" height="35.3" rx="5" fill="url(#btng)" stroke="#6a6058" stroke-width="1"/>
<text x="1858.5" y="122.6" font-size="15" fill="#ececec" textLength="45.5" lengthAdjust="spacingAndGlyphs">Search</text>
<rect x="1778.5" y="146.8" width="61.7" height="35.3" rx="5" fill="url(#btng)" stroke="#6a6058" stroke-width="1"/>
<text x="1786.0" y="160.8" font-size="15" fill="#ececec" textLength="47.3" lengthAdjust="spacingAndGlyphs">Results</text>
<text x="1791.9" y="176.4" font-size="15" fill="#ececec" textLength="35.5" lengthAdjust="spacingAndGlyphs">Table</text>
<rect x="1850.5" y="146.8" width="61.8" height="35.3" rx="5" fill="url(#btng)" stroke="#6a6058" stroke-width="1"/>
<text x="1867.9" y="168.5" font-size="15" fill="#ececec" textLength="27.1" lengthAdjust="spacingAndGlyphs">Plot</text>
<rect x="1773" y="189" width="144" height="1" fill="#5e5852"/>
<rect x="1778.5" y="196.9" width="61.7" height="35.1" rx="5" fill="url(#btng)" stroke="#6a6058" stroke-width="1"/>
<rect x="1850.5" y="196.9" width="61.8" height="35.1" rx="5" fill="url(#btng)" stroke="#6a6058" stroke-width="1"/>
<text x="1856.6" y="218.9" font-size="15" fill="#ececec" textLength="49.8" lengthAdjust="spacingAndGlyphs">More...</text>
<rect x="1773" y="241" width="144" height="1" fill="#5e5852"/>
<rect x="1798" y="202.5" width="22" height="19.5" fill="none" stroke="#a8a8a8" stroke-width="1.6" stroke-dasharray="2.6 2"/>
<circle cx="1810.2" cy="209.5" r="4.6" fill="none" stroke="#b4b4b4" stroke-width="1.6"/>
<line x1="1806.8" y1="213" x2="1802.5" y2="217.5" stroke="#b4b4b4" stroke-width="2.2" stroke-linecap="round"/>
<path d="M1815 215L1823.5 221L1820 221.8L1822.2 226L1820.6 226.8L1818.4 222.6L1815.8 224.8Z" fill="#b4b4b4"/>
<clipPath id="sb255"><rect x="1773" y="255" width="144" height="57" rx="5"/></clipPath>
<g clip-path="url(#sb255)">
<rect x="1773" y="255" width="144" height="57" fill="#c8c8c8"/>
<rect x="1773" y="255" width="144" height="19" fill="#5a5a5e"/>
<rect x="1773" y="274" width="144" height="1.6" fill="#a8a8a8"/>
</g>
<text x="1778.6" y="268.6" font-size="14.5" fill="#f2f2f2" textLength="56.0" lengthAdjust="spacingAndGlyphs">Search 1</text>
<rect x="1889" y="258.5" width="22.5" height="12.5" rx="6.2" fill="#0000e8" stroke="#222" stroke-width="1"/>
<text x="1900.2" y="269.2" font-size="11.5" fill="#ffffff" text-anchor="middle">6</text>
<path d="M1894 278H1912L1903 291Z" fill="#c880b8"/>
<text x="1778.6" y="288.4" font-size="14.5" fill="#1a1a1a" textLength="81.0" lengthAdjust="spacingAndGlyphs">Search: Edge</text>
<text x="1778.6" y="307.0" font-size="14.5" fill="#1a1a1a" textLength="58.0" lengthAdjust="spacingAndGlyphs">Events: --</text>
<clipPath id="sb320"><rect x="1773" y="320" width="144" height="57" rx="5"/></clipPath>
<g clip-path="url(#sb320)">
<rect x="1773" y="320" width="144" height="57" fill="#c8c8c8"/>
<rect x="1773" y="320" width="144" height="19" fill="#000000"/>
<rect x="1773" y="339" width="144" height="1.6" fill="#a8a8a8"/>
</g>
<text x="1778.6" y="333.6" font-size="14.5" fill="#f2f2f2" textLength="57.0" lengthAdjust="spacingAndGlyphs">Search 2</text>
<rect x="1889" y="323.5" width="22.5" height="12.5" rx="6.2" fill="#0000e8" stroke="#222" stroke-width="1"/>
<text x="1900.2" y="334.2" font-size="11.5" fill="#ffffff" text-anchor="middle">6</text>
<path d="M1894 343H1912L1903 356Z" fill="#6aaed8"/>
<text x="1778.6" y="353.4" font-size="14.5" fill="#1a1a1a" textLength="81.0" lengthAdjust="spacingAndGlyphs">Search: Edge</text>
<text x="1778.6" y="372.0" font-size="14.5" fill="#1a1a1a" textLength="58.0" lengthAdjust="spacingAndGlyphs">Events: --</text>
<circle cx="1762" cy="504" r="2.3" fill="#9a9a9a"/>
<circle cx="1762" cy="512" r="2.3" fill="#9a9a9a"/>
<circle cx="1762" cy="520" r="2.3" fill="#9a9a9a"/>
<clipPath id="cb3"><rect x="3" y="1001" width="90" height="76" rx="5"/></clipPath>
<g clip-path="url(#cb3)">
<rect x="3" y="1001" width="90" height="76" fill="#c8c8c8"/>
<rect x="3" y="1001" width="90" height="19" fill="#1e1e1e"/>
<rect x="3" y="1020" width="90" height="1.8" fill="#a8a8a8"/>
</g>
<text x="8.7" y="1014.8" font-size="15" fill="#f0e62a" textLength="27.6" lengthAdjust="spacingAndGlyphs">Ch 1</text>
<text x="8.7" y="1034.8" font-size="14.5" fill="#111" textLength="55.3" lengthAdjust="spacingAndGlyphs">2 mV/div</text>
<text x="8.7" y="1053.3" font-size="14.5" fill="#111" textLength="58.5" lengthAdjust="spacingAndGlyphs">10 dB/div</text>
<text x="8.7" y="1072.2" font-size="14.5" fill="#111" textLength="49.3" lengthAdjust="spacingAndGlyphs">20 MHz</text>
<text x="74.8" y="1067.0" font-size="8.5" fill="#111" font-weight="bold">B</text>
<text x="79.4" y="1069.8" font-size="8.5" fill="#111" font-weight="bold">w</text>
<clipPath id="cb98"><rect x="98" y="1001" width="90" height="76" rx="5"/></clipPath>
<g clip-path="url(#cb98)">
<rect x="98" y="1001" width="90" height="76" fill="#c8c8c8"/>
<rect x="98" y="1001" width="90" height="19" fill="#4c1a1a"/>
<rect x="98" y="1020" width="90" height="1.8" fill="#a8a8a8"/>
</g>
<text x="103.7" y="1014.8" font-size="15" fill="#f4f4f4" textLength="29.8" lengthAdjust="spacingAndGlyphs">Ch 2</text>
<text x="103.7" y="1034.8" font-size="14.5" fill="#111" textLength="55.3" lengthAdjust="spacingAndGlyphs">2 mV/div</text>
<text x="103.7" y="1053.3" font-size="14.5" fill="#111" textLength="58.5" lengthAdjust="spacingAndGlyphs">10 dB/div</text>
<text x="103.7" y="1072.2" font-size="14.5" fill="#111" textLength="49.3" lengthAdjust="spacingAndGlyphs">20 MHz</text>
<text x="169.8" y="1067.0" font-size="8.5" fill="#111" font-weight="bold">B</text>
<text x="174.4" y="1069.8" font-size="8.5" fill="#111" font-weight="bold">w</text>
<clipPath id="cb193"><rect x="193" y="1001" width="90" height="76" rx="5"/></clipPath>
<g clip-path="url(#cb193)">
<rect x="193" y="1001" width="90" height="76" fill="#7e7e7e"/>
<rect x="193" y="1001" width="90" height="19" fill="#1c1c92"/>
<rect x="193" y="1020" width="90" height="1.8" fill="#6c6c6c"/>
</g>
<text x="198.7" y="1014.8" font-size="15" fill="#a8aed8" textLength="29.2" lengthAdjust="spacingAndGlyphs">Ch 6</text>
<text x="198.7" y="1034.8" font-size="14.5" fill="#2e2e2e" textLength="72.5" lengthAdjust="spacingAndGlyphs">100 mV/div</text>
<text x="198.7" y="1053.3" font-size="14.5" fill="#2e2e2e" textLength="35.0" lengthAdjust="spacingAndGlyphs">1 MΩ</text>
<text x="198.7" y="1072.2" font-size="14.5" fill="#2e2e2e" textLength="57.5" lengthAdjust="spacingAndGlyphs">500 MHz</text>
<text x="265.0" y="1067.0" font-size="8.5" fill="#2e2e2e" font-weight="bold">B</text>
<text x="269.6" y="1069.8" font-size="8.5" fill="#2e2e2e" font-weight="bold">w</text>
<path d="M246.5 1050C247.5 1040 250 1040 251.5 1046C253 1052 255.5 1052 257 1043" fill="none" stroke="#2e2e2e" stroke-width="1.4"/>
<clipPath id="cb288"><rect x="288" y="1001" width="90" height="76" rx="5"/></clipPath>
<g clip-path="url(#cb288)">
<rect x="288" y="1001" width="90" height="76" fill="#c8c8c8"/>
<rect x="288" y="1001" width="90" height="19" fill="#00d898"/>
<rect x="288" y="1020" width="90" height="1.8" fill="#a8a8a8"/>
</g>
<text x="293.7" y="1014.8" font-size="15" fill="#0c0c0c" textLength="29.2" lengthAdjust="spacingAndGlyphs">Ch 8</text>
<text x="293.7" y="1034.8" font-size="14.5" fill="#111" textLength="64.2" lengthAdjust="spacingAndGlyphs">20 mV/div</text>
<text x="293.7" y="1053.3" font-size="14.5" fill="#111" textLength="58.8" lengthAdjust="spacingAndGlyphs">10 dB/div</text>
<text x="293.7" y="1072.2" font-size="14.5" fill="#111" textLength="49.2" lengthAdjust="spacingAndGlyphs">20 MHz</text>
<text x="360.0" y="1067.0" font-size="8.5" fill="#111" font-weight="bold">B</text>
<text x="364.6" y="1069.8" font-size="8.5" fill="#111" font-weight="bold">w</text>
<path d="M94 1047Q94.5 1041 98 1041" fill="none" stroke="#111" stroke-width="1.2"/>
<path d="M189 1047Q189.5 1041 193 1041" fill="none" stroke="#111" stroke-width="1.2"/>
<path d="M284 1047Q284.5 1041 288 1041" fill="none" stroke="#111" stroke-width="1.2"/>
<path d="M379 1047Q379.5 1041 383 1041" fill="none" stroke="#111" stroke-width="1.2"/>
<rect x="707.5" y="999.5" width="38.5" height="77" rx="5" fill="url(#btng)" stroke="#6a6058" stroke-width="1"/>
<rect x="711.5" y="1007" width="31" height="2.2" fill="#e84050"/>
<text x="726.8" y="1049.0" font-size="20" fill="#e8e8e8" text-anchor="middle" textLength="11.0" lengthAdjust="spacingAndGlyphs">3</text>
<rect x="752.5" y="999.5" width="38.5" height="77" rx="5" fill="url(#btng)" stroke="#6a6058" stroke-width="1"/>
<rect x="756.5" y="1007" width="31" height="2.2" fill="#1c9c2c"/>
<text x="771.8" y="1049.0" font-size="20" fill="#e8e8e8" text-anchor="middle" textLength="11.0" lengthAdjust="spacingAndGlyphs">4</text>
<rect x="797.5" y="999.5" width="38.5" height="77" rx="5" fill="url(#btng)" stroke="#6a6058" stroke-width="1"/>
<rect x="801.5" y="1007" width="31" height="2.2" fill="#f09020"/>
<text x="816.8" y="1049.0" font-size="20" fill="#e8e8e8" text-anchor="middle" textLength="11.0" lengthAdjust="spacingAndGlyphs">5</text>
<rect x="842.5" y="999.5" width="38.5" height="77" rx="5" fill="url(#btng)" stroke="#6a6058" stroke-width="1"/>
<rect x="846.5" y="1007" width="31" height="2.2" fill="#e050c8"/>
<text x="861.8" y="1049.0" font-size="20" fill="#e8e8e8" text-anchor="middle" textLength="11.0" lengthAdjust="spacingAndGlyphs">7</text>
<line x1="892.5" y1="1000" x2="892.5" y2="1077" stroke="#5e5852" stroke-width="1"/>
<line x1="1043.5" y1="1000" x2="1043.5" y2="1077" stroke="#5e5852" stroke-width="1"/>
<line x1="1104.5" y1="1000" x2="1104.5" y2="1077" stroke="#5e5852" stroke-width="1"/>
<rect x="903.5" y="999.5" width="38.5" height="77" rx="5" fill="url(#btng)" stroke="#6a6058" stroke-width="1"/>
<rect x="907.5" y="1007" width="31" height="2.2" fill="#f09020"/>
<text x="922.8" y="1032.0" font-size="15" fill="#e8e8e8" text-anchor="middle" textLength="26.5" lengthAdjust="spacingAndGlyphs">Add</text>
<text x="922.8" y="1048.0" font-size="15" fill="#e8e8e8" text-anchor="middle" textLength="29.0" lengthAdjust="spacingAndGlyphs">New</text>
<text x="922.8" y="1063.8" font-size="15" fill="#e8e8e8" text-anchor="middle" textLength="33.5" lengthAdjust="spacingAndGlyphs">Math</text>
<rect x="948.5" y="999.5" width="38.5" height="77" rx="5" fill="url(#btng)" stroke="#6a6058" stroke-width="1"/>
<rect x="952.5" y="1007" width="31" height="2.2" fill="#c0c8d8"/>
<text x="967.8" y="1032.0" font-size="15" fill="#e8e8e8" text-anchor="middle" textLength="26.5" lengthAdjust="spacingAndGlyphs">Add</text>
<text x="967.8" y="1048.0" font-size="15" fill="#e8e8e8" text-anchor="middle" textLength="29.0" lengthAdjust="spacingAndGlyphs">New</text>
<text x="967.8" y="1063.8" font-size="15" fill="#e8e8e8" text-anchor="middle" textLength="20.5" lengthAdjust="spacingAndGlyphs">Ref</text>
<rect x="993.5" y="999.5" width="38.5" height="77" rx="5" fill="url(#btng)" stroke="#6a6058" stroke-width="1"/>
<rect x="997.5" y="1007" width="31" height="2.2" fill="#b060f0"/>
<text x="1012.8" y="1032.0" font-size="15" fill="#e8e8e8" text-anchor="middle" textLength="26.5" lengthAdjust="spacingAndGlyphs">Add</text>
<text x="1012.8" y="1048.0" font-size="15" fill="#e8e8e8" text-anchor="middle" textLength="29.0" lengthAdjust="spacingAndGlyphs">New</text>
<text x="1012.8" y="1063.8" font-size="15" fill="#e8e8e8" text-anchor="middle" textLength="22.5" lengthAdjust="spacingAndGlyphs">Bus</text>
<rect x="1054.5" y="999.5" width="38.5" height="77" rx="5" fill="url(#btng)" stroke="#6a6058" stroke-width="1"/>
<rect x="1058.5" y="1007" width="31" height="2.2" fill="#484848"/>
<text x="1073.8" y="1048.0" font-size="15" fill="#e8e8e8" text-anchor="middle" textLength="26.5" lengthAdjust="spacingAndGlyphs">AFG</text>
<clipPath id="ib1116"><rect x="1116" y="1002" width="158" height="74" rx="5"/></clipPath>
<g clip-path="url(#ib1116)">
<rect x="1116" y="1002" width="158" height="74" fill="#c8c8c8"/>
<rect x="1116" y="1002" width="158" height="19" fill="#5a5a5c"/>
<rect x="1116" y="1021" width="158" height="1.8" fill="#a0a0a0"/>
</g>
<text x="1121.0" y="1016.0" font-size="15" fill="#ececec" textLength="65.0" lengthAdjust="spacingAndGlyphs">Spectrum</text>
<text x="1120.5" y="1034.8" font-size="15" fill="#111" textLength="138.0" lengthAdjust="spacingAndGlyphs">CF: 1.06800000 MHz</text>
<text x="1120.5" y="1053.5" font-size="15" fill="#111" textLength="127.7" lengthAdjust="spacingAndGlyphs">Span: 2.00000 MHz</text>
<text x="1120.5" y="1072.3" font-size="15" fill="#111" textLength="95.4" lengthAdjust="spacingAndGlyphs">RBW: 2.00 kHz</text>
<clipPath id="ib1281"><rect x="1281" y="1002" width="198" height="74" rx="5"/></clipPath>
<g clip-path="url(#ib1281)">
<rect x="1281" y="1002" width="198" height="74" fill="#c8c8c8"/>
<rect x="1281" y="1002" width="198" height="19" fill="#5a5a5c"/>
<rect x="1281" y="1021" width="198" height="1.8" fill="#a0a0a0"/>
</g>
<text x="1286.0" y="1016.0" font-size="15" fill="#ececec" textLength="72.9" lengthAdjust="spacingAndGlyphs">Horizontal</text>
<text x="1286.0" y="1034.8" font-size="15" fill="#111" textLength="65.0" lengthAdjust="spacingAndGlyphs">100 µs/div</text>
<text x="1391.7" y="1034.8" font-size="15" fill="#111" textLength="29.8" lengthAdjust="spacingAndGlyphs">1 ms</text>
<text x="1286.0" y="1053.5" font-size="15" fill="#111" textLength="84.4" lengthAdjust="spacingAndGlyphs">SR: 1.25 GS/s</text>
<text x="1391.3" y="1053.5" font-size="15" fill="#111" textLength="60.4" lengthAdjust="spacingAndGlyphs">800 ps/pt</text>
<text x="1286.0" y="1072.3" font-size="15" fill="#111" textLength="87.3" lengthAdjust="spacingAndGlyphs">RL: 1.25 Mpts</text>
<path d="M1391.5 1061.5H1400.5V1069.5H1397.5L1396 1072.5L1394.5 1069.5H1391.5Z" fill="#111" stroke="#f09020" stroke-width="1.2"/>
<text x="1396.0" y="1068.6" font-size="7.5" fill="#f0f0f0" font-weight="bold" text-anchor="middle">T</text>
<text x="1405.2" y="1072.3" font-size="15" fill="#111" textLength="29.8" lengthAdjust="spacingAndGlyphs">36%</text>
<clipPath id="ib1486"><rect x="1486" y="1002" width="158" height="74" rx="5"/></clipPath>
<g clip-path="url(#ib1486)">
<rect x="1486" y="1002" width="158" height="74" fill="#c8c8c8"/>
<rect x="1486" y="1002" width="158" height="19" fill="#5a5a5c"/>
<rect x="1486" y="1021" width="158" height="1.8" fill="#a0a0a0"/>
</g>
<text x="1491.0" y="1016.0" font-size="15" fill="#ececec" textLength="48.5" lengthAdjust="spacingAndGlyphs">Trigger</text>
<rect x="1490.5" y="1023.5" width="29" height="14.5" rx="6" fill="#f5a040" stroke="#333" stroke-width="1"/>
<text x="1505.0" y="1036.0" font-size="14" fill="#222" text-anchor="middle">5</text>
<path d="M1529 1036H1534L1541 1025.5H1546.5" fill="none" stroke="#3c3c90" stroke-width="1.4"/>
<text x="1555.6" y="1034.7" font-size="15" fill="#111" textLength="68.3" lengthAdjust="spacingAndGlyphs">-14.02 mV</text>
<text x="1490.3" y="1054.0" font-size="15" fill="#111" textLength="76.7" lengthAdjust="spacingAndGlyphs">Noise Reject</text>
<clipPath id="ib1651"><rect x="1651" y="1002" width="148" height="74" rx="5"/></clipPath>
<g clip-path="url(#ib1651)">
<rect x="1651" y="1002" width="148" height="74" fill="#c8c8c8"/>
<rect x="1651" y="1002" width="148" height="19" fill="#5a5a5c"/>
<rect x="1651" y="1021" width="148" height="1.8" fill="#a0a0a0"/>
</g>
<text x="1656.0" y="1016.0" font-size="15" fill="#ececec" textLength="76.8" lengthAdjust="spacingAndGlyphs">Acquisition</text>
<text x="1656.0" y="1034.7" font-size="15" fill="#111" textLength="33.7" lengthAdjust="spacingAndGlyphs">Auto,</text>
<text x="1736.2" y="1034.7" font-size="15" fill="#111" textLength="49.0" lengthAdjust="spacingAndGlyphs">Analyze</text>
<text x="1656.0" y="1053.5" font-size="15" fill="#111" textLength="96.7" lengthAdjust="spacingAndGlyphs">Sample: 12 bits</text>
<text x="1656.0" y="1071.3" font-size="15" fill="#111" textLength="69.2" lengthAdjust="spacingAndGlyphs">Single: 1 /1</text>
<line x1="1811.5" y1="1000" x2="1811.5" y2="1077" stroke="#5e5852" stroke-width="1"/>
<rect x="1822.5" y="1000" width="89" height="34.7" rx="5" fill="#f01c24" stroke="#555" stroke-width="0.8"/>
<text x="1866.8" y="1019.8" font-size="14" fill="#ffffff" font-weight="bold" text-anchor="middle" textLength="55.8" lengthAdjust="spacingAndGlyphs">Stopped</text>
<rect x="1822.5" y="1041" width="89" height="35.6" rx="4" fill="#c8c8c8"/>
<text x="1866.8" y="1054.0" font-size="15" fill="#111" text-anchor="middle" textLength="84.8" lengthAdjust="spacingAndGlyphs">21 May 2025</text>
<text x="1867.2" y="1071.3" font-size="15" fill="#111" text-anchor="middle" textLength="57.3" lengthAdjust="spacingAndGlyphs">17:25:24</text>
</svg></body></html>
